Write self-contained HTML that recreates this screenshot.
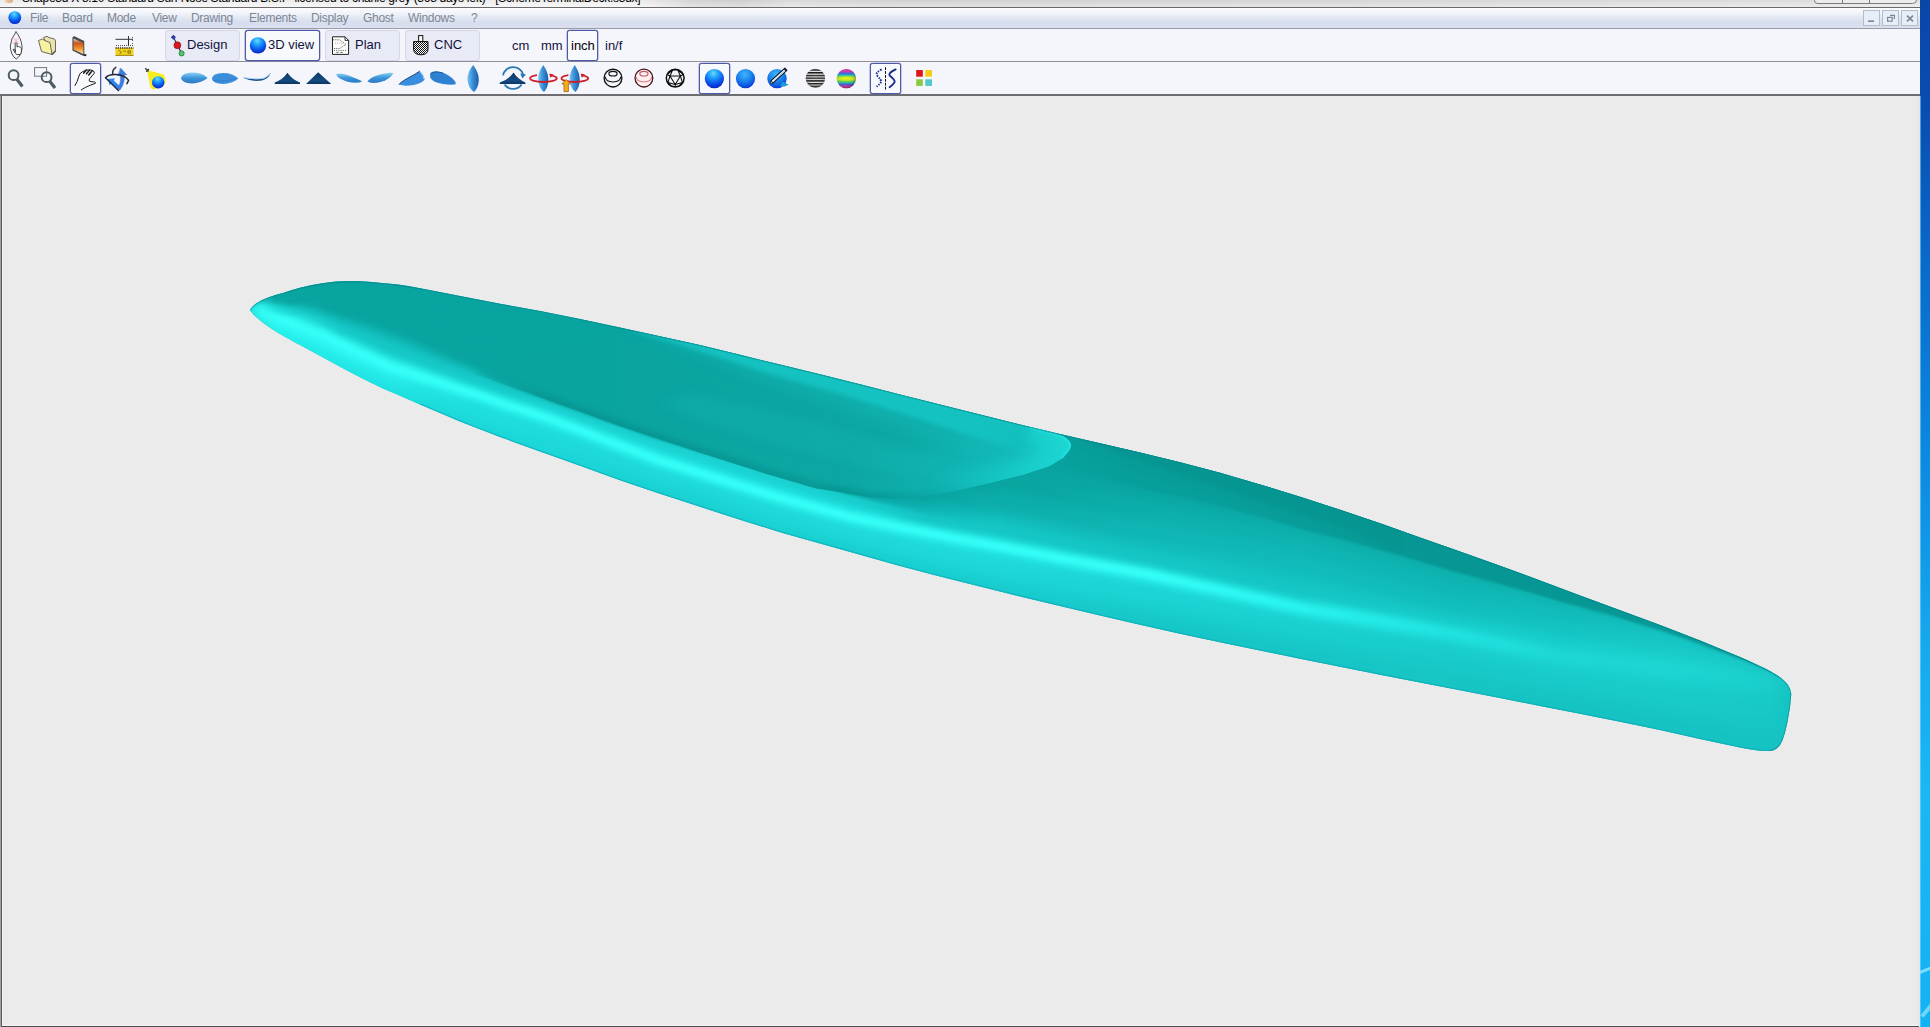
<!DOCTYPE html>
<html>
<head>
<meta charset="utf-8">
<title>Shape3d X</title>
<style>
html,body{margin:0;padding:0;}
body{width:1930px;height:1027px;overflow:hidden;position:relative;background:#ebebeb;font-family:"Liberation Sans",sans-serif;}
.abs{position:absolute;}
#titlestrip{left:0;top:0;width:1920px;height:7px;background:linear-gradient(rgba(0,0,0,.04),rgba(255,255,255,.25)),linear-gradient(90deg,#f4f4f4 0,#f5f5f5 640px,#dcdcdc 690px,#d6d6d6 740px,#e2e2e2 790px,#d9d9d9 900px,#dddddd 1300px,#e4e4e4 1800px,#e9e9e9 1920px);overflow:hidden;}
#titletext{left:22px;top:-9px;font-size:12px;color:#000;white-space:nowrap;letter-spacing:-0.28px;}
#titleline{left:0;top:7px;width:1920px;height:1px;background:#6a6a6a;}
#menubar{left:0;top:8px;width:1920px;height:20px;background:linear-gradient(#fbfcfe 0%,#f1f4fa 25%,#e1e7f2 50%,#d6deed 75%,#dcdff1 100%);}
#menuline{left:0;top:28px;width:1920px;height:1px;background:#9a9ca6;}
.mi{position:absolute;top:11px;font-size:12px;line-height:14px;color:#7c8695;white-space:nowrap;letter-spacing:-0.3px;}
#tb1{left:0;top:29px;width:1920px;height:32px;background:#f5f6fb;}
#tb1line{left:0;top:61px;width:1920px;height:1px;background:#8e9099;}
#tb2{left:0;top:62px;width:1920px;height:32px;background:#f5f6fb;}
#tb2line{left:0;top:94px;width:1920px;height:2px;background:#6e6e72;}
#viewport{left:0;top:96px;width:1920px;height:931px;background:#ebebeb;}
#leftline{left:0;top:96px;width:3px;height:931px;background:linear-gradient(90deg,#a2a2a2 0,#a2a2a2 1px,#585858 1px,#585858 2px,#f3f3f3 2px,#f3f3f3 3px);}
#bottomline{left:2px;top:1025px;width:1917px;height:2px;background:linear-gradient(#f6f6f6 0,#f6f6f6 1px,#4c4c4c 1px,#4c4c4c 2px);}
#rightedge{left:1917px;top:96px;width:3px;height:931px;background:#e4e8e8;}
#desk{overflow:hidden;left:1920px;top:0;width:10px;height:1027px;background:linear-gradient(#0a46a8 0%,#0a4cb0 10%,#0a68c8 24.5%,#0c88e0 44%,#16aaf0 63.5%,#18b8f6 78%,#12b2f4 100%);}
.btn{position:absolute;top:30px;height:29px;width:73px;border:1px solid #d3d7ea;border-radius:3px;background:#e8ebf6;}
.btn.sel{border-color:#4f5aa6;background:#f8f9fd;box-shadow:0 0 0 0.3px #4f5aa6;}
.bt{position:absolute;top:37.2px;font-size:13px;line-height:16px;color:#12123c;white-space:nowrap;}
.ut{position:absolute;top:37.8px;font-size:13px;line-height:15px;color:#12123c;white-space:nowrap;}
.selbox{position:absolute;border:1px solid #4f5aa6;border-radius:2.5px;background:#f8f9fd;box-shadow:0 0 0 0.3px #4f5aa6;}
</style>
</head>
<body>
<div id="titlestrip" class="abs"><div id="titletext" class="abs">Shape3d X 8.10 Standard Surf Nose Standard B.S.I - licensed to charlie grey (368 days left) - [SchemeTerminalDeck.s3dx]</div></div>
<div id="appico" class="abs" style="left:5px;top:0;width:8px;height:3px;background:linear-gradient(90deg,#e8c8a0,#d89858);border-radius:0 0 3px 3px;opacity:.8"></div>
<div id="titleline" class="abs"></div>
<div class="abs" style="left:1836px;top:8px;width:84px;height:20px;background:linear-gradient(90deg,rgba(246,248,252,0),rgba(246,248,252,.85) 40%)"></div>
<div id="menubar" class="abs"></div>
<div id="menuline" class="abs"></div>
<div class="mi" style="left:30px">File</div>
<div class="mi" style="left:62px">Board</div>
<div class="mi" style="left:107px">Mode</div>
<div class="mi" style="left:152px">View</div>
<div class="mi" style="left:191px">Drawing</div>
<div class="mi" style="left:249px">Elements</div>
<div class="mi" style="left:311px">Display</div>
<div class="mi" style="left:363px">Ghost</div>
<div class="mi" style="left:408px">Windows</div>
<div class="mi" style="left:471px">?</div>
<div id="tb1" class="abs"></div>
<div id="tb1line" class="abs"></div>
<div id="tb2" class="abs"></div>
<div id="tb2line" class="abs"></div>
<div id="viewport" class="abs"></div>
<div id="leftline" class="abs"></div>
<div id="rightedge" class="abs"></div>
<div id="bottomline" class="abs"></div>
<div id="desk" class="abs"><div class="abs" style="left:0;top:96px;width:1px;height:931px;background:rgba(120,220,255,0.55)"></div><div class="abs" style="left:-4px;top:968px;width:22px;height:3px;background:rgba(150,230,255,0.8);transform:rotate(-22deg)"></div><div class="abs" style="left:-2px;top:1006px;width:22px;height:4px;background:rgba(150,230,255,0.7);transform:rotate(-50deg)"></div></div>

<!-- toolbar 1 buttons -->
<div class="btn" style="left:165px"></div>
<div class="btn sel" style="left:245px"></div>
<div class="btn" style="left:325px"></div>
<div class="btn" style="left:405px"></div>
<div class="bt" style="left:187px">Design</div>
<div class="bt" style="left:268px">3D view</div>
<div class="bt" style="left:355px">Plan</div>
<div class="bt" style="left:434px">CNC</div>
<div class="selbox" style="left:567px;top:30px;width:29px;height:29px"></div>
<div class="ut" style="left:512px">cm</div>
<div class="ut" style="left:541px">mm</div>
<div class="ut" style="left:571px;color:#000">inch</div>
<div class="ut" style="left:605px">in/f</div>

<!-- toolbar 2 selected boxes -->
<div class="selbox" style="left:70px;top:63px;width:29px;height:29px"></div>
<div class="selbox" style="left:699px;top:63px;width:29px;height:29px"></div>
<div class="selbox" style="left:870px;top:63px;width:29px;height:29px"></div>

<!--ICONS_START-->
<svg class="abs" style="left:0;top:0" width="1920" height="96" viewBox="0 0 1920 96">
<defs>
<radialGradient id="gSph" cx="0.45" cy="0.22" r="0.85"><stop offset="0" stop-color="#6ad8ff"/><stop offset="0.3" stop-color="#1ea0fa"/><stop offset="0.62" stop-color="#0c58ec"/><stop offset="0.9" stop-color="#0828c8"/><stop offset="1" stop-color="#0820a8"/></radialGradient>
<radialGradient id="gSph2" cx="0.45" cy="0.28" r="0.8"><stop offset="0" stop-color="#40b4fc"/><stop offset="0.45" stop-color="#1a86ee"/><stop offset="0.85" stop-color="#0a44d8"/><stop offset="1" stop-color="#0830b8"/></radialGradient><radialGradient id="gShade" cx="0.5" cy="0.42" r="0.58"><stop offset="0" stop-color="#fff" stop-opacity="0.1"/><stop offset="0.6" stop-color="#888" stop-opacity="0.06"/><stop offset="1" stop-color="#333" stop-opacity="0.5"/></radialGradient>
<linearGradient id="gLeafV" x1="0" y1="0" x2="0" y2="1"><stop offset="0" stop-color="#8ad0f4"/><stop offset="0.5" stop-color="#3c94da"/><stop offset="1" stop-color="#2a78c0"/></linearGradient>
<linearGradient id="gLeafH" x1="0" y1="0" x2="1" y2="0"><stop offset="0" stop-color="#7cc4f0"/><stop offset="0.45" stop-color="#3a90d8"/><stop offset="1" stop-color="#1c5ca8"/></linearGradient>
<linearGradient id="gNavy" x1="0" y1="0" x2="0" y2="1"><stop offset="0" stop-color="#0c3a66"/><stop offset="0.7" stop-color="#154a80"/><stop offset="1" stop-color="#0c3560"/></linearGradient>
<linearGradient id="gFlame" x1="0" y1="0" x2="0" y2="1"><stop offset="0" stop-color="#d8dce0"/><stop offset="0.3" stop-color="#c85818"/><stop offset="0.65" stop-color="#f09030"/><stop offset="1" stop-color="#fce8b0"/></linearGradient>
<linearGradient id="gStripe" x1="0" y1="0" x2="0" y2="1">
<stop offset="0" stop-color="#555"/><stop offset="0.10" stop-color="#444"/><stop offset="0.14" stop-color="#eee"/><stop offset="0.22" stop-color="#eee"/><stop offset="0.26" stop-color="#404040"/><stop offset="0.36" stop-color="#404040"/><stop offset="0.40" stop-color="#f4f4f4"/><stop offset="0.48" stop-color="#f4f4f4"/><stop offset="0.52" stop-color="#404040"/><stop offset="0.62" stop-color="#404040"/><stop offset="0.66" stop-color="#ddd"/><stop offset="0.74" stop-color="#ddd"/><stop offset="0.78" stop-color="#3a3a3a"/><stop offset="0.88" stop-color="#444"/><stop offset="0.92" stop-color="#aaa"/><stop offset="1" stop-color="#666"/></linearGradient>
<linearGradient id="gRain" x1="0" y1="0" x2="0" y2="1"><stop offset="0" stop-color="#e03090"/><stop offset="0.14" stop-color="#c040c0"/><stop offset="0.24" stop-color="#3070e0"/><stop offset="0.34" stop-color="#30c8a0"/><stop offset="0.44" stop-color="#90e030"/><stop offset="0.52" stop-color="#d8e820"/><stop offset="0.62" stop-color="#70d838"/><stop offset="0.72" stop-color="#28b8b0"/><stop offset="0.80" stop-color="#4060d8"/><stop offset="0.9" stop-color="#d038b0"/><stop offset="1" stop-color="#e03080"/></linearGradient>
<pattern id="pStr" width="4" height="2.72" patternUnits="userSpaceOnUse" patternTransform="translate(0 69.3)"><rect width="4" height="2.72" fill="#f6f6f6"/><rect width="4" height="1.5" fill="#0c0c0c"/></pattern>
<radialGradient id="gShade2" cx="0.45" cy="0.45" r="0.56"><stop offset="0" stop-color="#fff" stop-opacity="0"/><stop offset="0.75" stop-color="#402040" stop-opacity="0.05"/><stop offset="1" stop-color="#301030" stop-opacity="0.45"/></radialGradient>
<pattern id="pDots" width="2" height="2" patternUnits="userSpaceOnUse"><rect width="2" height="2" fill="#fff"/><rect width="1" height="1" fill="#111"/><rect x="1" y="1" width="1" height="1" fill="#111"/></pattern>
</defs>

<!-- menu app icon -->
<circle cx="14.8" cy="17.6" r="6.4" fill="url(#gSph)"/>

<!-- ROW 1 -->
<!-- board + hand -->
<g fill="none" stroke-linecap="round" stroke-linejoin="round">
<path d="M16 32 Q21.4 38 22.1 47 Q21.8 55.4 16.2 59 Q10.7 55.4 10.3 46 Q10.9 38 16 32 Z" stroke="#3c3c3c" stroke-width="0.9"/>
<path d="M13.2 37.6 L18.8 43.4 M18.8 37.6 L13.2 43.4" stroke="#f0a8b0" stroke-width="1"/>
<path d="M15.2 52 L15.2 43.2 Q16.2 42.2 17 43.2 L17 47 L18.2 46.4 L19.2 47 L20.2 47 L21.4 48.2 L21.4 52 L20.5 54.5 L16.6 54.5 L14 51 L13.2 49.5 Q13.8 48.6 15.2 50 Z" fill="#fff" stroke="#333" stroke-width="0.9"/>
</g>
<!-- folder -->
<g stroke="#6a6a60" stroke-width="1" stroke-linejoin="round">
<path d="M43.5 37.5 L47 36.3 L49 37.6 L54.5 39 L55.5 41 L55.5 51 L52 54.5 Z" fill="#e8e4b0"/>
<path d="M38.5 40.5 L42.5 39 L44.5 40.5 L50 42.5 L52 54.5 L41.5 51.5 Z" fill="#f6f2a0"/>
<path d="M52 54.5 L55.5 51" fill="none" stroke="#555" stroke-width="1.6"/>
</g>
<!-- flame door -->
<g stroke-linejoin="round">
<path d="M72.4 37.4 L74 36.1 L84.2 41 L84.4 54 L86.8 54.7 L85.3 56.2 L82.4 55.5 L72.4 50.6 Z" fill="#4c4c4c"/>
<path d="M73.5 38.4 L83.3 43 L83.3 54 L73.5 49.5 Z" fill="url(#gFlame)"/>
<path d="M83 54.4 L86.8 54.8 L85.3 56.3 Z" fill="#1c1c1c"/>
</g>
<!-- ruler -->
<g>
<path d="M115.5 39.3 H133" stroke="#333" stroke-width="1"/>
<path d="M128.5 36 V46" stroke="#333" stroke-width="1"/>
<path d="M132.5 37 V46" stroke="#555" stroke-width="1" stroke-dasharray="1 2"/>
<path d="M116 45.6 H133" stroke="#444" stroke-width="1" stroke-dasharray="1 1"/>
<rect x="115.5" y="47.8" width="18" height="7.4" fill="#f2d21c"/>
<path d="M115.5 48 H133.5" stroke="#222" stroke-width="1.4" stroke-dasharray="1.2 1"/>
<path d="M115.5 55.4 H133.5" stroke="#9a8410" stroke-width="1"/>
<path d="M118.5 51 a1.5 1.5 0 1 1 1.2 2.6 M123.5 51.2 h2.5 M128 50.8 h2.4 v2.4 h-2.4 z" fill="none" stroke="#7a6a10" stroke-width="0.9"/>
</g>

<!-- Design icon -->
<g>
<path d="M173.2 36.8 L181.6 53.2" stroke="#1a2a6a" stroke-width="1.1"/>
<rect x="171.6" y="35.4" width="3.6" height="3.6" transform="rotate(45 173.4 37.2)" fill="#2a3aa0"/>
<circle cx="177.4" cy="45.3" r="3.5" fill="#d81820" stroke="#801010" stroke-width="0.6"/>
<circle cx="181.6" cy="53.4" r="2.6" fill="#58c070" stroke="#1a7a30" stroke-width="0.7"/>
</g>
<!-- 3D view icon -->
<circle cx="258" cy="45.4" r="8.2" fill="url(#gSph)"/>
<!-- Plan icon -->
<g fill="none" stroke="#222" stroke-width="1">
<path d="M332.5 36.8 H345 L348.6 40.4 V54.4 H332.5 Z" fill="#fdfdfb"/>
<path d="M345 36.8 V40.4 H348.6" stroke-width="0.9"/>
<path d="M333 39.8 H339.5 L346 44.5 L339.5 48.5 H333" stroke="#555" stroke-width="0.9" stroke-dasharray="1.2 1"/>
<path d="M335 43.2 H343" stroke="#b88" stroke-width="0.8" stroke-dasharray="1 1.2"/>
<path d="M334 50.4 H346" stroke="#555" stroke-width="0.9" stroke-dasharray="1 1.2"/>
<path d="M336.5 52.4 h2 M340.5 52.4 h2" stroke="#444" stroke-width="0.9"/>
</g>
<!-- CNC icon -->
<g stroke="#111" stroke-width="1">
<rect x="418.6" y="35.6" width="4.2" height="6" fill="#fafafa"/>
<path d="M413.6 41.6 H428 V49 Q428 54.8 420.8 54.8 Q413.6 54.8 413.6 49 Z" fill="url(#pDots)"/>
</g>
<!-- ROW 2 -->
<!-- magnifier -->
<g fill="none" stroke="#4c5c62" stroke-linecap="butt">
<circle cx="13.6" cy="75.2" r="4.9" stroke-width="2"/>
<path d="M16.8 79.2 L22.4 86.4" stroke-width="3.2"/>
</g>
<!-- zoom rect -->
<g fill="none" stroke="#4c5c62">
<rect x="34.6" y="67.6" width="12" height="8.6" stroke="#707880" stroke-width="1"/>
<circle cx="46.6" cy="77.2" r="4.9" stroke-width="2"/>
<path d="M49.8 81.2 L55 88" stroke-width="3.2"/>
</g>
<!-- hand -->
<g fill="none" stroke="#1c1c1c" stroke-linecap="round" stroke-linejoin="round">
<path d="M75 85.5 Q77.4 82 78.6 77 Q79.2 73.2 82.6 71.6 Q86 69.3 91.2 70 Q94.2 70.6 94.5 72.9 Q92 76 89.6 78.8 Q88.8 80.4 89.4 81.2 Q92 82 94.5 81.9 Q95.9 82.4 95.4 83.3 Q90 85.2 85.2 87.5 Q83 88.6 81.3 89.9" stroke-width="1"/>
<path d="M83.7 73.1 L86.4 70.1 M86.5 73.8 L89.5 70.1 M88.7 75 L92.2 70.7" stroke-width="1.5"/>
</g>
<!-- rotate icon -->
<g fill="none" stroke-linecap="round" stroke-linejoin="round">
<path d="M115.8 67.3 Q112.2 69.6 112.7 73.8" stroke="#2c3438" stroke-width="1.5"/>
<path d="M120.7 68.2 L126.6 74.8 L123.8 75 Q125.6 82 119.8 90.2 L117.6 88.6 Q121.8 82 120.4 75.4 L118.2 75.8 Z" fill="#3a7ee0" stroke="#2a5cb8" stroke-width="0.5"/>
<path d="M105.6 77.8 Q108 74.4 116 74.6 Q125 75.2 128.6 80.4 L126.9 83.6" stroke="#1e2a3c" stroke-width="1.5"/>
<path d="M108 79 L115 78.2 L113.8 80.6 L119.8 86.2 L117.7 89.2 L111.6 83.2 L109.6 85.2 Z" fill="#2f86f0" stroke="none"/>
<path d="M105.6 77.8 L118.4 90.4" stroke="#1e2a3c" stroke-width="1.4"/>
</g>
<!-- light + sphere -->
<g>
<path d="M147 70 L163.6 74.6 Q166.4 79 165 84 L159 88 L152.4 89.6 L150.4 87.6 Z" fill="#f6ee1c"/>
<path d="M145.2 68.2 L148.6 71.4 M146.2 71.8 L148.8 69" stroke="#333" stroke-width="1.3" fill="none"/>
<circle cx="158.2" cy="82.4" r="6.2" fill="url(#gSph)"/>
</g>
<!-- leaf 1 -->
<path d="M181 78.2 Q182 73 192 72.6 Q202 72.6 207.6 78 Q201 83.4 192 83.4 Q182 83.2 181 78.2 Z" fill="url(#gLeafV)"/>
<!-- leaf 2 -->
<path d="M211.8 78.6 Q213 73.4 223 73 Q233 73 238.4 78.6 Q232 84 223 84 Q213 83.8 211.8 78.6 Z" fill="#3a8edc"/>
<path d="M212.4 80 Q222 83 236 78.2" fill="none" stroke="#2a72c0" stroke-width="0.8" opacity="0.7"/>
<!-- rocker curve -->
<path d="M242.6 77.4 Q256 80.4 264 78.6 Q268.4 77 270.6 72.8 Q268.8 79 262 80.4 Q252 82.2 242.6 77.4 Z" fill="#1c5090"/>
<path d="M243 77.4 Q256 79.6 264 78 Q268 76.6 270.4 73" fill="none" stroke="#9ad0f0" stroke-width="0.8"/>
<!-- tri concave -->
<path d="M287.4 72.8 Q292 79.6 300 82.4 L300 83.9 L274.8 83.9 L274.8 82.4 Q283 79.6 287.4 72.8 Z" fill="url(#gNavy)"/>
<!-- tri straight -->
<path d="M318.2 72.3 L331.2 83.9 L306 83.9 Z" fill="url(#gNavy)"/>
<!-- tilted leaf down-right -->
<path d="M336 74.4 Q339.4 71.8 349.4 75.8 Q360 80 362.2 81.6 Q356.6 84.2 346.6 81.4 Q337.4 78.2 336 74.4 Z" fill="url(#gLeafV)"/>
<!-- tilted leaf up-right -->
<path d="M367.4 81.6 Q369.6 77.4 379.8 74.4 Q390 72 393.4 73 Q390.4 79 381.4 81.8 Q371.4 84.4 367.4 81.6 Z" fill="url(#gLeafV)"/>
<!-- wedge -->
<path d="M399 84.6 Q399.4 83 408 78 Q416 74 419.8 71 Q424 75 424.6 79.6 Q423 83 414 85 Q404 86.6 399 84.6 Z" fill="#3a8ede"/>
<path d="M399 84.6 Q399.4 83 408 78 Q416 74 419.8 71" fill="none" stroke="#153a70" stroke-width="0.9"/>
<path d="M419.8 71.4 Q423.6 75 424 79" fill="none" stroke="#a0d4f4" stroke-width="1"/>
<!-- blob -->
<path d="M430 74.4 Q431 70.6 438 71.4 Q446 72.6 452 78 Q456.4 82 455.6 84.2 Q452 85.2 443 84 Q433 82.4 430.4 78 Z" fill="#2e80d0"/>
<path d="M430.6 73.6 Q436 70.4 443 73" fill="none" stroke="#1c5aa0" stroke-width="0.9"/>
<!-- vertical leaf -->
<path d="M473.2 65 Q479 73 478.8 80 Q478.4 88 474 92 Q468 88 467.4 79 Q467.4 72 473.2 65 Z" fill="url(#gLeafH)"/>
<!-- tri with circular arrow -->
<g>
<path d="M523.2 74.6 A10.4 10.4 0 0 0 503 75.4" fill="none" stroke="#2c78b4" stroke-width="1.8"/>
<path d="M504.6 84.6 A10.4 10.4 0 0 0 521.6 84.4" fill="none" stroke="#2c78b4" stroke-width="1.8"/>
<path d="M520.2 73.6 L526 74.4 L522.4 78.6 Z" fill="#2c78b4"/>
<path d="M513.6 72.6 Q518 79.6 525.4 82.4 L525.4 83.9 L499.8 83.9 L499.8 82.4 Q508.6 79.6 513.6 72.6 Z" fill="url(#gNavy)"/>
</g>
<!-- board w/ red ring -->
<g>
<path d="M530 78.4 A13.4 3.8 0 0 1 537 75.2" fill="none" stroke="#cc1c28" stroke-width="1.8"/>
<path d="M543.3 65 Q548.6 73 548.4 80 Q548 88 544 92 Q538.6 88 538.2 79 Q538.2 72 543.3 65 Z" fill="url(#gLeafH)"/>
<path d="M530 78.2 A13.4 3.8 0 0 0 556.8 78.2 A13.4 3.8 0 0 0 551 75.4" fill="none" stroke="#cc1c28" stroke-width="1.8"/>
<path d="M549.2 73.4 L553.6 74.6 L550.4 77.8 Z" fill="#cc1c28"/>
</g>
<g>
<path d="M561.4 78.4 A13.4 3.8 0 0 1 568.4 75.2" fill="none" stroke="#cc1c28" stroke-width="1.8"/>
<path d="M574.7 65 Q580 73 579.8 80 Q579.4 88 575.4 92 Q570 88 569.6 79 Q569.6 72 574.7 65 Z" fill="url(#gLeafH)"/>
<path d="M561.4 78.2 A13.4 3.8 0 0 0 588.2 78.2 A13.4 3.8 0 0 0 582.4 75.4" fill="none" stroke="#cc1c28" stroke-width="1.8"/>
<path d="M580.6 73.4 L585 74.6 L581.8 77.8 Z" fill="#cc1c28"/>
<path d="M566.2 79.4 L570.6 84 L568.4 84 L568.4 91.6 L564 91.6 L564 84 L561.8 84 Z" fill="#f6ac18" stroke="#8a5a08" stroke-width="0.7"/>
</g>
<!-- wire sphere black -->
<g fill="none" stroke="#101010" stroke-width="1.15">
<circle cx="613" cy="78.1" r="8.9" stroke-width="1.35"/>
<ellipse cx="613" cy="73.7" rx="4.1" ry="2.3"/>
<path d="M605.3 76.8 Q605.6 81.9 613 82 Q620.4 81.9 620.7 76.8"/>
</g>
<g fill="none" stroke="#d87888" stroke-width="1.1">
<circle cx="643.9" cy="78.1" r="8.9" fill="#fff0f0" stroke="#4c1820" stroke-width="1.3"/>
<ellipse cx="643.9" cy="73.7" rx="4.1" ry="2.3" stroke="#c05868"/>
<path d="M636.2 76.8 Q636.5 81.9 643.9 82 Q651.3 81.9 651.6 76.8"/>
</g>
<!-- geodesic -->
<g fill="none" stroke="#0c0c0c" stroke-width="1.05" stroke-linejoin="round">
<circle cx="675.2" cy="78.1" r="8.9" stroke-width="1.5"/>
<path d="M670 76 L680.4 76 L675.2 84.6 Z"/>
<path d="M667 74.6 L670 76 L668 82.4 M683.4 74.6 L680.4 76 L682.4 82.4 M675.2 84.6 L675.2 87 M670 76 L672.6 70 L677.8 70 L680.4 76 M668 82.4 L675.2 84.6 L682.4 82.4 M672.6 70 L675.2 69.4 M668 82.4 L670.6 85.6 M682.4 82.4 L679.8 85.6 M667 74.6 L672.6 70 M683.4 74.6 L677.8 70"/>
</g>
<!-- blue spheres -->
<circle cx="714.4" cy="78.6" r="9.6" fill="url(#gSph)"/>
<circle cx="745.5" cy="78.6" r="9.6" fill="url(#gSph2)"/>
<!-- sphere + pen -->
<g>
<circle cx="777" cy="78.6" r="9.7" fill="url(#gSph2)"/>
<path d="M782.6 81.4 L788.6 84.8 L784.4 86.6 L779.6 86 Z" fill="#1a9ad4"/>
<path d="M770.9 80.9 L784.9 68.2 L786.9 70.4 L772.9 83.1 Z" fill="#f6f8fb" stroke="#101828" stroke-width="1.1" stroke-linejoin="round"/>
<path d="M773.6 80.8 L785 70.4" stroke="#9ccaf2" stroke-width="0.9"/>
<path d="M770.9 80.9 L772.9 83.1 L770.2 83.7 Z" fill="#e8ecf0" stroke="#101828" stroke-width="0.7" stroke-linejoin="round"/>
<path d="M784.4 68.8 L786.5 71" stroke="#101828" stroke-width="1.5"/>
</g>
<!-- striped sphere -->
<circle cx="815.4" cy="78.3" r="9.6" fill="url(#pStr)"/>
<circle cx="815.4" cy="78.3" r="9.6" fill="url(#gShade)"/>
<!-- rainbow sphere -->
<circle cx="846.3" cy="78.6" r="9.6" fill="url(#gRain)"/>
<ellipse cx="846.3" cy="78.4" rx="9.2" ry="2.5" fill="#c8ec20" opacity="0.7"/>
<ellipse cx="846.3" cy="78.4" rx="5.5" ry="1.1" fill="#f0f020" opacity="0.7"/>
<circle cx="846.3" cy="78.6" r="9.6" fill="url(#gShade2)"/>
<!-- S|S -->
<g fill="none" stroke="#1c2a8c" stroke-linecap="butt">
<path d="M881.6 69.4 Q875.4 72.6 876.8 75.4 Q881.8 80.2 881 82 Q880 84.2 876.6 86.6" stroke-width="1.9" stroke-dasharray="1.5 1.2"/>
<path d="M885.5 67.2 V89.8" stroke="#101010" stroke-width="1" stroke-dasharray="2.8 1.1"/>
<path d="M895.6 69.4 Q888 73 889.6 75.6 Q895.4 80.2 894.6 82.2 Q893.4 84.6 889.6 87.2" stroke-width="1.9" stroke-linecap="round"/>
</g>
<!-- 4 squares -->
<rect x="916.2" y="70" width="6.6" height="6.7" fill="#e0121a"/>
<rect x="925.3" y="70" width="6.7" height="6.7" fill="#f8cc14"/>
<rect x="916.2" y="79.3" width="6.6" height="6.6" fill="#8cc83e"/>
<rect x="925.3" y="79.3" width="6.7" height="6.6" fill="#52c8ca"/>
<!-- caption buttons (cut off) -->
<g fill="none" stroke="#7c7c7c" stroke-width="1">
<path d="M1814.5 -2 V0.5 Q1814.5 3.5 1818 3.5 H1912.5 Q1916.5 3.5 1916.5 0 V-2" fill="#ececec"/>
<path d="M1842.5 -1 V3.5 M1869.5 -1 V3.5"/>
</g>
<!-- window buttons -->
<g>
<rect x="1863.5" y="10.5" width="16" height="15" fill="#e6eef8" stroke="#b4bcc8" stroke-width="1"/>
<rect x="1882.5" y="10.5" width="16" height="15" fill="#e6eef8" stroke="#b4bcc8" stroke-width="1"/>
<rect x="1901.5" y="10.5" width="16" height="15" fill="#e6eef8" stroke="#b4bcc8" stroke-width="1"/>
<path d="M1868 21.2 H1874" stroke="#7a8694" stroke-width="1.6"/>
<path d="M1890 15.4 H1894.4 V19" fill="none" stroke="#7a8694" stroke-width="1.2"/>
<rect x="1887.6" y="17.4" width="4.6" height="3.8" fill="none" stroke="#7a8694" stroke-width="1.2"/>
<path d="M1907 15.6 L1913 21.4 M1913 15.6 L1907 21.4" stroke="#7a8694" stroke-width="1.6"/>
</g>
</svg>
<!--ICONS_END-->
<!--BOARD_START-->
<svg class="abs" style="left:0;top:96px" width="1920" height="929" viewBox="0 96 1920 929">
<defs>
<clipPath id="bclip"><path d="M250 309.5 253 306.1 256 303.5 259 301.7 262 300.1 265 298.8 268 297.6 271 296.5 274 295.5 277 294.5 280 293.7 283 292.9 286 292 289 291.1 292 290.1 295 289.2 298 288.3 300 287.7 312 285.1 324 283 336 281.6 348 281 360 281.2 372 281.9 384 283.2 396 284.3 408 286 420 288.2 460 296.1 500 303.8 540 310.9 580 318.9 620 327.6 660 336.2 700 345.1 740 354.7 780 364.6 820 374.3 860 384.2 900 394.4 940 404.5 980 414.5 1020 424.4 1060 434.1 1100 443.3 1140 452.4 1180 462.3 1220 472.8 1260 484.4 1300 496.7 1340 509.7 1380 523.2 1420 537.4 1460 551.6 1500 565.8 1540 580.4 1580 595.5 1620 610.3 1660 624.9 1700 640.5 1740 657.1 1748 660.6 1756 664.2 1764 668 1770 671.1 1772.5 672.5 1775 674 1777.5 675.6 1780 677.3 1782.5 679.2 1785 681.5 1787.5 684.2 1790 688.8 1791.3 694 1791.3 694 1790 707.1 1787.5 721.8 1785 732.5 1782.5 740.2 1780 745.1 1777.5 747.8 1775 749.5 1772.5 750.4 1770 751.1 1764 751.1 1756 750.2 1748 749 1740 747.6 1700 739 1660 730.1 1620 721.8 1580 713.8 1540 705.9 1500 698.1 1460 690.3 1420 682.6 1380 674.8 1340 666.8 1300 658.7 1260 650.6 1220 642.3 1180 633.7 1140 624.7 1100 615.5 1060 606 1020 596.4 980 586.6 940 576.5 900 565.9 860 554.7 820 543.6 780 532.2 740 519.8 700 506.8 660 493.8 620 480.3 580 465.8 540 451.4 500 437 460 421.4 420 404.5 408 399.3 396 394.1 384 389 372 383.3 360 377.3 348 371.1 336 364.6 324 358.1 312 351.6 300 345.1 298 344 295 342.4 292 340.8 289 339.1 286 337.4 283 335.7 280 334 277 332.2 274 330.3 271 328.4 268 326.3 265 324.2 262 321.9 259 319.5 256 316.9 253 314 250 310.5Z"/></clipPath>
<filter id="bblur" color-interpolation-filters="sRGB" x="-5%" y="-5%" width="110%" height="110%"><feGaussianBlur stdDeviation="1.2"/></filter>
<linearGradient id="g0" gradientUnits="userSpaceOnUse" x1="250" x2="1791.3"><stop offset="0" stop-color="#27ece8"/><stop offset="0.0039" stop-color="#23d9d5"/><stop offset="0.0078" stop-color="#1bc1be"/><stop offset="0.0117" stop-color="#12b3af"/><stop offset="0.0162" stop-color="#08a4a0"/><stop offset="0.0247" stop-color="#08a4a0"/><stop offset="0.026" stop-color="#08a4a0"/><stop offset="0.0487" stop-color="#08a4a0"/><stop offset="0.059" stop-color="#08a49f"/><stop offset="0.0811" stop-color="#08a49f"/><stop offset="0.0921" stop-color="#08a49f"/><stop offset="0.1103" stop-color="#08a4a0"/><stop offset="0.1174" stop-color="#08a4a0"/><stop offset="0.1362" stop-color="#08a49f"/><stop offset="0.146" stop-color="#08a4a0"/><stop offset="0.1622" stop-color="#08a4a0"/><stop offset="0.1882" stop-color="#08a4a0"/><stop offset="0.1946" stop-color="#08a4a0"/><stop offset="0.2141" stop-color="#08a4a0"/><stop offset="0.2401" stop-color="#08a4a0"/><stop offset="0.266" stop-color="#08a4a0"/><stop offset="0.292" stop-color="#08a4a0"/><stop offset="0.3179" stop-color="#08a4a0"/><stop offset="0.3439" stop-color="#08a4a0"/><stop offset="0.3698" stop-color="#08a4a0"/><stop offset="0.3893" stop-color="#08a4a0"/><stop offset="0.3958" stop-color="#08a4a0"/><stop offset="0.4217" stop-color="#08a4a0"/><stop offset="0.4379" stop-color="#08a4a0"/><stop offset="0.4477" stop-color="#08a3a0"/><stop offset="0.4736" stop-color="#08a4a0"/><stop offset="0.4866" stop-color="#08a4a0"/><stop offset="0.4996" stop-color="#08a29e"/><stop offset="0.5255" stop-color="#079f9c"/><stop offset="0.5515" stop-color="#069c99"/><stop offset="0.5774" stop-color="#059996"/><stop offset="0.5839" stop-color="#059996"/><stop offset="0.6034" stop-color="#059996"/><stop offset="0.6293" stop-color="#059996"/><stop offset="0.6553" stop-color="#059996"/><stop offset="0.6812" stop-color="#059996"/><stop offset="0.7072" stop-color="#059996"/><stop offset="0.7331" stop-color="#059996"/><stop offset="0.7591" stop-color="#059996"/><stop offset="0.7786" stop-color="#059896"/><stop offset="0.7851" stop-color="#059896"/><stop offset="0.811" stop-color="#059896"/><stop offset="0.837" stop-color="#059996"/><stop offset="0.8499" stop-color="#059996"/><stop offset="0.8629" stop-color="#069a97"/><stop offset="0.8889" stop-color="#079d9a"/><stop offset="0.9148" stop-color="#09a2a0"/><stop offset="0.9207" stop-color="#0aa5a3"/><stop offset="0.9408" stop-color="#0eb0af"/><stop offset="0.9609" stop-color="#12bcbb"/><stop offset="0.9667" stop-color="#13bfbe"/><stop offset="0.9862" stop-color="#18c8c7"/><stop offset="1" stop-color="#15c3c2"/></linearGradient>
<linearGradient id="g1" gradientUnits="userSpaceOnUse" x1="250" x2="1791.3"><stop offset="0" stop-color="#27ece8"/><stop offset="0.0039" stop-color="#23d9d5"/><stop offset="0.0078" stop-color="#1bc1be"/><stop offset="0.0117" stop-color="#12b3af"/><stop offset="0.0162" stop-color="#08a4a0"/><stop offset="0.0247" stop-color="#08a4a0"/><stop offset="0.026" stop-color="#08a4a0"/><stop offset="0.0487" stop-color="#08a4a0"/><stop offset="0.059" stop-color="#08a39f"/><stop offset="0.0811" stop-color="#08a39f"/><stop offset="0.0921" stop-color="#08a39f"/><stop offset="0.1103" stop-color="#08a4a0"/><stop offset="0.1174" stop-color="#08a4a0"/><stop offset="0.1362" stop-color="#08a4a0"/><stop offset="0.146" stop-color="#08a4a0"/><stop offset="0.1622" stop-color="#08a3a0"/><stop offset="0.1882" stop-color="#08a4a0"/><stop offset="0.1946" stop-color="#08a4a0"/><stop offset="0.2141" stop-color="#08a4a0"/><stop offset="0.2401" stop-color="#08a4a0"/><stop offset="0.266" stop-color="#08a4a0"/><stop offset="0.292" stop-color="#08a4a0"/><stop offset="0.3179" stop-color="#08a4a0"/><stop offset="0.3439" stop-color="#08a4a0"/><stop offset="0.3698" stop-color="#08a4a0"/><stop offset="0.3893" stop-color="#08a4a0"/><stop offset="0.3958" stop-color="#08a4a0"/><stop offset="0.4217" stop-color="#08a4a0"/><stop offset="0.4379" stop-color="#08a4a0"/><stop offset="0.4477" stop-color="#08a4a0"/><stop offset="0.4736" stop-color="#08a4a0"/><stop offset="0.4866" stop-color="#08a4a0"/><stop offset="0.4996" stop-color="#08a29e"/><stop offset="0.5255" stop-color="#079f9c"/><stop offset="0.5515" stop-color="#069c99"/><stop offset="0.5774" stop-color="#059996"/><stop offset="0.5839" stop-color="#059996"/><stop offset="0.6034" stop-color="#059996"/><stop offset="0.6293" stop-color="#059996"/><stop offset="0.6553" stop-color="#059996"/><stop offset="0.6812" stop-color="#059996"/><stop offset="0.7072" stop-color="#059996"/><stop offset="0.7331" stop-color="#059996"/><stop offset="0.7591" stop-color="#059996"/><stop offset="0.7786" stop-color="#059896"/><stop offset="0.7851" stop-color="#059896"/><stop offset="0.811" stop-color="#059896"/><stop offset="0.837" stop-color="#059996"/><stop offset="0.8499" stop-color="#059996"/><stop offset="0.8629" stop-color="#069a97"/><stop offset="0.8889" stop-color="#08a09d"/><stop offset="0.9148" stop-color="#0cabaa"/><stop offset="0.9207" stop-color="#0eafae"/><stop offset="0.9408" stop-color="#11b8b7"/><stop offset="0.9609" stop-color="#14c1c0"/><stop offset="0.9667" stop-color="#15c3c2"/><stop offset="0.9862" stop-color="#18c9c8"/><stop offset="1" stop-color="#15c3c2"/></linearGradient>
<linearGradient id="g2" gradientUnits="userSpaceOnUse" x1="250" x2="1791.3"><stop offset="0" stop-color="#27ece8"/><stop offset="0.0039" stop-color="#23d9d5"/><stop offset="0.0078" stop-color="#1bc2be"/><stop offset="0.0117" stop-color="#12b3af"/><stop offset="0.0162" stop-color="#08a4a0"/><stop offset="0.0247" stop-color="#08a4a0"/><stop offset="0.026" stop-color="#08a4a0"/><stop offset="0.0487" stop-color="#08a4a0"/><stop offset="0.059" stop-color="#08a4a0"/><stop offset="0.0811" stop-color="#08a4a0"/><stop offset="0.0921" stop-color="#08a4a0"/><stop offset="0.1103" stop-color="#08a4a0"/><stop offset="0.1174" stop-color="#08a4a0"/><stop offset="0.1362" stop-color="#08a4a0"/><stop offset="0.146" stop-color="#08a4a0"/><stop offset="0.1622" stop-color="#08a39f"/><stop offset="0.1882" stop-color="#08a4a0"/><stop offset="0.1946" stop-color="#08a4a0"/><stop offset="0.2141" stop-color="#08a4a0"/><stop offset="0.2401" stop-color="#08a4a0"/><stop offset="0.266" stop-color="#08a4a0"/><stop offset="0.292" stop-color="#08a4a0"/><stop offset="0.3179" stop-color="#08a4a0"/><stop offset="0.3439" stop-color="#08a4a0"/><stop offset="0.3698" stop-color="#08a4a0"/><stop offset="0.3893" stop-color="#08a4a0"/><stop offset="0.3958" stop-color="#08a4a0"/><stop offset="0.4217" stop-color="#08a4a0"/><stop offset="0.4379" stop-color="#08a4a0"/><stop offset="0.4477" stop-color="#08a4a0"/><stop offset="0.4736" stop-color="#08a4a0"/><stop offset="0.4866" stop-color="#08a4a0"/><stop offset="0.4996" stop-color="#08a29e"/><stop offset="0.5255" stop-color="#079f9c"/><stop offset="0.5515" stop-color="#069d99"/><stop offset="0.5774" stop-color="#059a97"/><stop offset="0.5839" stop-color="#059996"/><stop offset="0.6034" stop-color="#059996"/><stop offset="0.6293" stop-color="#059996"/><stop offset="0.6553" stop-color="#059996"/><stop offset="0.6812" stop-color="#059996"/><stop offset="0.7072" stop-color="#059996"/><stop offset="0.7331" stop-color="#059996"/><stop offset="0.7591" stop-color="#059996"/><stop offset="0.7786" stop-color="#059896"/><stop offset="0.7851" stop-color="#059896"/><stop offset="0.811" stop-color="#059896"/><stop offset="0.837" stop-color="#059996"/><stop offset="0.8499" stop-color="#059996"/><stop offset="0.8629" stop-color="#069b98"/><stop offset="0.8889" stop-color="#09a3a0"/><stop offset="0.9148" stop-color="#12bbba"/><stop offset="0.9207" stop-color="#13bfbe"/><stop offset="0.9408" stop-color="#14c2c0"/><stop offset="0.9609" stop-color="#16c5c3"/><stop offset="0.9667" stop-color="#17c7c5"/><stop offset="0.9862" stop-color="#19cac9"/><stop offset="1" stop-color="#15c3c2"/></linearGradient>
<linearGradient id="g3" gradientUnits="userSpaceOnUse" x1="250" x2="1791.3"><stop offset="0" stop-color="#27ece8"/><stop offset="0.0039" stop-color="#23dad5"/><stop offset="0.0078" stop-color="#1cc2bf"/><stop offset="0.0117" stop-color="#12b3b0"/><stop offset="0.0162" stop-color="#08a4a0"/><stop offset="0.0247" stop-color="#08a4a0"/><stop offset="0.026" stop-color="#08a4a0"/><stop offset="0.0487" stop-color="#08a4a0"/><stop offset="0.059" stop-color="#08a4a0"/><stop offset="0.0811" stop-color="#08a4a0"/><stop offset="0.0921" stop-color="#08a4a0"/><stop offset="0.1103" stop-color="#08a4a0"/><stop offset="0.1174" stop-color="#08a4a0"/><stop offset="0.1362" stop-color="#08a4a0"/><stop offset="0.146" stop-color="#08a4a0"/><stop offset="0.1622" stop-color="#08a4a0"/><stop offset="0.1882" stop-color="#08a4a0"/><stop offset="0.1946" stop-color="#08a4a0"/><stop offset="0.2141" stop-color="#08a4a0"/><stop offset="0.2401" stop-color="#08a4a0"/><stop offset="0.266" stop-color="#08a4a0"/><stop offset="0.292" stop-color="#08a4a0"/><stop offset="0.3179" stop-color="#08a4a0"/><stop offset="0.3439" stop-color="#08a4a0"/><stop offset="0.3698" stop-color="#08a4a0"/><stop offset="0.3893" stop-color="#08a4a0"/><stop offset="0.3958" stop-color="#08a4a0"/><stop offset="0.4217" stop-color="#08a4a0"/><stop offset="0.4379" stop-color="#08a4a0"/><stop offset="0.4477" stop-color="#08a4a0"/><stop offset="0.4736" stop-color="#08a4a0"/><stop offset="0.4866" stop-color="#08a4a0"/><stop offset="0.4996" stop-color="#08a29e"/><stop offset="0.5255" stop-color="#07a09c"/><stop offset="0.5515" stop-color="#069d9a"/><stop offset="0.5774" stop-color="#069a97"/><stop offset="0.5839" stop-color="#059a97"/><stop offset="0.6034" stop-color="#059a97"/><stop offset="0.6293" stop-color="#069a97"/><stop offset="0.6553" stop-color="#069a97"/><stop offset="0.6812" stop-color="#069a97"/><stop offset="0.7072" stop-color="#069a97"/><stop offset="0.7331" stop-color="#059996"/><stop offset="0.7591" stop-color="#059996"/><stop offset="0.7786" stop-color="#059896"/><stop offset="0.7851" stop-color="#059896"/><stop offset="0.811" stop-color="#059896"/><stop offset="0.837" stop-color="#059996"/><stop offset="0.8499" stop-color="#059996"/><stop offset="0.8629" stop-color="#069c99"/><stop offset="0.8889" stop-color="#0aa4a2"/><stop offset="0.9148" stop-color="#13bebd"/><stop offset="0.9207" stop-color="#13c0bf"/><stop offset="0.9408" stop-color="#15c3c1"/><stop offset="0.9609" stop-color="#16c7c5"/><stop offset="0.9667" stop-color="#17c8c6"/><stop offset="0.9862" stop-color="#19cac9"/><stop offset="1" stop-color="#15c3c2"/></linearGradient>
<linearGradient id="g4" gradientUnits="userSpaceOnUse" x1="250" x2="1791.3"><stop offset="0" stop-color="#27ece8"/><stop offset="0.0039" stop-color="#24dbd6"/><stop offset="0.0078" stop-color="#1dc5c2"/><stop offset="0.0117" stop-color="#13b5b1"/><stop offset="0.0162" stop-color="#08a4a0"/><stop offset="0.0247" stop-color="#08a4a0"/><stop offset="0.026" stop-color="#08a4a0"/><stop offset="0.0487" stop-color="#08a4a0"/><stop offset="0.059" stop-color="#08a4a0"/><stop offset="0.0811" stop-color="#08a4a0"/><stop offset="0.0921" stop-color="#08a4a0"/><stop offset="0.1103" stop-color="#08a4a0"/><stop offset="0.1174" stop-color="#08a4a0"/><stop offset="0.1362" stop-color="#08a4a0"/><stop offset="0.146" stop-color="#08a4a0"/><stop offset="0.1622" stop-color="#08a4a0"/><stop offset="0.1882" stop-color="#08a4a0"/><stop offset="0.1946" stop-color="#08a4a0"/><stop offset="0.2141" stop-color="#08a4a0"/><stop offset="0.2401" stop-color="#08a4a0"/><stop offset="0.266" stop-color="#08a4a0"/><stop offset="0.292" stop-color="#08a4a0"/><stop offset="0.3179" stop-color="#08a4a0"/><stop offset="0.3439" stop-color="#08a4a0"/><stop offset="0.3698" stop-color="#08a4a0"/><stop offset="0.3893" stop-color="#08a4a0"/><stop offset="0.3958" stop-color="#08a4a0"/><stop offset="0.4217" stop-color="#08a4a0"/><stop offset="0.4379" stop-color="#08a4a0"/><stop offset="0.4477" stop-color="#08a4a0"/><stop offset="0.4736" stop-color="#08a4a0"/><stop offset="0.4866" stop-color="#08a4a0"/><stop offset="0.4996" stop-color="#08a29f"/><stop offset="0.5255" stop-color="#07a09c"/><stop offset="0.5515" stop-color="#069e9a"/><stop offset="0.5774" stop-color="#069b98"/><stop offset="0.5839" stop-color="#069a97"/><stop offset="0.6034" stop-color="#069b98"/><stop offset="0.6293" stop-color="#069b98"/><stop offset="0.6553" stop-color="#069b98"/><stop offset="0.6812" stop-color="#069b98"/><stop offset="0.7072" stop-color="#069b98"/><stop offset="0.7331" stop-color="#069a97"/><stop offset="0.7591" stop-color="#059996"/><stop offset="0.7786" stop-color="#059896"/><stop offset="0.7851" stop-color="#059896"/><stop offset="0.811" stop-color="#059996"/><stop offset="0.837" stop-color="#059996"/><stop offset="0.8499" stop-color="#059996"/><stop offset="0.8629" stop-color="#069c99"/><stop offset="0.8889" stop-color="#11bbb9"/><stop offset="0.9148" stop-color="#14c0bf"/><stop offset="0.9207" stop-color="#14c2c1"/><stop offset="0.9408" stop-color="#16c5c3"/><stop offset="0.9609" stop-color="#17c8c6"/><stop offset="0.9667" stop-color="#18c9c7"/><stop offset="0.9862" stop-color="#19cbca"/><stop offset="1" stop-color="#15c3c2"/></linearGradient>
<linearGradient id="g5" gradientUnits="userSpaceOnUse" x1="250" x2="1791.3"><stop offset="0" stop-color="#27ece8"/><stop offset="0.0039" stop-color="#25ddd8"/><stop offset="0.0078" stop-color="#1ec8c5"/><stop offset="0.0117" stop-color="#13b7b3"/><stop offset="0.0162" stop-color="#08a4a0"/><stop offset="0.0247" stop-color="#08a4a0"/><stop offset="0.026" stop-color="#08a4a0"/><stop offset="0.0487" stop-color="#08a4a0"/><stop offset="0.059" stop-color="#08a4a0"/><stop offset="0.0811" stop-color="#08a4a0"/><stop offset="0.0921" stop-color="#08a4a0"/><stop offset="0.1103" stop-color="#08a4a0"/><stop offset="0.1174" stop-color="#08a4a0"/><stop offset="0.1362" stop-color="#08a4a0"/><stop offset="0.146" stop-color="#08a4a0"/><stop offset="0.1622" stop-color="#08a4a0"/><stop offset="0.1882" stop-color="#08a4a0"/><stop offset="0.1946" stop-color="#08a4a0"/><stop offset="0.2141" stop-color="#08a4a0"/><stop offset="0.2401" stop-color="#08a4a0"/><stop offset="0.266" stop-color="#08a4a0"/><stop offset="0.292" stop-color="#08a4a0"/><stop offset="0.3179" stop-color="#08a4a0"/><stop offset="0.3439" stop-color="#08a4a0"/><stop offset="0.3698" stop-color="#08a4a0"/><stop offset="0.3893" stop-color="#08a4a0"/><stop offset="0.3958" stop-color="#08a4a0"/><stop offset="0.4217" stop-color="#08a4a0"/><stop offset="0.4379" stop-color="#08a4a0"/><stop offset="0.4477" stop-color="#08a4a0"/><stop offset="0.4736" stop-color="#08a4a0"/><stop offset="0.4866" stop-color="#08a4a0"/><stop offset="0.4996" stop-color="#08a39f"/><stop offset="0.5255" stop-color="#07a09d"/><stop offset="0.5515" stop-color="#079e9b"/><stop offset="0.5774" stop-color="#069c99"/><stop offset="0.5839" stop-color="#069b98"/><stop offset="0.6034" stop-color="#069b98"/><stop offset="0.6293" stop-color="#069c99"/><stop offset="0.6553" stop-color="#069c99"/><stop offset="0.6812" stop-color="#069c99"/><stop offset="0.7072" stop-color="#069c99"/><stop offset="0.7331" stop-color="#069b98"/><stop offset="0.7591" stop-color="#059996"/><stop offset="0.7786" stop-color="#059896"/><stop offset="0.7851" stop-color="#059896"/><stop offset="0.811" stop-color="#059996"/><stop offset="0.837" stop-color="#059996"/><stop offset="0.8499" stop-color="#059996"/><stop offset="0.8629" stop-color="#09a3a0"/><stop offset="0.8889" stop-color="#11bbba"/><stop offset="0.9148" stop-color="#14c3c2"/><stop offset="0.9207" stop-color="#15c4c3"/><stop offset="0.9408" stop-color="#16c7c5"/><stop offset="0.9609" stop-color="#18cac8"/><stop offset="0.9667" stop-color="#18cbc9"/><stop offset="0.9862" stop-color="#19ccca"/><stop offset="1" stop-color="#15c3c2"/></linearGradient>
<linearGradient id="g6" gradientUnits="userSpaceOnUse" x1="250" x2="1791.3"><stop offset="0" stop-color="#27ece8"/><stop offset="0.0039" stop-color="#25ddd9"/><stop offset="0.0078" stop-color="#20ccc8"/><stop offset="0.0117" stop-color="#14b9b5"/><stop offset="0.0162" stop-color="#09a5a1"/><stop offset="0.0247" stop-color="#08a4a0"/><stop offset="0.026" stop-color="#08a4a0"/><stop offset="0.0487" stop-color="#08a4a0"/><stop offset="0.059" stop-color="#08a4a0"/><stop offset="0.0811" stop-color="#08a49f"/><stop offset="0.0921" stop-color="#08a49f"/><stop offset="0.1103" stop-color="#08a4a0"/><stop offset="0.1174" stop-color="#08a4a0"/><stop offset="0.1362" stop-color="#08a4a0"/><stop offset="0.146" stop-color="#08a4a0"/><stop offset="0.1622" stop-color="#08a4a0"/><stop offset="0.1882" stop-color="#08a4a0"/><stop offset="0.1946" stop-color="#08a4a0"/><stop offset="0.2141" stop-color="#08a4a0"/><stop offset="0.2401" stop-color="#08a4a0"/><stop offset="0.266" stop-color="#08a4a0"/><stop offset="0.292" stop-color="#08a4a0"/><stop offset="0.3179" stop-color="#08a4a0"/><stop offset="0.3439" stop-color="#08a4a0"/><stop offset="0.3698" stop-color="#08a4a0"/><stop offset="0.3893" stop-color="#08a4a0"/><stop offset="0.3958" stop-color="#08a4a0"/><stop offset="0.4217" stop-color="#08a4a0"/><stop offset="0.4379" stop-color="#08a4a0"/><stop offset="0.4477" stop-color="#08a4a0"/><stop offset="0.4736" stop-color="#08a4a0"/><stop offset="0.4866" stop-color="#08a4a0"/><stop offset="0.4996" stop-color="#08a39f"/><stop offset="0.5255" stop-color="#07a19d"/><stop offset="0.5515" stop-color="#079f9b"/><stop offset="0.5774" stop-color="#069c99"/><stop offset="0.5839" stop-color="#069c99"/><stop offset="0.6034" stop-color="#069c99"/><stop offset="0.6293" stop-color="#069d9a"/><stop offset="0.6553" stop-color="#079d9a"/><stop offset="0.6812" stop-color="#079d9a"/><stop offset="0.7072" stop-color="#069c99"/><stop offset="0.7331" stop-color="#069b98"/><stop offset="0.7591" stop-color="#059a97"/><stop offset="0.7786" stop-color="#059896"/><stop offset="0.7851" stop-color="#059896"/><stop offset="0.811" stop-color="#059996"/><stop offset="0.837" stop-color="#059996"/><stop offset="0.8499" stop-color="#09a4a1"/><stop offset="0.8629" stop-color="#10b8b5"/><stop offset="0.8889" stop-color="#12bdbc"/><stop offset="0.9148" stop-color="#15c4c3"/><stop offset="0.9207" stop-color="#15c5c4"/><stop offset="0.9408" stop-color="#16c7c6"/><stop offset="0.9609" stop-color="#18cbc8"/><stop offset="0.9667" stop-color="#18ccc9"/><stop offset="0.9862" stop-color="#19cdcb"/><stop offset="1" stop-color="#15c3c2"/></linearGradient>
<linearGradient id="g7" gradientUnits="userSpaceOnUse" x1="250" x2="1791.3"><stop offset="0" stop-color="#27ece8"/><stop offset="0.0039" stop-color="#26e1dc"/><stop offset="0.0078" stop-color="#22d3ce"/><stop offset="0.0117" stop-color="#16beba"/><stop offset="0.0162" stop-color="#0aa7a4"/><stop offset="0.0247" stop-color="#08a4a0"/><stop offset="0.026" stop-color="#08a4a0"/><stop offset="0.0487" stop-color="#08a4a0"/><stop offset="0.059" stop-color="#08a4a0"/><stop offset="0.0811" stop-color="#08a4a0"/><stop offset="0.0921" stop-color="#08a4a0"/><stop offset="0.1103" stop-color="#08a4a0"/><stop offset="0.1174" stop-color="#08a49f"/><stop offset="0.1362" stop-color="#08a4a0"/><stop offset="0.146" stop-color="#08a4a0"/><stop offset="0.1622" stop-color="#08a4a0"/><stop offset="0.1882" stop-color="#08a4a0"/><stop offset="0.1946" stop-color="#08a4a0"/><stop offset="0.2141" stop-color="#08a4a0"/><stop offset="0.2401" stop-color="#08a4a0"/><stop offset="0.266" stop-color="#08a4a0"/><stop offset="0.292" stop-color="#08a4a0"/><stop offset="0.3179" stop-color="#08a4a0"/><stop offset="0.3439" stop-color="#08a4a0"/><stop offset="0.3698" stop-color="#08a4a0"/><stop offset="0.3893" stop-color="#08a4a0"/><stop offset="0.3958" stop-color="#08a4a0"/><stop offset="0.4217" stop-color="#08a4a0"/><stop offset="0.4379" stop-color="#08a4a0"/><stop offset="0.4477" stop-color="#08a4a0"/><stop offset="0.4736" stop-color="#08a4a0"/><stop offset="0.4866" stop-color="#08a4a0"/><stop offset="0.4996" stop-color="#08a39f"/><stop offset="0.5255" stop-color="#07a19e"/><stop offset="0.5515" stop-color="#079f9c"/><stop offset="0.5774" stop-color="#079d9a"/><stop offset="0.5839" stop-color="#069d9a"/><stop offset="0.6034" stop-color="#079d9a"/><stop offset="0.6293" stop-color="#079d9a"/><stop offset="0.6553" stop-color="#079e9b"/><stop offset="0.6812" stop-color="#079e9b"/><stop offset="0.7072" stop-color="#079d9a"/><stop offset="0.7331" stop-color="#069c99"/><stop offset="0.7591" stop-color="#069a97"/><stop offset="0.7786" stop-color="#059896"/><stop offset="0.7851" stop-color="#059896"/><stop offset="0.811" stop-color="#059996"/><stop offset="0.837" stop-color="#0eb3b0"/><stop offset="0.8499" stop-color="#0fb7b4"/><stop offset="0.8629" stop-color="#10b9b6"/><stop offset="0.8889" stop-color="#13bfbe"/><stop offset="0.9148" stop-color="#15c4c3"/><stop offset="0.9207" stop-color="#15c5c4"/><stop offset="0.9408" stop-color="#17c8c7"/><stop offset="0.9609" stop-color="#19ccca"/><stop offset="0.9667" stop-color="#19cdca"/><stop offset="0.9862" stop-color="#19cdcb"/><stop offset="1" stop-color="#15c3c2"/></linearGradient>
<linearGradient id="g8" gradientUnits="userSpaceOnUse" x1="250" x2="1791.3"><stop offset="0" stop-color="#27ece8"/><stop offset="0.0039" stop-color="#26e2dd"/><stop offset="0.0078" stop-color="#24dbd6"/><stop offset="0.0117" stop-color="#18c2be"/><stop offset="0.0162" stop-color="#0ca9a6"/><stop offset="0.0247" stop-color="#08a4a0"/><stop offset="0.026" stop-color="#08a4a0"/><stop offset="0.0487" stop-color="#08a4a0"/><stop offset="0.059" stop-color="#08a4a0"/><stop offset="0.0811" stop-color="#08a4a0"/><stop offset="0.0921" stop-color="#08a4a0"/><stop offset="0.1103" stop-color="#08a4a0"/><stop offset="0.1174" stop-color="#08a4a0"/><stop offset="0.1362" stop-color="#08a4a0"/><stop offset="0.146" stop-color="#08a4a0"/><stop offset="0.1622" stop-color="#08a4a0"/><stop offset="0.1882" stop-color="#08a4a0"/><stop offset="0.1946" stop-color="#08a4a0"/><stop offset="0.2141" stop-color="#08a4a0"/><stop offset="0.2401" stop-color="#08a4a0"/><stop offset="0.266" stop-color="#08a4a0"/><stop offset="0.292" stop-color="#08a4a0"/><stop offset="0.3179" stop-color="#08a4a0"/><stop offset="0.3439" stop-color="#08a4a0"/><stop offset="0.3698" stop-color="#08a4a0"/><stop offset="0.3893" stop-color="#08a4a0"/><stop offset="0.3958" stop-color="#08a4a0"/><stop offset="0.4217" stop-color="#08a4a0"/><stop offset="0.4379" stop-color="#08a4a0"/><stop offset="0.4477" stop-color="#08a4a0"/><stop offset="0.4736" stop-color="#08a4a0"/><stop offset="0.4866" stop-color="#08a4a0"/><stop offset="0.4996" stop-color="#08a39f"/><stop offset="0.5255" stop-color="#08a19e"/><stop offset="0.5515" stop-color="#07a09c"/><stop offset="0.5774" stop-color="#079e9b"/><stop offset="0.5839" stop-color="#079d9a"/><stop offset="0.6034" stop-color="#079e9b"/><stop offset="0.6293" stop-color="#079e9b"/><stop offset="0.6553" stop-color="#079f9c"/><stop offset="0.6812" stop-color="#089f9c"/><stop offset="0.7072" stop-color="#079e9b"/><stop offset="0.7331" stop-color="#069c99"/><stop offset="0.7591" stop-color="#069a97"/><stop offset="0.7786" stop-color="#059896"/><stop offset="0.7851" stop-color="#059896"/><stop offset="0.811" stop-color="#0caeab"/><stop offset="0.837" stop-color="#0fb6b3"/><stop offset="0.8499" stop-color="#0fb7b4"/><stop offset="0.8629" stop-color="#10bab8"/><stop offset="0.8889" stop-color="#13c1bf"/><stop offset="0.9148" stop-color="#15c5c4"/><stop offset="0.9207" stop-color="#16c6c5"/><stop offset="0.9408" stop-color="#18cac8"/><stop offset="0.9609" stop-color="#19cdcb"/><stop offset="0.9667" stop-color="#19cecb"/><stop offset="0.9862" stop-color="#19cdcb"/><stop offset="1" stop-color="#15c3c2"/></linearGradient>
<linearGradient id="g9" gradientUnits="userSpaceOnUse" x1="250" x2="1791.3"><stop offset="0" stop-color="#27ece8"/><stop offset="0.0039" stop-color="#27e5e0"/><stop offset="0.0078" stop-color="#25ddd8"/><stop offset="0.0117" stop-color="#19c5c2"/><stop offset="0.0162" stop-color="#0eaba8"/><stop offset="0.0247" stop-color="#08a4a0"/><stop offset="0.026" stop-color="#08a4a0"/><stop offset="0.0487" stop-color="#08a4a0"/><stop offset="0.059" stop-color="#08a4a0"/><stop offset="0.0811" stop-color="#08a4a0"/><stop offset="0.0921" stop-color="#08a4a0"/><stop offset="0.1103" stop-color="#08a4a0"/><stop offset="0.1174" stop-color="#08a3a0"/><stop offset="0.1362" stop-color="#08a4a0"/><stop offset="0.146" stop-color="#08a4a0"/><stop offset="0.1622" stop-color="#08a4a0"/><stop offset="0.1882" stop-color="#08a4a0"/><stop offset="0.1946" stop-color="#08a4a0"/><stop offset="0.2141" stop-color="#08a4a0"/><stop offset="0.2401" stop-color="#08a4a0"/><stop offset="0.266" stop-color="#08a4a0"/><stop offset="0.292" stop-color="#08a4a0"/><stop offset="0.3179" stop-color="#08a4a0"/><stop offset="0.3439" stop-color="#08a4a0"/><stop offset="0.3698" stop-color="#08a4a0"/><stop offset="0.3893" stop-color="#08a4a0"/><stop offset="0.3958" stop-color="#08a4a0"/><stop offset="0.4217" stop-color="#08a4a0"/><stop offset="0.4379" stop-color="#08a4a0"/><stop offset="0.4477" stop-color="#08a4a0"/><stop offset="0.4736" stop-color="#08a4a0"/><stop offset="0.4866" stop-color="#08a49f"/><stop offset="0.4996" stop-color="#08a39f"/><stop offset="0.5255" stop-color="#08a19e"/><stop offset="0.5515" stop-color="#07a09d"/><stop offset="0.5774" stop-color="#079e9b"/><stop offset="0.5839" stop-color="#079e9b"/><stop offset="0.6034" stop-color="#079e9b"/><stop offset="0.6293" stop-color="#079f9c"/><stop offset="0.6553" stop-color="#089f9c"/><stop offset="0.6812" stop-color="#08a09d"/><stop offset="0.7072" stop-color="#079e9b"/><stop offset="0.7331" stop-color="#069c99"/><stop offset="0.7591" stop-color="#069a97"/><stop offset="0.7786" stop-color="#08a19e"/><stop offset="0.7851" stop-color="#0baaa7"/><stop offset="0.811" stop-color="#0eb3b0"/><stop offset="0.837" stop-color="#0fb7b4"/><stop offset="0.8499" stop-color="#10b8b6"/><stop offset="0.8629" stop-color="#11bcba"/><stop offset="0.8889" stop-color="#13c1c0"/><stop offset="0.9148" stop-color="#16c6c5"/><stop offset="0.9207" stop-color="#16c7c6"/><stop offset="0.9408" stop-color="#18cbc9"/><stop offset="0.9609" stop-color="#19cecb"/><stop offset="0.9667" stop-color="#1acfcc"/><stop offset="0.9862" stop-color="#19cdcb"/><stop offset="1" stop-color="#15c3c2"/></linearGradient>
<linearGradient id="g10" gradientUnits="userSpaceOnUse" x1="250" x2="1791.3"><stop offset="0" stop-color="#27ece8"/><stop offset="0.0039" stop-color="#28e7e2"/><stop offset="0.0078" stop-color="#26dfda"/><stop offset="0.0117" stop-color="#19c7c3"/><stop offset="0.0162" stop-color="#0eaca9"/><stop offset="0.0247" stop-color="#08a4a0"/><stop offset="0.026" stop-color="#08a4a0"/><stop offset="0.0487" stop-color="#08a4a0"/><stop offset="0.059" stop-color="#08a4a0"/><stop offset="0.0811" stop-color="#08a4a0"/><stop offset="0.0921" stop-color="#08a4a0"/><stop offset="0.1103" stop-color="#08a4a0"/><stop offset="0.1174" stop-color="#08a4a0"/><stop offset="0.1362" stop-color="#08a4a0"/><stop offset="0.146" stop-color="#08a4a0"/><stop offset="0.1622" stop-color="#08a4a0"/><stop offset="0.1882" stop-color="#08a4a0"/><stop offset="0.1946" stop-color="#08a4a0"/><stop offset="0.2141" stop-color="#08a4a0"/><stop offset="0.2401" stop-color="#08a4a0"/><stop offset="0.266" stop-color="#08a4a0"/><stop offset="0.292" stop-color="#08a4a0"/><stop offset="0.3179" stop-color="#08a4a0"/><stop offset="0.3439" stop-color="#08a4a0"/><stop offset="0.3698" stop-color="#08a4a0"/><stop offset="0.3893" stop-color="#08a4a0"/><stop offset="0.3958" stop-color="#08a4a0"/><stop offset="0.4217" stop-color="#08a4a0"/><stop offset="0.4379" stop-color="#08a4a0"/><stop offset="0.4477" stop-color="#08a4a0"/><stop offset="0.4736" stop-color="#08a4a0"/><stop offset="0.4866" stop-color="#08a4a0"/><stop offset="0.4996" stop-color="#08a39f"/><stop offset="0.5255" stop-color="#08a29e"/><stop offset="0.5515" stop-color="#07a09d"/><stop offset="0.5774" stop-color="#079f9c"/><stop offset="0.5839" stop-color="#079e9b"/><stop offset="0.6034" stop-color="#079f9c"/><stop offset="0.6293" stop-color="#079f9c"/><stop offset="0.6553" stop-color="#08a09d"/><stop offset="0.6812" stop-color="#08a09d"/><stop offset="0.7072" stop-color="#079e9b"/><stop offset="0.7331" stop-color="#08a19e"/><stop offset="0.7591" stop-color="#0cafac"/><stop offset="0.7786" stop-color="#0db1ae"/><stop offset="0.7851" stop-color="#0db1ae"/><stop offset="0.811" stop-color="#0eb4b1"/><stop offset="0.837" stop-color="#0fb8b6"/><stop offset="0.8499" stop-color="#10bab8"/><stop offset="0.8629" stop-color="#11bdbc"/><stop offset="0.8889" stop-color="#13c1c0"/><stop offset="0.9148" stop-color="#16c7c6"/><stop offset="0.9207" stop-color="#17c8c7"/><stop offset="0.9408" stop-color="#19ccca"/><stop offset="0.9609" stop-color="#1acfcd"/><stop offset="0.9667" stop-color="#1ad0cd"/><stop offset="0.9862" stop-color="#19cdcb"/><stop offset="1" stop-color="#15c3c2"/></linearGradient>
<linearGradient id="g11" gradientUnits="userSpaceOnUse" x1="250" x2="1791.3"><stop offset="0" stop-color="#27ece8"/><stop offset="0.0039" stop-color="#28e7e2"/><stop offset="0.0078" stop-color="#27e2dc"/><stop offset="0.0117" stop-color="#1acac6"/><stop offset="0.0162" stop-color="#0fafac"/><stop offset="0.0247" stop-color="#09a4a0"/><stop offset="0.026" stop-color="#08a4a0"/><stop offset="0.0487" stop-color="#08a4a0"/><stop offset="0.059" stop-color="#08a4a0"/><stop offset="0.0811" stop-color="#08a4a0"/><stop offset="0.0921" stop-color="#08a4a0"/><stop offset="0.1103" stop-color="#08a4a0"/><stop offset="0.1174" stop-color="#08a4a0"/><stop offset="0.1362" stop-color="#08a4a0"/><stop offset="0.146" stop-color="#08a4a0"/><stop offset="0.1622" stop-color="#08a4a0"/><stop offset="0.1882" stop-color="#08a4a0"/><stop offset="0.1946" stop-color="#08a4a0"/><stop offset="0.2141" stop-color="#08a4a0"/><stop offset="0.2401" stop-color="#08a4a0"/><stop offset="0.266" stop-color="#08a4a0"/><stop offset="0.292" stop-color="#08a4a0"/><stop offset="0.3179" stop-color="#08a4a0"/><stop offset="0.3439" stop-color="#08a4a0"/><stop offset="0.3698" stop-color="#08a4a0"/><stop offset="0.3893" stop-color="#08a4a0"/><stop offset="0.3958" stop-color="#08a4a0"/><stop offset="0.4217" stop-color="#08a4a0"/><stop offset="0.4379" stop-color="#08a4a0"/><stop offset="0.4477" stop-color="#08a4a0"/><stop offset="0.4736" stop-color="#08a4a0"/><stop offset="0.4866" stop-color="#08a4a0"/><stop offset="0.4996" stop-color="#08a39f"/><stop offset="0.5255" stop-color="#08a29f"/><stop offset="0.5515" stop-color="#07a19d"/><stop offset="0.5774" stop-color="#079f9c"/><stop offset="0.5839" stop-color="#079e9b"/><stop offset="0.6034" stop-color="#079f9c"/><stop offset="0.6293" stop-color="#079f9c"/><stop offset="0.6553" stop-color="#08a09d"/><stop offset="0.6812" stop-color="#08a19e"/><stop offset="0.7072" stop-color="#0baaa7"/><stop offset="0.7331" stop-color="#0db0ad"/><stop offset="0.7591" stop-color="#0db0ad"/><stop offset="0.7786" stop-color="#0db1ae"/><stop offset="0.7851" stop-color="#0db2af"/><stop offset="0.811" stop-color="#0fb5b3"/><stop offset="0.837" stop-color="#10bab8"/><stop offset="0.8499" stop-color="#11bbba"/><stop offset="0.8629" stop-color="#12bebd"/><stop offset="0.8889" stop-color="#14c2c1"/><stop offset="0.9148" stop-color="#17c8c7"/><stop offset="0.9207" stop-color="#17c9c8"/><stop offset="0.9408" stop-color="#19cdca"/><stop offset="0.9609" stop-color="#1bd1ce"/><stop offset="0.9667" stop-color="#1ad0ce"/><stop offset="0.9862" stop-color="#19cdcb"/><stop offset="1" stop-color="#15c3c2"/></linearGradient>
<linearGradient id="g12" gradientUnits="userSpaceOnUse" x1="250" x2="1791.3"><stop offset="0" stop-color="#27ece7"/><stop offset="0.0039" stop-color="#29e9e4"/><stop offset="0.0078" stop-color="#28e5e0"/><stop offset="0.0117" stop-color="#1ccec9"/><stop offset="0.0162" stop-color="#10b3af"/><stop offset="0.0247" stop-color="#09a5a1"/><stop offset="0.026" stop-color="#08a4a0"/><stop offset="0.0487" stop-color="#08a4a0"/><stop offset="0.059" stop-color="#08a4a0"/><stop offset="0.0811" stop-color="#08a4a0"/><stop offset="0.0921" stop-color="#08a49f"/><stop offset="0.1103" stop-color="#08a4a0"/><stop offset="0.1174" stop-color="#08a4a0"/><stop offset="0.1362" stop-color="#08a4a0"/><stop offset="0.146" stop-color="#08a4a0"/><stop offset="0.1622" stop-color="#08a4a0"/><stop offset="0.1882" stop-color="#08a4a0"/><stop offset="0.1946" stop-color="#08a4a0"/><stop offset="0.2141" stop-color="#08a4a0"/><stop offset="0.2401" stop-color="#08a4a0"/><stop offset="0.266" stop-color="#08a4a0"/><stop offset="0.292" stop-color="#08a4a0"/><stop offset="0.3179" stop-color="#08a4a0"/><stop offset="0.3439" stop-color="#08a4a0"/><stop offset="0.3698" stop-color="#08a4a0"/><stop offset="0.3893" stop-color="#08a4a0"/><stop offset="0.3958" stop-color="#08a4a0"/><stop offset="0.4217" stop-color="#08a4a0"/><stop offset="0.4379" stop-color="#08a4a0"/><stop offset="0.4477" stop-color="#08a4a0"/><stop offset="0.4736" stop-color="#08a4a0"/><stop offset="0.4866" stop-color="#08a4a0"/><stop offset="0.4996" stop-color="#08a3a0"/><stop offset="0.5255" stop-color="#08a3a0"/><stop offset="0.5515" stop-color="#08a3a0"/><stop offset="0.5774" stop-color="#08a29f"/><stop offset="0.5839" stop-color="#08a19e"/><stop offset="0.6034" stop-color="#08a4a1"/><stop offset="0.6293" stop-color="#0aa7a4"/><stop offset="0.6553" stop-color="#0baba8"/><stop offset="0.6812" stop-color="#0caeab"/><stop offset="0.7072" stop-color="#0cafac"/><stop offset="0.7331" stop-color="#0db0ad"/><stop offset="0.7591" stop-color="#0db1ae"/><stop offset="0.7786" stop-color="#0db2af"/><stop offset="0.7851" stop-color="#0eb3b0"/><stop offset="0.811" stop-color="#0fb7b5"/><stop offset="0.837" stop-color="#10bbb9"/><stop offset="0.8499" stop-color="#11bcbb"/><stop offset="0.8629" stop-color="#12bebd"/><stop offset="0.8889" stop-color="#14c4c3"/><stop offset="0.9148" stop-color="#17c9c8"/><stop offset="0.9207" stop-color="#18cac9"/><stop offset="0.9408" stop-color="#1acecc"/><stop offset="0.9609" stop-color="#1bd1ce"/><stop offset="0.9667" stop-color="#1bd1ce"/><stop offset="0.9862" stop-color="#19cdcb"/><stop offset="1" stop-color="#15c3c2"/></linearGradient>
<linearGradient id="g13" gradientUnits="userSpaceOnUse" x1="250" x2="1791.3"><stop offset="0" stop-color="#27ece8"/><stop offset="0.0039" stop-color="#29ebe5"/><stop offset="0.0078" stop-color="#2ae9e3"/><stop offset="0.0117" stop-color="#1dd2ce"/><stop offset="0.0162" stop-color="#12b8b4"/><stop offset="0.0247" stop-color="#09a5a1"/><stop offset="0.026" stop-color="#08a4a0"/><stop offset="0.0487" stop-color="#08a4a0"/><stop offset="0.059" stop-color="#08a4a0"/><stop offset="0.0811" stop-color="#08a4a0"/><stop offset="0.0921" stop-color="#08a39f"/><stop offset="0.1103" stop-color="#08a4a0"/><stop offset="0.1174" stop-color="#08a4a0"/><stop offset="0.1362" stop-color="#08a4a0"/><stop offset="0.146" stop-color="#08a4a0"/><stop offset="0.1622" stop-color="#08a4a0"/><stop offset="0.1882" stop-color="#08a4a0"/><stop offset="0.1946" stop-color="#08a4a0"/><stop offset="0.2141" stop-color="#08a4a0"/><stop offset="0.2401" stop-color="#08a4a0"/><stop offset="0.266" stop-color="#08a4a0"/><stop offset="0.292" stop-color="#08a4a0"/><stop offset="0.3179" stop-color="#08a4a0"/><stop offset="0.3439" stop-color="#08a4a0"/><stop offset="0.3698" stop-color="#08a4a0"/><stop offset="0.3893" stop-color="#08a4a0"/><stop offset="0.3958" stop-color="#08a4a0"/><stop offset="0.4217" stop-color="#08a4a0"/><stop offset="0.4379" stop-color="#08a4a0"/><stop offset="0.4477" stop-color="#08a3a0"/><stop offset="0.4736" stop-color="#08a4a0"/><stop offset="0.4866" stop-color="#08a4a0"/><stop offset="0.4996" stop-color="#08a4a0"/><stop offset="0.5255" stop-color="#08a4a1"/><stop offset="0.5515" stop-color="#09a5a2"/><stop offset="0.5774" stop-color="#09a6a3"/><stop offset="0.5839" stop-color="#09a7a4"/><stop offset="0.6034" stop-color="#0aa8a5"/><stop offset="0.6293" stop-color="#0aaaa7"/><stop offset="0.6553" stop-color="#0badaa"/><stop offset="0.6812" stop-color="#0cafac"/><stop offset="0.7072" stop-color="#0db0ad"/><stop offset="0.7331" stop-color="#0db1ae"/><stop offset="0.7591" stop-color="#0db3b0"/><stop offset="0.7786" stop-color="#0eb4b1"/><stop offset="0.7851" stop-color="#0eb5b2"/><stop offset="0.811" stop-color="#0fb9b6"/><stop offset="0.837" stop-color="#11bcba"/><stop offset="0.8499" stop-color="#11bdbc"/><stop offset="0.8629" stop-color="#12bfbe"/><stop offset="0.8889" stop-color="#15c5c4"/><stop offset="0.9148" stop-color="#17c9c8"/><stop offset="0.9207" stop-color="#18cbc9"/><stop offset="0.9408" stop-color="#1ad0cd"/><stop offset="0.9609" stop-color="#1bd2cf"/><stop offset="0.9667" stop-color="#1bd1cf"/><stop offset="0.9862" stop-color="#19cdcb"/><stop offset="1" stop-color="#15c3c2"/></linearGradient>
<linearGradient id="g14" gradientUnits="userSpaceOnUse" x1="250" x2="1791.3"><stop offset="0" stop-color="#27ece8"/><stop offset="0.0039" stop-color="#2aede8"/><stop offset="0.0078" stop-color="#2bede7"/><stop offset="0.0117" stop-color="#20d8d3"/><stop offset="0.0162" stop-color="#14bdba"/><stop offset="0.0247" stop-color="#0aa7a3"/><stop offset="0.026" stop-color="#09a5a1"/><stop offset="0.0487" stop-color="#08a4a0"/><stop offset="0.059" stop-color="#08a4a0"/><stop offset="0.0811" stop-color="#08a4a0"/><stop offset="0.0921" stop-color="#08a4a0"/><stop offset="0.1103" stop-color="#08a4a0"/><stop offset="0.1174" stop-color="#08a4a0"/><stop offset="0.1362" stop-color="#08a4a0"/><stop offset="0.146" stop-color="#08a4a0"/><stop offset="0.1622" stop-color="#08a4a0"/><stop offset="0.1882" stop-color="#08a4a0"/><stop offset="0.1946" stop-color="#08a4a0"/><stop offset="0.2141" stop-color="#08a4a0"/><stop offset="0.2401" stop-color="#08a4a0"/><stop offset="0.266" stop-color="#08a4a0"/><stop offset="0.292" stop-color="#08a4a0"/><stop offset="0.3179" stop-color="#08a4a0"/><stop offset="0.3439" stop-color="#08a4a0"/><stop offset="0.3698" stop-color="#08a4a0"/><stop offset="0.3893" stop-color="#08a4a0"/><stop offset="0.3958" stop-color="#08a4a0"/><stop offset="0.4217" stop-color="#08a4a0"/><stop offset="0.4379" stop-color="#08a4a0"/><stop offset="0.4477" stop-color="#08a4a0"/><stop offset="0.4736" stop-color="#08a4a0"/><stop offset="0.4866" stop-color="#08a4a0"/><stop offset="0.4996" stop-color="#08a4a0"/><stop offset="0.5255" stop-color="#08a5a1"/><stop offset="0.5515" stop-color="#09a6a2"/><stop offset="0.5774" stop-color="#09a7a4"/><stop offset="0.5839" stop-color="#09a7a4"/><stop offset="0.6034" stop-color="#0aa9a6"/><stop offset="0.6293" stop-color="#0baba8"/><stop offset="0.6553" stop-color="#0caeab"/><stop offset="0.6812" stop-color="#0db0ad"/><stop offset="0.7072" stop-color="#0db1ae"/><stop offset="0.7331" stop-color="#0db3b0"/><stop offset="0.7591" stop-color="#0eb4b1"/><stop offset="0.7786" stop-color="#0eb5b2"/><stop offset="0.7851" stop-color="#0eb6b3"/><stop offset="0.811" stop-color="#10bab8"/><stop offset="0.837" stop-color="#11bcba"/><stop offset="0.8499" stop-color="#11bdbc"/><stop offset="0.8629" stop-color="#13c0bf"/><stop offset="0.8889" stop-color="#15c6c5"/><stop offset="0.9148" stop-color="#18cbc9"/><stop offset="0.9207" stop-color="#19ccca"/><stop offset="0.9408" stop-color="#1bd1ce"/><stop offset="0.9609" stop-color="#1bd2cf"/><stop offset="0.9667" stop-color="#1bd1cf"/><stop offset="0.9862" stop-color="#18ccca"/><stop offset="1" stop-color="#15c3c2"/></linearGradient>
<linearGradient id="g15" gradientUnits="userSpaceOnUse" x1="250" x2="1791.3"><stop offset="0" stop-color="#27ece8"/><stop offset="0.0039" stop-color="#2befea"/><stop offset="0.0078" stop-color="#2df1eb"/><stop offset="0.0117" stop-color="#22ddd8"/><stop offset="0.0162" stop-color="#15c3c0"/><stop offset="0.0247" stop-color="#0baba7"/><stop offset="0.026" stop-color="#0aa8a4"/><stop offset="0.0487" stop-color="#08a4a0"/><stop offset="0.059" stop-color="#08a4a0"/><stop offset="0.0811" stop-color="#08a4a0"/><stop offset="0.0921" stop-color="#08a4a0"/><stop offset="0.1103" stop-color="#08a4a0"/><stop offset="0.1174" stop-color="#08a3a0"/><stop offset="0.1362" stop-color="#08a4a0"/><stop offset="0.146" stop-color="#08a4a0"/><stop offset="0.1622" stop-color="#08a4a0"/><stop offset="0.1882" stop-color="#08a4a0"/><stop offset="0.1946" stop-color="#08a4a0"/><stop offset="0.2141" stop-color="#08a4a0"/><stop offset="0.2401" stop-color="#08a4a0"/><stop offset="0.266" stop-color="#08a4a0"/><stop offset="0.292" stop-color="#08a4a0"/><stop offset="0.3179" stop-color="#08a4a0"/><stop offset="0.3439" stop-color="#08a4a0"/><stop offset="0.3698" stop-color="#08a4a0"/><stop offset="0.3893" stop-color="#08a4a0"/><stop offset="0.3958" stop-color="#08a4a0"/><stop offset="0.4217" stop-color="#08a4a0"/><stop offset="0.4379" stop-color="#08a4a0"/><stop offset="0.4477" stop-color="#08a4a0"/><stop offset="0.4736" stop-color="#08a4a0"/><stop offset="0.4866" stop-color="#08a4a0"/><stop offset="0.4996" stop-color="#08a4a0"/><stop offset="0.5255" stop-color="#09a5a1"/><stop offset="0.5515" stop-color="#09a6a3"/><stop offset="0.5774" stop-color="#0aa8a5"/><stop offset="0.5839" stop-color="#0aa9a6"/><stop offset="0.6034" stop-color="#0aaba8"/><stop offset="0.6293" stop-color="#0badaa"/><stop offset="0.6553" stop-color="#0cafac"/><stop offset="0.6812" stop-color="#0db2af"/><stop offset="0.7072" stop-color="#0eb3b0"/><stop offset="0.7331" stop-color="#0eb4b1"/><stop offset="0.7591" stop-color="#0eb6b3"/><stop offset="0.7786" stop-color="#0fb7b4"/><stop offset="0.7851" stop-color="#0fb8b5"/><stop offset="0.811" stop-color="#10bab8"/><stop offset="0.837" stop-color="#11bdbb"/><stop offset="0.8499" stop-color="#12bebd"/><stop offset="0.8629" stop-color="#13c2c1"/><stop offset="0.8889" stop-color="#15c6c5"/><stop offset="0.9148" stop-color="#18ccca"/><stop offset="0.9207" stop-color="#19cecb"/><stop offset="0.9408" stop-color="#1bd2ce"/><stop offset="0.9609" stop-color="#1bd2cf"/><stop offset="0.9667" stop-color="#1ad1ce"/><stop offset="0.9862" stop-color="#18ccca"/><stop offset="1" stop-color="#15c3c2"/></linearGradient>
<linearGradient id="g16" gradientUnits="userSpaceOnUse" x1="250" x2="1791.3"><stop offset="0" stop-color="#27ece8"/><stop offset="0.0039" stop-color="#2cf1eb"/><stop offset="0.0078" stop-color="#2ef3ed"/><stop offset="0.0117" stop-color="#23e1dc"/><stop offset="0.0162" stop-color="#17cac6"/><stop offset="0.0247" stop-color="#0dafab"/><stop offset="0.026" stop-color="#0baca8"/><stop offset="0.0487" stop-color="#08a4a0"/><stop offset="0.059" stop-color="#08a4a0"/><stop offset="0.0811" stop-color="#08a4a0"/><stop offset="0.0921" stop-color="#08a4a0"/><stop offset="0.1103" stop-color="#08a4a0"/><stop offset="0.1174" stop-color="#08a4a0"/><stop offset="0.1362" stop-color="#08a4a0"/><stop offset="0.146" stop-color="#08a4a0"/><stop offset="0.1622" stop-color="#08a4a0"/><stop offset="0.1882" stop-color="#08a4a0"/><stop offset="0.1946" stop-color="#08a4a0"/><stop offset="0.2141" stop-color="#08a4a0"/><stop offset="0.2401" stop-color="#08a4a0"/><stop offset="0.266" stop-color="#08a4a0"/><stop offset="0.292" stop-color="#08a4a0"/><stop offset="0.3179" stop-color="#08a4a0"/><stop offset="0.3439" stop-color="#08a4a0"/><stop offset="0.3698" stop-color="#08a4a0"/><stop offset="0.3893" stop-color="#08a4a0"/><stop offset="0.3958" stop-color="#08a4a0"/><stop offset="0.4217" stop-color="#08a4a0"/><stop offset="0.4379" stop-color="#08a4a0"/><stop offset="0.4477" stop-color="#08a4a0"/><stop offset="0.4736" stop-color="#08a4a0"/><stop offset="0.4866" stop-color="#08a4a0"/><stop offset="0.4996" stop-color="#08a4a0"/><stop offset="0.5255" stop-color="#09a6a2"/><stop offset="0.5515" stop-color="#09a8a4"/><stop offset="0.5774" stop-color="#0aaaa7"/><stop offset="0.5839" stop-color="#0aaaa8"/><stop offset="0.6034" stop-color="#0baca9"/><stop offset="0.6293" stop-color="#0cafac"/><stop offset="0.6553" stop-color="#0db1ae"/><stop offset="0.6812" stop-color="#0eb3b0"/><stop offset="0.7072" stop-color="#0eb5b2"/><stop offset="0.7331" stop-color="#0eb6b3"/><stop offset="0.7591" stop-color="#0fb7b4"/><stop offset="0.7786" stop-color="#0fb8b5"/><stop offset="0.7851" stop-color="#0fb8b6"/><stop offset="0.811" stop-color="#10bab8"/><stop offset="0.837" stop-color="#11bebd"/><stop offset="0.8499" stop-color="#12c0bf"/><stop offset="0.8629" stop-color="#14c3c2"/><stop offset="0.8889" stop-color="#16c7c6"/><stop offset="0.9148" stop-color="#19cecb"/><stop offset="0.9207" stop-color="#1acfcc"/><stop offset="0.9408" stop-color="#1bd3cf"/><stop offset="0.9609" stop-color="#1bd2cf"/><stop offset="0.9667" stop-color="#1ad1ce"/><stop offset="0.9862" stop-color="#18cbc9"/><stop offset="1" stop-color="#15c3c2"/></linearGradient>
<linearGradient id="g17" gradientUnits="userSpaceOnUse" x1="250" x2="1791.3"><stop offset="0" stop-color="#27ece8"/><stop offset="0.0039" stop-color="#2cf2ec"/><stop offset="0.0078" stop-color="#2ff5ef"/><stop offset="0.0117" stop-color="#25e5e0"/><stop offset="0.0162" stop-color="#19cfcc"/><stop offset="0.0247" stop-color="#0fb4b1"/><stop offset="0.026" stop-color="#0db1ad"/><stop offset="0.0487" stop-color="#08a4a0"/><stop offset="0.059" stop-color="#08a4a0"/><stop offset="0.0811" stop-color="#08a4a0"/><stop offset="0.0921" stop-color="#08a4a0"/><stop offset="0.1103" stop-color="#08a4a0"/><stop offset="0.1174" stop-color="#08a4a0"/><stop offset="0.1362" stop-color="#08a4a0"/><stop offset="0.146" stop-color="#08a4a0"/><stop offset="0.1622" stop-color="#08a4a0"/><stop offset="0.1882" stop-color="#08a4a0"/><stop offset="0.1946" stop-color="#08a4a0"/><stop offset="0.2141" stop-color="#08a4a0"/><stop offset="0.2401" stop-color="#08a4a0"/><stop offset="0.266" stop-color="#08a4a0"/><stop offset="0.292" stop-color="#08a4a0"/><stop offset="0.3179" stop-color="#08a4a0"/><stop offset="0.3439" stop-color="#08a4a0"/><stop offset="0.3698" stop-color="#08a4a0"/><stop offset="0.3893" stop-color="#08a4a0"/><stop offset="0.3958" stop-color="#08a4a0"/><stop offset="0.4217" stop-color="#08a4a0"/><stop offset="0.4379" stop-color="#08a4a0"/><stop offset="0.4477" stop-color="#08a4a0"/><stop offset="0.4736" stop-color="#08a4a0"/><stop offset="0.4866" stop-color="#08a4a0"/><stop offset="0.4996" stop-color="#08a4a0"/><stop offset="0.5255" stop-color="#09a6a3"/><stop offset="0.5515" stop-color="#0aa9a5"/><stop offset="0.5774" stop-color="#0baca9"/><stop offset="0.5839" stop-color="#0baca9"/><stop offset="0.6034" stop-color="#0caeab"/><stop offset="0.6293" stop-color="#0db0ad"/><stop offset="0.6553" stop-color="#0db2af"/><stop offset="0.6812" stop-color="#0eb4b1"/><stop offset="0.7072" stop-color="#0eb5b2"/><stop offset="0.7331" stop-color="#0fb7b4"/><stop offset="0.7591" stop-color="#0fb8b5"/><stop offset="0.7786" stop-color="#0fb8b5"/><stop offset="0.7851" stop-color="#0fb9b6"/><stop offset="0.811" stop-color="#10bbb9"/><stop offset="0.837" stop-color="#12bfbe"/><stop offset="0.8499" stop-color="#13c1c0"/><stop offset="0.8629" stop-color="#14c4c3"/><stop offset="0.8889" stop-color="#16c8c7"/><stop offset="0.9148" stop-color="#1acfcc"/><stop offset="0.9207" stop-color="#1ad1cd"/><stop offset="0.9408" stop-color="#1cd4d0"/><stop offset="0.9609" stop-color="#1bd2cf"/><stop offset="0.9667" stop-color="#1ad0cd"/><stop offset="0.9862" stop-color="#18cbc9"/><stop offset="1" stop-color="#15c3c2"/></linearGradient>
<linearGradient id="g18" gradientUnits="userSpaceOnUse" x1="250" x2="1791.3"><stop offset="0" stop-color="#27ede8"/><stop offset="0.0039" stop-color="#2cf2ec"/><stop offset="0.0078" stop-color="#2ff6ef"/><stop offset="0.0117" stop-color="#26e8e2"/><stop offset="0.0162" stop-color="#1bd4d0"/><stop offset="0.0247" stop-color="#11bab7"/><stop offset="0.026" stop-color="#0fb6b3"/><stop offset="0.0487" stop-color="#08a4a0"/><stop offset="0.059" stop-color="#08a4a0"/><stop offset="0.0811" stop-color="#08a4a0"/><stop offset="0.0921" stop-color="#08a4a0"/><stop offset="0.1103" stop-color="#08a4a0"/><stop offset="0.1174" stop-color="#08a4a0"/><stop offset="0.1362" stop-color="#08a4a0"/><stop offset="0.146" stop-color="#08a3a0"/><stop offset="0.1622" stop-color="#08a4a0"/><stop offset="0.1882" stop-color="#08a4a0"/><stop offset="0.1946" stop-color="#08a4a0"/><stop offset="0.2141" stop-color="#08a4a0"/><stop offset="0.2401" stop-color="#08a4a0"/><stop offset="0.266" stop-color="#08a4a0"/><stop offset="0.292" stop-color="#08a4a0"/><stop offset="0.3179" stop-color="#08a4a0"/><stop offset="0.3439" stop-color="#08a4a0"/><stop offset="0.3698" stop-color="#08a4a0"/><stop offset="0.3893" stop-color="#08a4a0"/><stop offset="0.3958" stop-color="#08a4a0"/><stop offset="0.4217" stop-color="#08a4a0"/><stop offset="0.4379" stop-color="#08a4a0"/><stop offset="0.4477" stop-color="#08a4a0"/><stop offset="0.4736" stop-color="#08a4a0"/><stop offset="0.4866" stop-color="#08a4a0"/><stop offset="0.4996" stop-color="#08a5a1"/><stop offset="0.5255" stop-color="#09a7a4"/><stop offset="0.5515" stop-color="#0aaaa7"/><stop offset="0.5774" stop-color="#0badaa"/><stop offset="0.5839" stop-color="#0caeab"/><stop offset="0.6034" stop-color="#0cafac"/><stop offset="0.6293" stop-color="#0db1ae"/><stop offset="0.6553" stop-color="#0db3b0"/><stop offset="0.6812" stop-color="#0eb5b2"/><stop offset="0.7072" stop-color="#0eb6b3"/><stop offset="0.7331" stop-color="#0fb7b4"/><stop offset="0.7591" stop-color="#0fb8b5"/><stop offset="0.7786" stop-color="#0fb9b6"/><stop offset="0.7851" stop-color="#0fb9b6"/><stop offset="0.811" stop-color="#11bcbb"/><stop offset="0.837" stop-color="#12c1c0"/><stop offset="0.8499" stop-color="#13c2c1"/><stop offset="0.8629" stop-color="#14c4c3"/><stop offset="0.8889" stop-color="#17cac8"/><stop offset="0.9148" stop-color="#1ad0cd"/><stop offset="0.9207" stop-color="#1bd1ce"/><stop offset="0.9408" stop-color="#1cd4d1"/><stop offset="0.9609" stop-color="#1bd1ce"/><stop offset="0.9667" stop-color="#1acfcd"/><stop offset="0.9862" stop-color="#18cac8"/><stop offset="1" stop-color="#15c3c2"/></linearGradient>
<linearGradient id="g19" gradientUnits="userSpaceOnUse" x1="250" x2="1791.3"><stop offset="0" stop-color="#27ece8"/><stop offset="0.0039" stop-color="#2cf2ed"/><stop offset="0.0078" stop-color="#30f6f0"/><stop offset="0.0117" stop-color="#27e9e3"/><stop offset="0.0162" stop-color="#1cd8d4"/><stop offset="0.0247" stop-color="#13c0bd"/><stop offset="0.026" stop-color="#11bcb9"/><stop offset="0.0487" stop-color="#08a5a1"/><stop offset="0.059" stop-color="#08a4a0"/><stop offset="0.0811" stop-color="#08a4a0"/><stop offset="0.0921" stop-color="#08a4a0"/><stop offset="0.1103" stop-color="#08a4a0"/><stop offset="0.1174" stop-color="#08a4a0"/><stop offset="0.1362" stop-color="#08a4a0"/><stop offset="0.146" stop-color="#08a4a0"/><stop offset="0.1622" stop-color="#08a4a0"/><stop offset="0.1882" stop-color="#08a4a0"/><stop offset="0.1946" stop-color="#08a4a0"/><stop offset="0.2141" stop-color="#08a4a0"/><stop offset="0.2401" stop-color="#08a4a0"/><stop offset="0.266" stop-color="#08a4a0"/><stop offset="0.292" stop-color="#08a4a0"/><stop offset="0.3179" stop-color="#08a4a0"/><stop offset="0.3439" stop-color="#08a4a0"/><stop offset="0.3698" stop-color="#08a4a0"/><stop offset="0.3893" stop-color="#08a4a0"/><stop offset="0.3958" stop-color="#08a4a0"/><stop offset="0.4217" stop-color="#08a4a0"/><stop offset="0.4379" stop-color="#08a4a0"/><stop offset="0.4477" stop-color="#08a4a0"/><stop offset="0.4736" stop-color="#08a4a0"/><stop offset="0.4866" stop-color="#08a4a0"/><stop offset="0.4996" stop-color="#08a5a1"/><stop offset="0.5255" stop-color="#0aa8a4"/><stop offset="0.5515" stop-color="#0baba7"/><stop offset="0.5774" stop-color="#0caeab"/><stop offset="0.5839" stop-color="#0caeab"/><stop offset="0.6034" stop-color="#0cb0ad"/><stop offset="0.6293" stop-color="#0db1ae"/><stop offset="0.6553" stop-color="#0eb3b0"/><stop offset="0.6812" stop-color="#0eb5b3"/><stop offset="0.7072" stop-color="#0fb6b4"/><stop offset="0.7331" stop-color="#0fb7b5"/><stop offset="0.7591" stop-color="#0fb8b6"/><stop offset="0.7786" stop-color="#0fb9b6"/><stop offset="0.7851" stop-color="#10bab7"/><stop offset="0.811" stop-color="#11bebc"/><stop offset="0.837" stop-color="#13c2c1"/><stop offset="0.8499" stop-color="#13c3c2"/><stop offset="0.8629" stop-color="#14c5c4"/><stop offset="0.8889" stop-color="#17ccca"/><stop offset="0.9148" stop-color="#1bd1ce"/><stop offset="0.9207" stop-color="#1bd3cf"/><stop offset="0.9408" stop-color="#1cd4d1"/><stop offset="0.9609" stop-color="#1ad1ce"/><stop offset="0.9667" stop-color="#1acfcc"/><stop offset="0.9862" stop-color="#18cac8"/><stop offset="1" stop-color="#15c3c2"/></linearGradient>
<linearGradient id="g20" gradientUnits="userSpaceOnUse" x1="250" x2="1791.3"><stop offset="0" stop-color="#27ece7"/><stop offset="0.0039" stop-color="#2cf3ed"/><stop offset="0.0078" stop-color="#30f7f0"/><stop offset="0.0117" stop-color="#27e9e4"/><stop offset="0.0162" stop-color="#1ddad6"/><stop offset="0.0247" stop-color="#15c6c3"/><stop offset="0.026" stop-color="#14c2bf"/><stop offset="0.0487" stop-color="#09a7a3"/><stop offset="0.059" stop-color="#08a4a0"/><stop offset="0.0811" stop-color="#08a4a0"/><stop offset="0.0921" stop-color="#08a4a0"/><stop offset="0.1103" stop-color="#08a4a0"/><stop offset="0.1174" stop-color="#08a4a0"/><stop offset="0.1362" stop-color="#08a4a0"/><stop offset="0.146" stop-color="#08a4a0"/><stop offset="0.1622" stop-color="#08a4a0"/><stop offset="0.1882" stop-color="#08a4a0"/><stop offset="0.1946" stop-color="#08a4a0"/><stop offset="0.2141" stop-color="#08a4a0"/><stop offset="0.2401" stop-color="#08a4a0"/><stop offset="0.266" stop-color="#08a4a0"/><stop offset="0.292" stop-color="#08a4a0"/><stop offset="0.3179" stop-color="#08a4a0"/><stop offset="0.3439" stop-color="#08a4a0"/><stop offset="0.3698" stop-color="#08a4a0"/><stop offset="0.3893" stop-color="#08a4a0"/><stop offset="0.3958" stop-color="#08a4a0"/><stop offset="0.4217" stop-color="#08a4a0"/><stop offset="0.4379" stop-color="#08a4a0"/><stop offset="0.4477" stop-color="#08a4a0"/><stop offset="0.4736" stop-color="#08a4a0"/><stop offset="0.4866" stop-color="#08a4a0"/><stop offset="0.4996" stop-color="#09a5a1"/><stop offset="0.5255" stop-color="#0aa8a4"/><stop offset="0.5515" stop-color="#0baba8"/><stop offset="0.5774" stop-color="#0caeab"/><stop offset="0.5839" stop-color="#0cafac"/><stop offset="0.6034" stop-color="#0db0ad"/><stop offset="0.6293" stop-color="#0db2af"/><stop offset="0.6553" stop-color="#0eb4b2"/><stop offset="0.6812" stop-color="#0fb7b4"/><stop offset="0.7072" stop-color="#0fb8b5"/><stop offset="0.7331" stop-color="#0fb8b6"/><stop offset="0.7591" stop-color="#0fb9b7"/><stop offset="0.7786" stop-color="#10bab8"/><stop offset="0.7851" stop-color="#10bbb9"/><stop offset="0.811" stop-color="#12bfbe"/><stop offset="0.837" stop-color="#13c2c1"/><stop offset="0.8499" stop-color="#13c3c2"/><stop offset="0.8629" stop-color="#15c6c5"/><stop offset="0.8889" stop-color="#18cecb"/><stop offset="0.9148" stop-color="#1bd3cf"/><stop offset="0.9207" stop-color="#1cd4d1"/><stop offset="0.9408" stop-color="#1cd4d1"/><stop offset="0.9609" stop-color="#1ad0cd"/><stop offset="0.9667" stop-color="#19cecb"/><stop offset="0.9862" stop-color="#17cac8"/><stop offset="1" stop-color="#15c3c2"/></linearGradient>
<linearGradient id="g21" gradientUnits="userSpaceOnUse" x1="250" x2="1791.3"><stop offset="0" stop-color="#27ece8"/><stop offset="0.0039" stop-color="#2df3ed"/><stop offset="0.0078" stop-color="#31f7f1"/><stop offset="0.0117" stop-color="#28eae5"/><stop offset="0.0162" stop-color="#1edbd7"/><stop offset="0.0247" stop-color="#17cbc8"/><stop offset="0.026" stop-color="#16c7c4"/><stop offset="0.0487" stop-color="#0aaaa6"/><stop offset="0.059" stop-color="#08a4a0"/><stop offset="0.0811" stop-color="#08a4a0"/><stop offset="0.0921" stop-color="#08a4a0"/><stop offset="0.1103" stop-color="#08a4a0"/><stop offset="0.1174" stop-color="#08a4a0"/><stop offset="0.1362" stop-color="#08a4a0"/><stop offset="0.146" stop-color="#08a4a0"/><stop offset="0.1622" stop-color="#08a4a0"/><stop offset="0.1882" stop-color="#08a4a0"/><stop offset="0.1946" stop-color="#08a4a0"/><stop offset="0.2141" stop-color="#08a4a0"/><stop offset="0.2401" stop-color="#08a4a0"/><stop offset="0.266" stop-color="#08a4a0"/><stop offset="0.292" stop-color="#08a4a0"/><stop offset="0.3179" stop-color="#08a4a0"/><stop offset="0.3439" stop-color="#08a4a0"/><stop offset="0.3698" stop-color="#08a4a0"/><stop offset="0.3893" stop-color="#08a4a0"/><stop offset="0.3958" stop-color="#08a4a0"/><stop offset="0.4217" stop-color="#08a4a0"/><stop offset="0.4379" stop-color="#08a4a0"/><stop offset="0.4477" stop-color="#08a4a0"/><stop offset="0.4736" stop-color="#08a4a0"/><stop offset="0.4866" stop-color="#08a4a0"/><stop offset="0.4996" stop-color="#09a5a1"/><stop offset="0.5255" stop-color="#0aa8a5"/><stop offset="0.5515" stop-color="#0baba8"/><stop offset="0.5774" stop-color="#0cafac"/><stop offset="0.5839" stop-color="#0cb0ad"/><stop offset="0.6034" stop-color="#0db1ae"/><stop offset="0.6293" stop-color="#0eb4b1"/><stop offset="0.6553" stop-color="#0fb6b4"/><stop offset="0.6812" stop-color="#0fb8b7"/><stop offset="0.7072" stop-color="#0fb9b7"/><stop offset="0.7331" stop-color="#10bab8"/><stop offset="0.7591" stop-color="#10bbb9"/><stop offset="0.7786" stop-color="#10bbb9"/><stop offset="0.7851" stop-color="#10bcbb"/><stop offset="0.811" stop-color="#12c0bf"/><stop offset="0.837" stop-color="#13c3c1"/><stop offset="0.8499" stop-color="#14c5c4"/><stop offset="0.8629" stop-color="#15c8c7"/><stop offset="0.8889" stop-color="#19cfcc"/><stop offset="0.9148" stop-color="#1cd4d1"/><stop offset="0.9207" stop-color="#1dd5d2"/><stop offset="0.9408" stop-color="#1cd4d1"/><stop offset="0.9609" stop-color="#1acfcc"/><stop offset="0.9667" stop-color="#19cdcb"/><stop offset="0.9862" stop-color="#17c9c7"/><stop offset="1" stop-color="#15c3c2"/></linearGradient>
<linearGradient id="g22" gradientUnits="userSpaceOnUse" x1="250" x2="1791.3"><stop offset="0" stop-color="#27ece8"/><stop offset="0.0039" stop-color="#2df3ed"/><stop offset="0.0078" stop-color="#31f8f1"/><stop offset="0.0117" stop-color="#29ece6"/><stop offset="0.0162" stop-color="#1fdcd8"/><stop offset="0.0247" stop-color="#19cfcc"/><stop offset="0.026" stop-color="#18ccc9"/><stop offset="0.0487" stop-color="#0caeaa"/><stop offset="0.059" stop-color="#09a6a2"/><stop offset="0.0811" stop-color="#08a4a0"/><stop offset="0.0921" stop-color="#08a4a0"/><stop offset="0.1103" stop-color="#08a4a0"/><stop offset="0.1174" stop-color="#08a4a0"/><stop offset="0.1362" stop-color="#08a4a0"/><stop offset="0.146" stop-color="#08a4a0"/><stop offset="0.1622" stop-color="#08a4a0"/><stop offset="0.1882" stop-color="#08a4a0"/><stop offset="0.1946" stop-color="#08a4a0"/><stop offset="0.2141" stop-color="#08a4a0"/><stop offset="0.2401" stop-color="#08a4a0"/><stop offset="0.266" stop-color="#08a4a0"/><stop offset="0.292" stop-color="#08a4a0"/><stop offset="0.3179" stop-color="#08a4a0"/><stop offset="0.3439" stop-color="#08a4a0"/><stop offset="0.3698" stop-color="#08a4a0"/><stop offset="0.3893" stop-color="#08a4a0"/><stop offset="0.3958" stop-color="#08a4a0"/><stop offset="0.4217" stop-color="#08a4a0"/><stop offset="0.4379" stop-color="#08a4a0"/><stop offset="0.4477" stop-color="#08a4a0"/><stop offset="0.4736" stop-color="#08a4a0"/><stop offset="0.4866" stop-color="#08a4a1"/><stop offset="0.4996" stop-color="#09a6a2"/><stop offset="0.5255" stop-color="#0aa9a6"/><stop offset="0.5515" stop-color="#0badaa"/><stop offset="0.5774" stop-color="#0db0ad"/><stop offset="0.5839" stop-color="#0db1ae"/><stop offset="0.6034" stop-color="#0eb3b0"/><stop offset="0.6293" stop-color="#0eb5b3"/><stop offset="0.6553" stop-color="#0fb8b6"/><stop offset="0.6812" stop-color="#10bab8"/><stop offset="0.7072" stop-color="#10bab9"/><stop offset="0.7331" stop-color="#10bbba"/><stop offset="0.7591" stop-color="#10bcba"/><stop offset="0.7786" stop-color="#10bdbb"/><stop offset="0.7851" stop-color="#11bebc"/><stop offset="0.811" stop-color="#12c0bf"/><stop offset="0.837" stop-color="#13c4c3"/><stop offset="0.8499" stop-color="#14c6c5"/><stop offset="0.8629" stop-color="#16cac9"/><stop offset="0.8889" stop-color="#19d0cd"/><stop offset="0.9148" stop-color="#1dd6d2"/><stop offset="0.9207" stop-color="#1dd6d3"/><stop offset="0.9408" stop-color="#1bd3d0"/><stop offset="0.9609" stop-color="#1acecc"/><stop offset="0.9667" stop-color="#19ccca"/><stop offset="0.9862" stop-color="#17c9c7"/><stop offset="1" stop-color="#15c3c2"/></linearGradient>
<linearGradient id="g23" gradientUnits="userSpaceOnUse" x1="250" x2="1791.3"><stop offset="0" stop-color="#27ece8"/><stop offset="0.0039" stop-color="#2df4ee"/><stop offset="0.0078" stop-color="#31f9f2"/><stop offset="0.0117" stop-color="#2aede8"/><stop offset="0.0162" stop-color="#20deda"/><stop offset="0.0247" stop-color="#1ad2cf"/><stop offset="0.026" stop-color="#19d0cd"/><stop offset="0.0487" stop-color="#0db2af"/><stop offset="0.059" stop-color="#0aa8a5"/><stop offset="0.0811" stop-color="#08a5a1"/><stop offset="0.0921" stop-color="#08a4a0"/><stop offset="0.1103" stop-color="#08a4a0"/><stop offset="0.1174" stop-color="#08a4a0"/><stop offset="0.1362" stop-color="#08a4a0"/><stop offset="0.146" stop-color="#08a4a0"/><stop offset="0.1622" stop-color="#08a4a0"/><stop offset="0.1882" stop-color="#08a4a0"/><stop offset="0.1946" stop-color="#08a4a0"/><stop offset="0.2141" stop-color="#08a4a0"/><stop offset="0.2401" stop-color="#08a4a0"/><stop offset="0.266" stop-color="#08a4a0"/><stop offset="0.292" stop-color="#08a4a0"/><stop offset="0.3179" stop-color="#08a4a0"/><stop offset="0.3439" stop-color="#08a4a0"/><stop offset="0.3698" stop-color="#08a4a0"/><stop offset="0.3893" stop-color="#08a4a0"/><stop offset="0.3958" stop-color="#08a4a0"/><stop offset="0.4217" stop-color="#08a4a0"/><stop offset="0.4379" stop-color="#08a4a0"/><stop offset="0.4477" stop-color="#08a4a0"/><stop offset="0.4736" stop-color="#08a4a0"/><stop offset="0.4866" stop-color="#09a6a2"/><stop offset="0.4996" stop-color="#09a8a4"/><stop offset="0.5255" stop-color="#0baba8"/><stop offset="0.5515" stop-color="#0caeab"/><stop offset="0.5774" stop-color="#0db2af"/><stop offset="0.5839" stop-color="#0eb3b0"/><stop offset="0.6034" stop-color="#0eb4b2"/><stop offset="0.6293" stop-color="#0fb7b4"/><stop offset="0.6553" stop-color="#10b9b7"/><stop offset="0.6812" stop-color="#10bab9"/><stop offset="0.7072" stop-color="#10bbba"/><stop offset="0.7331" stop-color="#10bcbb"/><stop offset="0.7591" stop-color="#11bdbc"/><stop offset="0.7786" stop-color="#11bebc"/><stop offset="0.7851" stop-color="#11bebd"/><stop offset="0.811" stop-color="#12c1c0"/><stop offset="0.837" stop-color="#14c6c5"/><stop offset="0.8499" stop-color="#15c8c7"/><stop offset="0.8629" stop-color="#17ccca"/><stop offset="0.8889" stop-color="#1ad1ce"/><stop offset="0.9148" stop-color="#1dd6d3"/><stop offset="0.9207" stop-color="#1dd6d3"/><stop offset="0.9408" stop-color="#1bd2d0"/><stop offset="0.9609" stop-color="#19cdcb"/><stop offset="0.9667" stop-color="#19ccc9"/><stop offset="0.9862" stop-color="#17c9c7"/><stop offset="1" stop-color="#15c3c2"/></linearGradient>
<linearGradient id="g24" gradientUnits="userSpaceOnUse" x1="250" x2="1791.3"><stop offset="0" stop-color="#27ece8"/><stop offset="0.0039" stop-color="#2df4ee"/><stop offset="0.0078" stop-color="#32faf3"/><stop offset="0.0117" stop-color="#2befe9"/><stop offset="0.0162" stop-color="#22e0dc"/><stop offset="0.0247" stop-color="#1bd4d1"/><stop offset="0.026" stop-color="#1bd2cf"/><stop offset="0.0487" stop-color="#0fb7b4"/><stop offset="0.059" stop-color="#0baca8"/><stop offset="0.0811" stop-color="#09a7a3"/><stop offset="0.0921" stop-color="#08a5a1"/><stop offset="0.1103" stop-color="#08a4a0"/><stop offset="0.1174" stop-color="#08a4a0"/><stop offset="0.1362" stop-color="#08a4a0"/><stop offset="0.146" stop-color="#08a4a0"/><stop offset="0.1622" stop-color="#08a4a0"/><stop offset="0.1882" stop-color="#08a49f"/><stop offset="0.1946" stop-color="#08a4a0"/><stop offset="0.2141" stop-color="#08a4a0"/><stop offset="0.2401" stop-color="#08a4a0"/><stop offset="0.266" stop-color="#08a4a0"/><stop offset="0.292" stop-color="#08a4a0"/><stop offset="0.3179" stop-color="#08a4a0"/><stop offset="0.3439" stop-color="#08a4a0"/><stop offset="0.3698" stop-color="#08a4a0"/><stop offset="0.3893" stop-color="#08a4a0"/><stop offset="0.3958" stop-color="#08a4a0"/><stop offset="0.4217" stop-color="#08a4a0"/><stop offset="0.4379" stop-color="#08a49f"/><stop offset="0.4477" stop-color="#08a4a0"/><stop offset="0.4736" stop-color="#08a4a0"/><stop offset="0.4866" stop-color="#09a8a4"/><stop offset="0.4996" stop-color="#0aaaa6"/><stop offset="0.5255" stop-color="#0badaa"/><stop offset="0.5515" stop-color="#0db0ad"/><stop offset="0.5774" stop-color="#0eb4b1"/><stop offset="0.5839" stop-color="#0eb4b1"/><stop offset="0.6034" stop-color="#0fb6b3"/><stop offset="0.6293" stop-color="#0fb8b6"/><stop offset="0.6553" stop-color="#10b9b8"/><stop offset="0.6812" stop-color="#10bbba"/><stop offset="0.7072" stop-color="#10bcbb"/><stop offset="0.7331" stop-color="#11bdbc"/><stop offset="0.7591" stop-color="#11bebd"/><stop offset="0.7786" stop-color="#11bebd"/><stop offset="0.7851" stop-color="#11bfbe"/><stop offset="0.811" stop-color="#13c3c1"/><stop offset="0.837" stop-color="#15c8c7"/><stop offset="0.8499" stop-color="#16cac9"/><stop offset="0.8629" stop-color="#17cdcb"/><stop offset="0.8889" stop-color="#1bd3d0"/><stop offset="0.9148" stop-color="#1dd7d4"/><stop offset="0.9207" stop-color="#1dd6d3"/><stop offset="0.9408" stop-color="#1bd1cf"/><stop offset="0.9609" stop-color="#19ccca"/><stop offset="0.9667" stop-color="#18cbc9"/><stop offset="0.9862" stop-color="#17c9c7"/><stop offset="1" stop-color="#15c3c2"/></linearGradient>
<linearGradient id="g25" gradientUnits="userSpaceOnUse" x1="250" x2="1791.3"><stop offset="0" stop-color="#27ece8"/><stop offset="0.0039" stop-color="#2df4ee"/><stop offset="0.0078" stop-color="#32fbf4"/><stop offset="0.0117" stop-color="#2df1eb"/><stop offset="0.0162" stop-color="#24e3df"/><stop offset="0.0247" stop-color="#1cd5d2"/><stop offset="0.026" stop-color="#1bd3d1"/><stop offset="0.0487" stop-color="#10bbb9"/><stop offset="0.059" stop-color="#0cb0ad"/><stop offset="0.0811" stop-color="#0aa9a6"/><stop offset="0.0921" stop-color="#09a7a3"/><stop offset="0.1103" stop-color="#08a4a0"/><stop offset="0.1174" stop-color="#08a4a0"/><stop offset="0.1362" stop-color="#08a4a0"/><stop offset="0.146" stop-color="#08a4a0"/><stop offset="0.1622" stop-color="#08a4a0"/><stop offset="0.1882" stop-color="#08a4a0"/><stop offset="0.1946" stop-color="#08a3a0"/><stop offset="0.2141" stop-color="#08a4a0"/><stop offset="0.2401" stop-color="#08a4a0"/><stop offset="0.266" stop-color="#08a4a0"/><stop offset="0.292" stop-color="#08a4a0"/><stop offset="0.3179" stop-color="#08a4a0"/><stop offset="0.3439" stop-color="#08a4a0"/><stop offset="0.3698" stop-color="#08a4a0"/><stop offset="0.3893" stop-color="#08a4a0"/><stop offset="0.3958" stop-color="#08a4a0"/><stop offset="0.4217" stop-color="#08a3a0"/><stop offset="0.4379" stop-color="#08a4a0"/><stop offset="0.4477" stop-color="#08a4a0"/><stop offset="0.4736" stop-color="#08a4a0"/><stop offset="0.4866" stop-color="#0aaaa6"/><stop offset="0.4996" stop-color="#0baba8"/><stop offset="0.5255" stop-color="#0cafac"/><stop offset="0.5515" stop-color="#0db2af"/><stop offset="0.5774" stop-color="#0eb5b2"/><stop offset="0.5839" stop-color="#0fb6b3"/><stop offset="0.6034" stop-color="#0fb7b4"/><stop offset="0.6293" stop-color="#0fb8b6"/><stop offset="0.6553" stop-color="#10bab8"/><stop offset="0.6812" stop-color="#10bbba"/><stop offset="0.7072" stop-color="#10bcbb"/><stop offset="0.7331" stop-color="#11bdbc"/><stop offset="0.7591" stop-color="#11bebd"/><stop offset="0.7786" stop-color="#11bfbe"/><stop offset="0.7851" stop-color="#11bfbe"/><stop offset="0.811" stop-color="#14c5c4"/><stop offset="0.837" stop-color="#16cac9"/><stop offset="0.8499" stop-color="#16ccca"/><stop offset="0.8629" stop-color="#18cecc"/><stop offset="0.8889" stop-color="#1bd5d2"/><stop offset="0.9148" stop-color="#1dd6d3"/><stop offset="0.9207" stop-color="#1dd6d3"/><stop offset="0.9408" stop-color="#1ad0ce"/><stop offset="0.9609" stop-color="#19ccc9"/><stop offset="0.9667" stop-color="#18cbc8"/><stop offset="0.9862" stop-color="#17c9c7"/><stop offset="1" stop-color="#15c3c2"/></linearGradient>
<linearGradient id="g26" gradientUnits="userSpaceOnUse" x1="250" x2="1791.3"><stop offset="0" stop-color="#27ece8"/><stop offset="0.0039" stop-color="#2df5ef"/><stop offset="0.0078" stop-color="#33fbf5"/><stop offset="0.0117" stop-color="#2ef3ed"/><stop offset="0.0162" stop-color="#26e7e2"/><stop offset="0.0247" stop-color="#1ed8d4"/><stop offset="0.026" stop-color="#1dd5d2"/><stop offset="0.0487" stop-color="#12c0be"/><stop offset="0.059" stop-color="#0eb4b1"/><stop offset="0.0811" stop-color="#0badaa"/><stop offset="0.0921" stop-color="#0aaaa6"/><stop offset="0.1103" stop-color="#08a4a0"/><stop offset="0.1174" stop-color="#08a4a0"/><stop offset="0.1362" stop-color="#08a4a0"/><stop offset="0.146" stop-color="#08a3a0"/><stop offset="0.1622" stop-color="#08a4a0"/><stop offset="0.1882" stop-color="#08a4a0"/><stop offset="0.1946" stop-color="#08a4a0"/><stop offset="0.2141" stop-color="#08a4a0"/><stop offset="0.2401" stop-color="#08a4a0"/><stop offset="0.266" stop-color="#08a4a0"/><stop offset="0.292" stop-color="#08a4a0"/><stop offset="0.3179" stop-color="#08a4a0"/><stop offset="0.3439" stop-color="#08a4a0"/><stop offset="0.3698" stop-color="#08a4a0"/><stop offset="0.3893" stop-color="#08a4a0"/><stop offset="0.3958" stop-color="#08a4a0"/><stop offset="0.4217" stop-color="#08a4a0"/><stop offset="0.4379" stop-color="#08a4a0"/><stop offset="0.4477" stop-color="#08a4a0"/><stop offset="0.4736" stop-color="#09a6a2"/><stop offset="0.4866" stop-color="#0baba8"/><stop offset="0.4996" stop-color="#0badaa"/><stop offset="0.5255" stop-color="#0cb0ad"/><stop offset="0.5515" stop-color="#0eb3b0"/><stop offset="0.5774" stop-color="#0fb6b3"/><stop offset="0.5839" stop-color="#0fb6b3"/><stop offset="0.6034" stop-color="#0fb7b5"/><stop offset="0.6293" stop-color="#10b9b7"/><stop offset="0.6553" stop-color="#10bab9"/><stop offset="0.6812" stop-color="#10bcbb"/><stop offset="0.7072" stop-color="#11bdbc"/><stop offset="0.7331" stop-color="#11bebd"/><stop offset="0.7591" stop-color="#11bfbe"/><stop offset="0.7786" stop-color="#11c0bf"/><stop offset="0.7851" stop-color="#12c1c0"/><stop offset="0.811" stop-color="#15c7c6"/><stop offset="0.837" stop-color="#16ccca"/><stop offset="0.8499" stop-color="#17cdcb"/><stop offset="0.8629" stop-color="#18cfcd"/><stop offset="0.8889" stop-color="#1cd6d3"/><stop offset="0.9148" stop-color="#1dd6d3"/><stop offset="0.9207" stop-color="#1cd5d2"/><stop offset="0.9408" stop-color="#1acfcd"/><stop offset="0.9609" stop-color="#19cbc9"/><stop offset="0.9667" stop-color="#18cac8"/><stop offset="0.9862" stop-color="#17c9c7"/><stop offset="1" stop-color="#15c3c2"/></linearGradient>
<linearGradient id="g27" gradientUnits="userSpaceOnUse" x1="250" x2="1791.3"><stop offset="0" stop-color="#27ece8"/><stop offset="0.0039" stop-color="#2ef5ef"/><stop offset="0.0078" stop-color="#33fcf5"/><stop offset="0.0117" stop-color="#2ff5ef"/><stop offset="0.0162" stop-color="#28eae5"/><stop offset="0.0247" stop-color="#20dbd7"/><stop offset="0.026" stop-color="#1fd9d5"/><stop offset="0.0487" stop-color="#14c4c2"/><stop offset="0.059" stop-color="#0fb8b6"/><stop offset="0.0811" stop-color="#0db1ae"/><stop offset="0.0921" stop-color="#0badaa"/><stop offset="0.1103" stop-color="#09a6a3"/><stop offset="0.1174" stop-color="#08a4a1"/><stop offset="0.1362" stop-color="#08a4a0"/><stop offset="0.146" stop-color="#08a4a0"/><stop offset="0.1622" stop-color="#08a4a0"/><stop offset="0.1882" stop-color="#08a4a0"/><stop offset="0.1946" stop-color="#08a4a0"/><stop offset="0.2141" stop-color="#08a4a0"/><stop offset="0.2401" stop-color="#08a4a0"/><stop offset="0.266" stop-color="#08a4a0"/><stop offset="0.292" stop-color="#08a4a0"/><stop offset="0.3179" stop-color="#08a4a0"/><stop offset="0.3439" stop-color="#08a4a0"/><stop offset="0.3698" stop-color="#08a4a0"/><stop offset="0.3893" stop-color="#08a4a0"/><stop offset="0.3958" stop-color="#08a4a0"/><stop offset="0.4217" stop-color="#08a4a0"/><stop offset="0.4379" stop-color="#08a4a0"/><stop offset="0.4477" stop-color="#08a4a0"/><stop offset="0.4736" stop-color="#0aa8a5"/><stop offset="0.4866" stop-color="#0baca9"/><stop offset="0.4996" stop-color="#0baeab"/><stop offset="0.5255" stop-color="#0db0ad"/><stop offset="0.5515" stop-color="#0eb3b0"/><stop offset="0.5774" stop-color="#0fb6b3"/><stop offset="0.5839" stop-color="#0fb7b4"/><stop offset="0.6034" stop-color="#0fb8b5"/><stop offset="0.6293" stop-color="#10b9b7"/><stop offset="0.6553" stop-color="#10bbba"/><stop offset="0.6812" stop-color="#11bdbc"/><stop offset="0.7072" stop-color="#11bebd"/><stop offset="0.7331" stop-color="#11bfbe"/><stop offset="0.7591" stop-color="#12c1c0"/><stop offset="0.7786" stop-color="#12c2c1"/><stop offset="0.7851" stop-color="#13c4c3"/><stop offset="0.811" stop-color="#15cac8"/><stop offset="0.837" stop-color="#17cdcb"/><stop offset="0.8499" stop-color="#17cecc"/><stop offset="0.8629" stop-color="#19d2cf"/><stop offset="0.8889" stop-color="#1dd7d4"/><stop offset="0.9148" stop-color="#1cd5d2"/><stop offset="0.9207" stop-color="#1cd4d1"/><stop offset="0.9408" stop-color="#1acecc"/><stop offset="0.9609" stop-color="#18cbc8"/><stop offset="0.9667" stop-color="#18cac8"/><stop offset="0.9862" stop-color="#17c8c6"/><stop offset="1" stop-color="#15c3c2"/></linearGradient>
<linearGradient id="g28" gradientUnits="userSpaceOnUse" x1="250" x2="1791.3"><stop offset="0" stop-color="#27ece8"/><stop offset="0.0039" stop-color="#2ef5ef"/><stop offset="0.0078" stop-color="#34fdf6"/><stop offset="0.0117" stop-color="#30f7f1"/><stop offset="0.0162" stop-color="#2beee8"/><stop offset="0.0247" stop-color="#22dfdb"/><stop offset="0.026" stop-color="#21ddd9"/><stop offset="0.0487" stop-color="#15c7c6"/><stop offset="0.059" stop-color="#11bdbb"/><stop offset="0.0811" stop-color="#0eb5b2"/><stop offset="0.0921" stop-color="#0db1ae"/><stop offset="0.1103" stop-color="#0aaaa6"/><stop offset="0.1174" stop-color="#09a7a3"/><stop offset="0.1362" stop-color="#08a4a0"/><stop offset="0.146" stop-color="#08a4a0"/><stop offset="0.1622" stop-color="#08a4a0"/><stop offset="0.1882" stop-color="#08a4a0"/><stop offset="0.1946" stop-color="#08a4a0"/><stop offset="0.2141" stop-color="#08a4a0"/><stop offset="0.2401" stop-color="#08a4a0"/><stop offset="0.266" stop-color="#08a4a0"/><stop offset="0.292" stop-color="#08a4a0"/><stop offset="0.3179" stop-color="#08a4a0"/><stop offset="0.3439" stop-color="#08a4a0"/><stop offset="0.3698" stop-color="#08a4a0"/><stop offset="0.3893" stop-color="#08a4a0"/><stop offset="0.3958" stop-color="#08a4a0"/><stop offset="0.4217" stop-color="#08a4a0"/><stop offset="0.4379" stop-color="#08a4a0"/><stop offset="0.4477" stop-color="#08a4a0"/><stop offset="0.4736" stop-color="#0aaba8"/><stop offset="0.4866" stop-color="#0badaa"/><stop offset="0.4996" stop-color="#0caeab"/><stop offset="0.5255" stop-color="#0db1ae"/><stop offset="0.5515" stop-color="#0eb4b1"/><stop offset="0.5774" stop-color="#0fb7b4"/><stop offset="0.5839" stop-color="#0fb7b4"/><stop offset="0.6034" stop-color="#10b9b6"/><stop offset="0.6293" stop-color="#10bbb9"/><stop offset="0.6553" stop-color="#11bcbb"/><stop offset="0.6812" stop-color="#11bebd"/><stop offset="0.7072" stop-color="#12c0bf"/><stop offset="0.7331" stop-color="#12c1c0"/><stop offset="0.7591" stop-color="#13c3c2"/><stop offset="0.7786" stop-color="#13c5c4"/><stop offset="0.7851" stop-color="#14c6c5"/><stop offset="0.811" stop-color="#16ccca"/><stop offset="0.837" stop-color="#17cecc"/><stop offset="0.8499" stop-color="#18d0cd"/><stop offset="0.8629" stop-color="#1ad4d1"/><stop offset="0.8889" stop-color="#1dd7d4"/><stop offset="0.9148" stop-color="#1cd4d1"/><stop offset="0.9207" stop-color="#1bd3d0"/><stop offset="0.9408" stop-color="#19cdcb"/><stop offset="0.9609" stop-color="#18cac8"/><stop offset="0.9667" stop-color="#18cac8"/><stop offset="0.9862" stop-color="#17c8c6"/><stop offset="1" stop-color="#15c3c2"/></linearGradient>
<linearGradient id="g29" gradientUnits="userSpaceOnUse" x1="250" x2="1791.3"><stop offset="0" stop-color="#27ece8"/><stop offset="0.0039" stop-color="#2ef6f0"/><stop offset="0.0078" stop-color="#34fef7"/><stop offset="0.0117" stop-color="#32f9f3"/><stop offset="0.0162" stop-color="#2df2ec"/><stop offset="0.0247" stop-color="#25e4e0"/><stop offset="0.026" stop-color="#24e1dd"/><stop offset="0.0487" stop-color="#16cac8"/><stop offset="0.059" stop-color="#12c1bf"/><stop offset="0.0811" stop-color="#0fb9b7"/><stop offset="0.0921" stop-color="#0eb5b3"/><stop offset="0.1103" stop-color="#0caeab"/><stop offset="0.1174" stop-color="#0aaba7"/><stop offset="0.1362" stop-color="#08a4a0"/><stop offset="0.146" stop-color="#08a4a0"/><stop offset="0.1622" stop-color="#08a4a0"/><stop offset="0.1882" stop-color="#08a4a0"/><stop offset="0.1946" stop-color="#08a4a0"/><stop offset="0.2141" stop-color="#08a4a0"/><stop offset="0.2401" stop-color="#08a4a0"/><stop offset="0.266" stop-color="#08a4a0"/><stop offset="0.292" stop-color="#08a4a0"/><stop offset="0.3179" stop-color="#08a4a0"/><stop offset="0.3439" stop-color="#08a4a0"/><stop offset="0.3698" stop-color="#08a4a0"/><stop offset="0.3893" stop-color="#08a4a0"/><stop offset="0.3958" stop-color="#08a4a0"/><stop offset="0.4217" stop-color="#08a4a0"/><stop offset="0.4379" stop-color="#08a4a0"/><stop offset="0.4477" stop-color="#08a4a0"/><stop offset="0.4736" stop-color="#0bacaa"/><stop offset="0.4866" stop-color="#0badaa"/><stop offset="0.4996" stop-color="#0cafac"/><stop offset="0.5255" stop-color="#0db2af"/><stop offset="0.5515" stop-color="#0eb5b2"/><stop offset="0.5774" stop-color="#0fb8b5"/><stop offset="0.5839" stop-color="#10b9b6"/><stop offset="0.6034" stop-color="#10bab8"/><stop offset="0.6293" stop-color="#11bcbb"/><stop offset="0.6553" stop-color="#11bebd"/><stop offset="0.6812" stop-color="#12c0bf"/><stop offset="0.7072" stop-color="#12c1c0"/><stop offset="0.7331" stop-color="#13c3c2"/><stop offset="0.7591" stop-color="#14c5c4"/><stop offset="0.7786" stop-color="#15c8c6"/><stop offset="0.7851" stop-color="#15c9c8"/><stop offset="0.811" stop-color="#17cdcb"/><stop offset="0.837" stop-color="#18d1ce"/><stop offset="0.8499" stop-color="#19d2cf"/><stop offset="0.8629" stop-color="#1bd6d3"/><stop offset="0.8889" stop-color="#1cd7d4"/><stop offset="0.9148" stop-color="#1bd3d0"/><stop offset="0.9207" stop-color="#1bd2cf"/><stop offset="0.9408" stop-color="#19cdca"/><stop offset="0.9609" stop-color="#18cac8"/><stop offset="0.9667" stop-color="#18c9c7"/><stop offset="0.9862" stop-color="#17c8c6"/><stop offset="1" stop-color="#15c3c2"/></linearGradient>
<linearGradient id="g30" gradientUnits="userSpaceOnUse" x1="250" x2="1791.3"><stop offset="0" stop-color="#27ece8"/><stop offset="0.0039" stop-color="#2ef6f0"/><stop offset="0.0078" stop-color="#35fef7"/><stop offset="0.0117" stop-color="#33fbf4"/><stop offset="0.0162" stop-color="#2ff5ef"/><stop offset="0.0247" stop-color="#28e9e4"/><stop offset="0.026" stop-color="#27e7e2"/><stop offset="0.0487" stop-color="#17ccca"/><stop offset="0.059" stop-color="#13c4c3"/><stop offset="0.0811" stop-color="#11bdbb"/><stop offset="0.0921" stop-color="#10bab7"/><stop offset="0.1103" stop-color="#0db3b0"/><stop offset="0.1174" stop-color="#0cafac"/><stop offset="0.1362" stop-color="#09a7a3"/><stop offset="0.146" stop-color="#08a4a0"/><stop offset="0.1622" stop-color="#08a4a0"/><stop offset="0.1882" stop-color="#08a4a0"/><stop offset="0.1946" stop-color="#08a4a0"/><stop offset="0.2141" stop-color="#08a4a0"/><stop offset="0.2401" stop-color="#08a4a0"/><stop offset="0.266" stop-color="#08a4a0"/><stop offset="0.292" stop-color="#08a4a0"/><stop offset="0.3179" stop-color="#08a4a0"/><stop offset="0.3439" stop-color="#08a4a0"/><stop offset="0.3698" stop-color="#08a4a0"/><stop offset="0.3893" stop-color="#08a4a0"/><stop offset="0.3958" stop-color="#08a4a0"/><stop offset="0.4217" stop-color="#08a4a0"/><stop offset="0.4379" stop-color="#08a4a0"/><stop offset="0.4477" stop-color="#08a4a0"/><stop offset="0.4736" stop-color="#0badab"/><stop offset="0.4866" stop-color="#0cafad"/><stop offset="0.4996" stop-color="#0db1ae"/><stop offset="0.5255" stop-color="#0eb4b1"/><stop offset="0.5515" stop-color="#0fb7b5"/><stop offset="0.5774" stop-color="#10bab8"/><stop offset="0.5839" stop-color="#10bbb8"/><stop offset="0.6034" stop-color="#11bcba"/><stop offset="0.6293" stop-color="#11bebd"/><stop offset="0.6553" stop-color="#12c0bf"/><stop offset="0.6812" stop-color="#12c1c0"/><stop offset="0.7072" stop-color="#13c3c2"/><stop offset="0.7331" stop-color="#14c5c4"/><stop offset="0.7591" stop-color="#15c8c6"/><stop offset="0.7786" stop-color="#16cac9"/><stop offset="0.7851" stop-color="#16cbca"/><stop offset="0.811" stop-color="#18d0ce"/><stop offset="0.837" stop-color="#1ad4d1"/><stop offset="0.8499" stop-color="#1ad4d2"/><stop offset="0.8629" stop-color="#1cd7d4"/><stop offset="0.8889" stop-color="#1cd6d3"/><stop offset="0.9148" stop-color="#1bd1cf"/><stop offset="0.9207" stop-color="#1ad0ce"/><stop offset="0.9408" stop-color="#19ccca"/><stop offset="0.9609" stop-color="#18cac8"/><stop offset="0.9667" stop-color="#18c9c7"/><stop offset="0.9862" stop-color="#17c8c6"/><stop offset="1" stop-color="#15c3c2"/></linearGradient>
<linearGradient id="g31" gradientUnits="userSpaceOnUse" x1="250" x2="1791.3"><stop offset="0" stop-color="#27ece8"/><stop offset="0.0039" stop-color="#2ef6f0"/><stop offset="0.0078" stop-color="#35fff8"/><stop offset="0.0117" stop-color="#34fdf6"/><stop offset="0.0162" stop-color="#31f8f2"/><stop offset="0.0247" stop-color="#2befe9"/><stop offset="0.026" stop-color="#2aece7"/><stop offset="0.0487" stop-color="#18cdcb"/><stop offset="0.059" stop-color="#15c7c5"/><stop offset="0.0811" stop-color="#12c1bf"/><stop offset="0.0921" stop-color="#11bdbc"/><stop offset="0.1103" stop-color="#0fb8b5"/><stop offset="0.1174" stop-color="#0eb4b2"/><stop offset="0.1362" stop-color="#0baca8"/><stop offset="0.146" stop-color="#09a7a3"/><stop offset="0.1622" stop-color="#08a4a0"/><stop offset="0.1882" stop-color="#08a4a0"/><stop offset="0.1946" stop-color="#08a4a0"/><stop offset="0.2141" stop-color="#08a4a0"/><stop offset="0.2401" stop-color="#08a4a0"/><stop offset="0.266" stop-color="#08a4a0"/><stop offset="0.292" stop-color="#08a4a0"/><stop offset="0.3179" stop-color="#08a4a0"/><stop offset="0.3439" stop-color="#08a4a0"/><stop offset="0.3698" stop-color="#08a4a0"/><stop offset="0.3893" stop-color="#08a4a0"/><stop offset="0.3958" stop-color="#08a4a0"/><stop offset="0.4217" stop-color="#08a4a0"/><stop offset="0.4379" stop-color="#08a4a0"/><stop offset="0.4477" stop-color="#08a4a0"/><stop offset="0.4736" stop-color="#0caeab"/><stop offset="0.4866" stop-color="#0db2af"/><stop offset="0.4996" stop-color="#0eb4b1"/><stop offset="0.5255" stop-color="#0fb7b4"/><stop offset="0.5515" stop-color="#10bab7"/><stop offset="0.5774" stop-color="#11bcba"/><stop offset="0.5839" stop-color="#11bdbb"/><stop offset="0.6034" stop-color="#11bebd"/><stop offset="0.6293" stop-color="#12c0bf"/><stop offset="0.6553" stop-color="#12c2c0"/><stop offset="0.6812" stop-color="#13c3c2"/><stop offset="0.7072" stop-color="#13c5c4"/><stop offset="0.7331" stop-color="#14c7c6"/><stop offset="0.7591" stop-color="#15cac8"/><stop offset="0.7786" stop-color="#16cccb"/><stop offset="0.7851" stop-color="#17cecc"/><stop offset="0.811" stop-color="#19d4d1"/><stop offset="0.837" stop-color="#1bd6d4"/><stop offset="0.8499" stop-color="#1bd6d4"/><stop offset="0.8629" stop-color="#1cd8d5"/><stop offset="0.8889" stop-color="#1cd5d2"/><stop offset="0.9148" stop-color="#1ad0ce"/><stop offset="0.9207" stop-color="#1acfcd"/><stop offset="0.9408" stop-color="#18cbc9"/><stop offset="0.9609" stop-color="#18cac8"/><stop offset="0.9667" stop-color="#18c9c7"/><stop offset="0.9862" stop-color="#17c8c6"/><stop offset="1" stop-color="#15c3c2"/></linearGradient>
<linearGradient id="g32" gradientUnits="userSpaceOnUse" x1="250" x2="1791.3"><stop offset="0" stop-color="#27ece8"/><stop offset="0.0039" stop-color="#2ef6f0"/><stop offset="0.0078" stop-color="#35fff8"/><stop offset="0.0117" stop-color="#34fef7"/><stop offset="0.0162" stop-color="#33fbf4"/><stop offset="0.0247" stop-color="#2ef4ee"/><stop offset="0.026" stop-color="#2df2ec"/><stop offset="0.0487" stop-color="#19d0ce"/><stop offset="0.059" stop-color="#15c9c7"/><stop offset="0.0811" stop-color="#13c4c2"/><stop offset="0.0921" stop-color="#12c1bf"/><stop offset="0.1103" stop-color="#11bcba"/><stop offset="0.1174" stop-color="#10bab8"/><stop offset="0.1362" stop-color="#0db2af"/><stop offset="0.146" stop-color="#0bada9"/><stop offset="0.1622" stop-color="#08a4a0"/><stop offset="0.1882" stop-color="#08a4a0"/><stop offset="0.1946" stop-color="#08a4a0"/><stop offset="0.2141" stop-color="#08a4a0"/><stop offset="0.2401" stop-color="#08a4a0"/><stop offset="0.266" stop-color="#08a4a0"/><stop offset="0.292" stop-color="#08a4a0"/><stop offset="0.3179" stop-color="#08a4a0"/><stop offset="0.3439" stop-color="#08a4a0"/><stop offset="0.3698" stop-color="#08a4a0"/><stop offset="0.3893" stop-color="#08a4a0"/><stop offset="0.3958" stop-color="#08a4a0"/><stop offset="0.4217" stop-color="#08a4a0"/><stop offset="0.4379" stop-color="#08a4a0"/><stop offset="0.4477" stop-color="#09a5a2"/><stop offset="0.4736" stop-color="#0cb0ae"/><stop offset="0.4866" stop-color="#0eb5b3"/><stop offset="0.4996" stop-color="#0fb7b5"/><stop offset="0.5255" stop-color="#10bab8"/><stop offset="0.5515" stop-color="#11bdbb"/><stop offset="0.5774" stop-color="#12bfbd"/><stop offset="0.5839" stop-color="#12bfbe"/><stop offset="0.6034" stop-color="#12c1bf"/><stop offset="0.6293" stop-color="#13c2c1"/><stop offset="0.6553" stop-color="#13c3c2"/><stop offset="0.6812" stop-color="#13c4c3"/><stop offset="0.7072" stop-color="#14c6c5"/><stop offset="0.7331" stop-color="#15c8c7"/><stop offset="0.7591" stop-color="#16ccca"/><stop offset="0.7786" stop-color="#18d0ce"/><stop offset="0.7851" stop-color="#19d2d0"/><stop offset="0.811" stop-color="#1bd8d5"/><stop offset="0.837" stop-color="#1cd9d6"/><stop offset="0.8499" stop-color="#1cd8d5"/><stop offset="0.8629" stop-color="#1cd8d5"/><stop offset="0.8889" stop-color="#1bd3d1"/><stop offset="0.9148" stop-color="#1acfcd"/><stop offset="0.9207" stop-color="#19cecc"/><stop offset="0.9408" stop-color="#18cbc9"/><stop offset="0.9609" stop-color="#18cac8"/><stop offset="0.9667" stop-color="#18c9c7"/><stop offset="0.9862" stop-color="#17c8c6"/><stop offset="1" stop-color="#15c3c2"/></linearGradient>
<linearGradient id="g33" gradientUnits="userSpaceOnUse" x1="250" x2="1791.3"><stop offset="0" stop-color="#27ece7"/><stop offset="0.0039" stop-color="#2ef6f0"/><stop offset="0.0078" stop-color="#35fff8"/><stop offset="0.0117" stop-color="#35fff8"/><stop offset="0.0162" stop-color="#34fdf6"/><stop offset="0.0247" stop-color="#31f8f2"/><stop offset="0.026" stop-color="#30f7f0"/><stop offset="0.0487" stop-color="#1bd4d1"/><stop offset="0.059" stop-color="#16cac9"/><stop offset="0.0811" stop-color="#14c6c5"/><stop offset="0.0921" stop-color="#13c4c2"/><stop offset="0.1103" stop-color="#12c1bf"/><stop offset="0.1174" stop-color="#12bfbd"/><stop offset="0.1362" stop-color="#0fb9b6"/><stop offset="0.146" stop-color="#0db4b1"/><stop offset="0.1622" stop-color="#0aa8a4"/><stop offset="0.1882" stop-color="#08a4a0"/><stop offset="0.1946" stop-color="#08a4a0"/><stop offset="0.2141" stop-color="#08a4a0"/><stop offset="0.2401" stop-color="#08a4a0"/><stop offset="0.266" stop-color="#08a4a0"/><stop offset="0.292" stop-color="#08a4a0"/><stop offset="0.3179" stop-color="#08a4a0"/><stop offset="0.3439" stop-color="#08a4a0"/><stop offset="0.3698" stop-color="#08a4a0"/><stop offset="0.3893" stop-color="#08a4a0"/><stop offset="0.3958" stop-color="#08a4a0"/><stop offset="0.4217" stop-color="#08a4a0"/><stop offset="0.4379" stop-color="#08a4a0"/><stop offset="0.4477" stop-color="#0aaaa8"/><stop offset="0.4736" stop-color="#0db3b1"/><stop offset="0.4866" stop-color="#0fb9b7"/><stop offset="0.4996" stop-color="#10bbb9"/><stop offset="0.5255" stop-color="#11bdbb"/><stop offset="0.5515" stop-color="#12bfbe"/><stop offset="0.5774" stop-color="#12c1c0"/><stop offset="0.5839" stop-color="#13c2c0"/><stop offset="0.6034" stop-color="#13c3c1"/><stop offset="0.6293" stop-color="#13c4c3"/><stop offset="0.6553" stop-color="#13c5c4"/><stop offset="0.6812" stop-color="#14c5c4"/><stop offset="0.7072" stop-color="#14c7c6"/><stop offset="0.7331" stop-color="#15cac9"/><stop offset="0.7591" stop-color="#18d0ce"/><stop offset="0.7786" stop-color="#1ad6d4"/><stop offset="0.7851" stop-color="#1bd8d6"/><stop offset="0.811" stop-color="#1ddbd9"/><stop offset="0.837" stop-color="#1ddad7"/><stop offset="0.8499" stop-color="#1cd8d5"/><stop offset="0.8629" stop-color="#1cd7d4"/><stop offset="0.8889" stop-color="#1bd2d0"/><stop offset="0.9148" stop-color="#19cecc"/><stop offset="0.9207" stop-color="#19cdcb"/><stop offset="0.9408" stop-color="#18cbc9"/><stop offset="0.9609" stop-color="#18c9c7"/><stop offset="0.9667" stop-color="#18c9c7"/><stop offset="0.9862" stop-color="#17c8c6"/><stop offset="1" stop-color="#15c3c2"/></linearGradient>
<linearGradient id="g34" gradientUnits="userSpaceOnUse" x1="250" x2="1791.3"><stop offset="0" stop-color="#27ece8"/><stop offset="0.0039" stop-color="#2ef6f0"/><stop offset="0.0078" stop-color="#35fff8"/><stop offset="0.0117" stop-color="#35fff8"/><stop offset="0.0162" stop-color="#35fff8"/><stop offset="0.0247" stop-color="#33fbf5"/><stop offset="0.026" stop-color="#32fbf4"/><stop offset="0.0487" stop-color="#1fdad6"/><stop offset="0.059" stop-color="#17ccca"/><stop offset="0.0811" stop-color="#14c7c6"/><stop offset="0.0921" stop-color="#14c5c4"/><stop offset="0.1103" stop-color="#13c4c3"/><stop offset="0.1174" stop-color="#13c3c2"/><stop offset="0.1362" stop-color="#11bfbd"/><stop offset="0.146" stop-color="#10bcba"/><stop offset="0.1622" stop-color="#0cb1ae"/><stop offset="0.1882" stop-color="#08a4a0"/><stop offset="0.1946" stop-color="#08a4a0"/><stop offset="0.2141" stop-color="#08a39f"/><stop offset="0.2401" stop-color="#08a4a0"/><stop offset="0.266" stop-color="#08a4a0"/><stop offset="0.292" stop-color="#08a4a0"/><stop offset="0.3179" stop-color="#08a4a0"/><stop offset="0.3439" stop-color="#08a4a0"/><stop offset="0.3698" stop-color="#08a4a0"/><stop offset="0.3893" stop-color="#08a4a0"/><stop offset="0.3958" stop-color="#08a4a0"/><stop offset="0.4217" stop-color="#08a4a0"/><stop offset="0.4379" stop-color="#08a4a0"/><stop offset="0.4477" stop-color="#0caeac"/><stop offset="0.4736" stop-color="#0fb7b6"/><stop offset="0.4866" stop-color="#11bdbb"/><stop offset="0.4996" stop-color="#11bebc"/><stop offset="0.5255" stop-color="#12c0bf"/><stop offset="0.5515" stop-color="#13c2c1"/><stop offset="0.5774" stop-color="#13c4c2"/><stop offset="0.5839" stop-color="#13c4c3"/><stop offset="0.6034" stop-color="#13c5c3"/><stop offset="0.6293" stop-color="#14c5c4"/><stop offset="0.6553" stop-color="#14c6c5"/><stop offset="0.6812" stop-color="#14c6c5"/><stop offset="0.7072" stop-color="#15c8c7"/><stop offset="0.7331" stop-color="#17cecc"/><stop offset="0.7591" stop-color="#1bd7d5"/><stop offset="0.7786" stop-color="#1ddcda"/><stop offset="0.7851" stop-color="#1ddddb"/><stop offset="0.811" stop-color="#1ededb"/><stop offset="0.837" stop-color="#1ddad7"/><stop offset="0.8499" stop-color="#1cd8d5"/><stop offset="0.8629" stop-color="#1bd6d3"/><stop offset="0.8889" stop-color="#1ad0ce"/><stop offset="0.9148" stop-color="#19cdcb"/><stop offset="0.9207" stop-color="#19cdcb"/><stop offset="0.9408" stop-color="#18cbc9"/><stop offset="0.9609" stop-color="#18c9c7"/><stop offset="0.9667" stop-color="#18c9c7"/><stop offset="0.9862" stop-color="#17c7c6"/><stop offset="1" stop-color="#15c3c2"/></linearGradient>
<linearGradient id="g35" gradientUnits="userSpaceOnUse" x1="250" x2="1791.3"><stop offset="0" stop-color="#27ece8"/><stop offset="0.0039" stop-color="#2ef6f0"/><stop offset="0.0078" stop-color="#35fff8"/><stop offset="0.0117" stop-color="#35fff8"/><stop offset="0.0162" stop-color="#35fff8"/><stop offset="0.0247" stop-color="#34fef7"/><stop offset="0.026" stop-color="#34fef7"/><stop offset="0.0487" stop-color="#23e0dd"/><stop offset="0.059" stop-color="#19cfcd"/><stop offset="0.0811" stop-color="#15c8c7"/><stop offset="0.0921" stop-color="#14c7c5"/><stop offset="0.1103" stop-color="#14c7c6"/><stop offset="0.1174" stop-color="#14c6c5"/><stop offset="0.1362" stop-color="#13c5c3"/><stop offset="0.146" stop-color="#12c3c1"/><stop offset="0.1622" stop-color="#10bbb9"/><stop offset="0.1882" stop-color="#08a4a0"/><stop offset="0.1946" stop-color="#08a4a0"/><stop offset="0.2141" stop-color="#08a39f"/><stop offset="0.2401" stop-color="#08a39f"/><stop offset="0.266" stop-color="#08a4a0"/><stop offset="0.292" stop-color="#08a4a0"/><stop offset="0.3179" stop-color="#08a4a0"/><stop offset="0.3439" stop-color="#08a4a0"/><stop offset="0.3698" stop-color="#08a4a0"/><stop offset="0.3893" stop-color="#08a4a0"/><stop offset="0.3958" stop-color="#08a4a0"/><stop offset="0.4217" stop-color="#08a4a1"/><stop offset="0.4379" stop-color="#0aaaa7"/><stop offset="0.4477" stop-color="#0cafad"/><stop offset="0.4736" stop-color="#10bcba"/><stop offset="0.4866" stop-color="#12c0bf"/><stop offset="0.4996" stop-color="#12c1c0"/><stop offset="0.5255" stop-color="#13c3c2"/><stop offset="0.5515" stop-color="#13c4c3"/><stop offset="0.5774" stop-color="#14c5c4"/><stop offset="0.5839" stop-color="#14c5c4"/><stop offset="0.6034" stop-color="#14c6c5"/><stop offset="0.6293" stop-color="#14c6c5"/><stop offset="0.6553" stop-color="#14c7c6"/><stop offset="0.6812" stop-color="#14c7c6"/><stop offset="0.7072" stop-color="#16cbca"/><stop offset="0.7331" stop-color="#1ad6d3"/><stop offset="0.7591" stop-color="#1edfdc"/><stop offset="0.7786" stop-color="#1fe1de"/><stop offset="0.7851" stop-color="#1fe1de"/><stop offset="0.811" stop-color="#1ededb"/><stop offset="0.837" stop-color="#1cd9d7"/><stop offset="0.8499" stop-color="#1cd7d4"/><stop offset="0.8629" stop-color="#1bd4d2"/><stop offset="0.8889" stop-color="#19cfcd"/><stop offset="0.9148" stop-color="#19cdca"/><stop offset="0.9207" stop-color="#18ccca"/><stop offset="0.9408" stop-color="#18cac8"/><stop offset="0.9609" stop-color="#18c9c7"/><stop offset="0.9667" stop-color="#17c9c7"/><stop offset="0.9862" stop-color="#17c7c5"/><stop offset="1" stop-color="#15c3c2"/></linearGradient>
<linearGradient id="g36" gradientUnits="userSpaceOnUse" x1="250" x2="1791.3"><stop offset="0" stop-color="#27ece8"/><stop offset="0.0039" stop-color="#2ef6f0"/><stop offset="0.0078" stop-color="#35fff8"/><stop offset="0.0117" stop-color="#35fff8"/><stop offset="0.0162" stop-color="#35fff8"/><stop offset="0.0247" stop-color="#35fff8"/><stop offset="0.026" stop-color="#35fff8"/><stop offset="0.0487" stop-color="#27e8e3"/><stop offset="0.059" stop-color="#1bd4d2"/><stop offset="0.0811" stop-color="#16cac8"/><stop offset="0.0921" stop-color="#14c7c6"/><stop offset="0.1103" stop-color="#15c8c7"/><stop offset="0.1174" stop-color="#15c8c7"/><stop offset="0.1362" stop-color="#15c8c7"/><stop offset="0.146" stop-color="#14c8c7"/><stop offset="0.1622" stop-color="#13c5c3"/><stop offset="0.1882" stop-color="#0aaaa6"/><stop offset="0.1946" stop-color="#08a4a0"/><stop offset="0.2141" stop-color="#08a29e"/><stop offset="0.2401" stop-color="#07a19e"/><stop offset="0.266" stop-color="#08a39f"/><stop offset="0.292" stop-color="#08a39f"/><stop offset="0.3179" stop-color="#08a39f"/><stop offset="0.3439" stop-color="#08a39f"/><stop offset="0.3698" stop-color="#08a39f"/><stop offset="0.3893" stop-color="#08a39f"/><stop offset="0.3958" stop-color="#08a39f"/><stop offset="0.4217" stop-color="#09a7a5"/><stop offset="0.4379" stop-color="#0caead"/><stop offset="0.4477" stop-color="#0db2b1"/><stop offset="0.4736" stop-color="#12c0be"/><stop offset="0.4866" stop-color="#13c3c2"/><stop offset="0.4996" stop-color="#13c4c3"/><stop offset="0.5255" stop-color="#13c5c4"/><stop offset="0.5515" stop-color="#14c6c5"/><stop offset="0.5774" stop-color="#14c6c5"/><stop offset="0.5839" stop-color="#14c7c6"/><stop offset="0.6034" stop-color="#14c7c6"/><stop offset="0.6293" stop-color="#14c7c6"/><stop offset="0.6553" stop-color="#15c8c7"/><stop offset="0.6812" stop-color="#15c9c7"/><stop offset="0.7072" stop-color="#19d3d1"/><stop offset="0.7331" stop-color="#1edfdc"/><stop offset="0.7591" stop-color="#21e4e1"/><stop offset="0.7786" stop-color="#20e2df"/><stop offset="0.7851" stop-color="#1fe1de"/><stop offset="0.811" stop-color="#1eddda"/><stop offset="0.837" stop-color="#1cd8d5"/><stop offset="0.8499" stop-color="#1bd6d3"/><stop offset="0.8629" stop-color="#1ad2d0"/><stop offset="0.8889" stop-color="#19cecc"/><stop offset="0.9148" stop-color="#18ccca"/><stop offset="0.9207" stop-color="#18ccca"/><stop offset="0.9408" stop-color="#18cac8"/><stop offset="0.9609" stop-color="#18c9c7"/><stop offset="0.9667" stop-color="#17c8c6"/><stop offset="0.9862" stop-color="#16c7c5"/><stop offset="1" stop-color="#15c3c2"/></linearGradient>
<linearGradient id="g37" gradientUnits="userSpaceOnUse" x1="250" x2="1791.3"><stop offset="0" stop-color="#27ece8"/><stop offset="0.0039" stop-color="#2ef5ef"/><stop offset="0.0078" stop-color="#35fff8"/><stop offset="0.0117" stop-color="#35fff8"/><stop offset="0.0162" stop-color="#35fff8"/><stop offset="0.0247" stop-color="#35fff8"/><stop offset="0.026" stop-color="#35fff8"/><stop offset="0.0487" stop-color="#2befe9"/><stop offset="0.059" stop-color="#1fdbd8"/><stop offset="0.0811" stop-color="#17cdcc"/><stop offset="0.0921" stop-color="#15c9c8"/><stop offset="0.1103" stop-color="#15c9c8"/><stop offset="0.1174" stop-color="#15c9c8"/><stop offset="0.1362" stop-color="#15cac9"/><stop offset="0.146" stop-color="#15cac9"/><stop offset="0.1622" stop-color="#15cbca"/><stop offset="0.1882" stop-color="#12c0be"/><stop offset="0.1946" stop-color="#0db2af"/><stop offset="0.2141" stop-color="#08a39f"/><stop offset="0.2401" stop-color="#079f9c"/><stop offset="0.266" stop-color="#07a09d"/><stop offset="0.292" stop-color="#07a09d"/><stop offset="0.3179" stop-color="#07a09d"/><stop offset="0.3439" stop-color="#07a19d"/><stop offset="0.3698" stop-color="#07a19d"/><stop offset="0.3893" stop-color="#07a09d"/><stop offset="0.3958" stop-color="#07a19e"/><stop offset="0.4217" stop-color="#0aa9a7"/><stop offset="0.4379" stop-color="#0db1b0"/><stop offset="0.4477" stop-color="#0fb8b6"/><stop offset="0.4736" stop-color="#13c3c2"/><stop offset="0.4866" stop-color="#14c5c4"/><stop offset="0.4996" stop-color="#14c6c5"/><stop offset="0.5255" stop-color="#14c6c5"/><stop offset="0.5515" stop-color="#14c7c6"/><stop offset="0.5774" stop-color="#15c8c6"/><stop offset="0.5839" stop-color="#15c8c7"/><stop offset="0.6034" stop-color="#15c9c8"/><stop offset="0.6293" stop-color="#16cbc9"/><stop offset="0.6553" stop-color="#17cdcb"/><stop offset="0.6812" stop-color="#18cfcd"/><stop offset="0.7072" stop-color="#1ededb"/><stop offset="0.7331" stop-color="#22e7e3"/><stop offset="0.7591" stop-color="#22e6e3"/><stop offset="0.7786" stop-color="#1fe1de"/><stop offset="0.7851" stop-color="#1fe0dd"/><stop offset="0.811" stop-color="#1ddbd8"/><stop offset="0.837" stop-color="#1bd6d3"/><stop offset="0.8499" stop-color="#1bd4d1"/><stop offset="0.8629" stop-color="#1ad1cf"/><stop offset="0.8889" stop-color="#19cdcb"/><stop offset="0.9148" stop-color="#18ccca"/><stop offset="0.9207" stop-color="#18ccca"/><stop offset="0.9408" stop-color="#18cac8"/><stop offset="0.9609" stop-color="#18c8c7"/><stop offset="0.9667" stop-color="#17c8c6"/><stop offset="0.9862" stop-color="#16c7c5"/><stop offset="1" stop-color="#15c3c2"/></linearGradient>
<linearGradient id="g38" gradientUnits="userSpaceOnUse" x1="250" x2="1791.3"><stop offset="0" stop-color="#27ece8"/><stop offset="0.0039" stop-color="#2df5ef"/><stop offset="0.0078" stop-color="#35fff8"/><stop offset="0.0117" stop-color="#35fff8"/><stop offset="0.0162" stop-color="#35fff8"/><stop offset="0.0247" stop-color="#35fff8"/><stop offset="0.026" stop-color="#35fff8"/><stop offset="0.0487" stop-color="#2ff5ef"/><stop offset="0.059" stop-color="#24e3df"/><stop offset="0.0811" stop-color="#1ad3d1"/><stop offset="0.0921" stop-color="#17cdcb"/><stop offset="0.1103" stop-color="#17cccb"/><stop offset="0.1174" stop-color="#17ccca"/><stop offset="0.1362" stop-color="#16ccca"/><stop offset="0.146" stop-color="#16cccb"/><stop offset="0.1622" stop-color="#16cccb"/><stop offset="0.1882" stop-color="#17cecd"/><stop offset="0.1946" stop-color="#17cecc"/><stop offset="0.2141" stop-color="#14c4c2"/><stop offset="0.2401" stop-color="#09a5a2"/><stop offset="0.266" stop-color="#069d9a"/><stop offset="0.292" stop-color="#069d9a"/><stop offset="0.3179" stop-color="#069d9a"/><stop offset="0.3439" stop-color="#069e9b"/><stop offset="0.3698" stop-color="#069e9a"/><stop offset="0.3893" stop-color="#069d9a"/><stop offset="0.3958" stop-color="#079f9c"/><stop offset="0.4217" stop-color="#0caead"/><stop offset="0.4379" stop-color="#0fb7b6"/><stop offset="0.4477" stop-color="#11bebd"/><stop offset="0.4736" stop-color="#14c6c4"/><stop offset="0.4866" stop-color="#14c6c5"/><stop offset="0.4996" stop-color="#14c7c6"/><stop offset="0.5255" stop-color="#14c7c6"/><stop offset="0.5515" stop-color="#15c9c8"/><stop offset="0.5774" stop-color="#18cecc"/><stop offset="0.5839" stop-color="#19d0ce"/><stop offset="0.6034" stop-color="#1ad2d0"/><stop offset="0.6293" stop-color="#1bd5d3"/><stop offset="0.6553" stop-color="#1cd8d5"/><stop offset="0.6812" stop-color="#1cdad8"/><stop offset="0.7072" stop-color="#23e8e5"/><stop offset="0.7331" stop-color="#24ebe7"/><stop offset="0.7591" stop-color="#21e4e1"/><stop offset="0.7786" stop-color="#1ededb"/><stop offset="0.7851" stop-color="#1dddda"/><stop offset="0.811" stop-color="#1cd8d5"/><stop offset="0.837" stop-color="#1ad4d1"/><stop offset="0.8499" stop-color="#1ad2d0"/><stop offset="0.8629" stop-color="#19cfcd"/><stop offset="0.8889" stop-color="#18cccb"/><stop offset="0.9148" stop-color="#18ccca"/><stop offset="0.9207" stop-color="#18cbc9"/><stop offset="0.9408" stop-color="#18cac8"/><stop offset="0.9609" stop-color="#17c8c6"/><stop offset="0.9667" stop-color="#17c8c6"/><stop offset="0.9862" stop-color="#16c6c5"/><stop offset="1" stop-color="#15c3c2"/></linearGradient>
<linearGradient id="g39" gradientUnits="userSpaceOnUse" x1="250" x2="1791.3"><stop offset="0" stop-color="#27ece8"/><stop offset="0.0039" stop-color="#2df5ef"/><stop offset="0.0078" stop-color="#34fef7"/><stop offset="0.0117" stop-color="#34fef7"/><stop offset="0.0162" stop-color="#35fff8"/><stop offset="0.0247" stop-color="#35fff8"/><stop offset="0.026" stop-color="#35fff8"/><stop offset="0.0487" stop-color="#32faf4"/><stop offset="0.059" stop-color="#29ebe6"/><stop offset="0.0811" stop-color="#1edad7"/><stop offset="0.0921" stop-color="#1ad2d1"/><stop offset="0.1103" stop-color="#19d1cf"/><stop offset="0.1174" stop-color="#19d1cf"/><stop offset="0.1362" stop-color="#18d0cf"/><stop offset="0.146" stop-color="#18d0ce"/><stop offset="0.1622" stop-color="#17cfce"/><stop offset="0.1882" stop-color="#18d0cf"/><stop offset="0.1946" stop-color="#18d0cf"/><stop offset="0.2141" stop-color="#18cfce"/><stop offset="0.2401" stop-color="#18cfce"/><stop offset="0.266" stop-color="#0eb3b1"/><stop offset="0.292" stop-color="#0baaa7"/><stop offset="0.3179" stop-color="#08a29f"/><stop offset="0.3439" stop-color="#069d9a"/><stop offset="0.3698" stop-color="#079f9c"/><stop offset="0.3893" stop-color="#07a09d"/><stop offset="0.3958" stop-color="#0baaa8"/><stop offset="0.4217" stop-color="#10bbba"/><stop offset="0.4379" stop-color="#11bebd"/><stop offset="0.4477" stop-color="#13c3c2"/><stop offset="0.4736" stop-color="#14c7c6"/><stop offset="0.4866" stop-color="#14c7c6"/><stop offset="0.4996" stop-color="#15c8c7"/><stop offset="0.5255" stop-color="#17cccb"/><stop offset="0.5515" stop-color="#1ad2d1"/><stop offset="0.5774" stop-color="#1fdcd9"/><stop offset="0.5839" stop-color="#21dfdc"/><stop offset="0.6034" stop-color="#22e2de"/><stop offset="0.6293" stop-color="#23e4e1"/><stop offset="0.6553" stop-color="#23e6e3"/><stop offset="0.6812" stop-color="#23e8e4"/><stop offset="0.7072" stop-color="#26efeb"/><stop offset="0.7331" stop-color="#23e9e6"/><stop offset="0.7591" stop-color="#1fe0dd"/><stop offset="0.7786" stop-color="#1cdad8"/><stop offset="0.7851" stop-color="#1cd9d6"/><stop offset="0.811" stop-color="#1bd5d2"/><stop offset="0.837" stop-color="#1ad1cf"/><stop offset="0.8499" stop-color="#19d0ce"/><stop offset="0.8629" stop-color="#19cecc"/><stop offset="0.8889" stop-color="#18ccca"/><stop offset="0.9148" stop-color="#18cbc9"/><stop offset="0.9207" stop-color="#18cbc9"/><stop offset="0.9408" stop-color="#18c9c8"/><stop offset="0.9609" stop-color="#17c8c6"/><stop offset="0.9667" stop-color="#17c7c6"/><stop offset="0.9862" stop-color="#16c6c5"/><stop offset="1" stop-color="#15c3c2"/></linearGradient>
<linearGradient id="g40" gradientUnits="userSpaceOnUse" x1="250" x2="1791.3"><stop offset="0" stop-color="#27ece8"/><stop offset="0.0039" stop-color="#2df5ef"/><stop offset="0.0078" stop-color="#34fdf6"/><stop offset="0.0117" stop-color="#34fef7"/><stop offset="0.0162" stop-color="#34fff8"/><stop offset="0.0247" stop-color="#34fef8"/><stop offset="0.026" stop-color="#34fef8"/><stop offset="0.0487" stop-color="#34fef7"/><stop offset="0.059" stop-color="#2df3ed"/><stop offset="0.0811" stop-color="#23e2df"/><stop offset="0.0921" stop-color="#1ddad7"/><stop offset="0.1103" stop-color="#1dd9d6"/><stop offset="0.1174" stop-color="#1dd9d6"/><stop offset="0.1362" stop-color="#1cd8d6"/><stop offset="0.146" stop-color="#1bd8d6"/><stop offset="0.1622" stop-color="#1bd6d4"/><stop offset="0.1882" stop-color="#1ad5d3"/><stop offset="0.1946" stop-color="#1ad4d3"/><stop offset="0.2141" stop-color="#19d2d1"/><stop offset="0.2401" stop-color="#19d1d0"/><stop offset="0.266" stop-color="#19d1d0"/><stop offset="0.292" stop-color="#19d1d0"/><stop offset="0.3179" stop-color="#19d1d0"/><stop offset="0.3439" stop-color="#19d1d0"/><stop offset="0.3698" stop-color="#18cecd"/><stop offset="0.3893" stop-color="#17cdcc"/><stop offset="0.3958" stop-color="#16cbca"/><stop offset="0.4217" stop-color="#14c6c5"/><stop offset="0.4379" stop-color="#13c5c4"/><stop offset="0.4477" stop-color="#14c6c5"/><stop offset="0.4736" stop-color="#15c9c8"/><stop offset="0.4866" stop-color="#17cdcc"/><stop offset="0.4996" stop-color="#18d0ce"/><stop offset="0.5255" stop-color="#1cd8d5"/><stop offset="0.5515" stop-color="#23e3df"/><stop offset="0.5774" stop-color="#2befea"/><stop offset="0.5839" stop-color="#2df2ed"/><stop offset="0.6034" stop-color="#2cf3ed"/><stop offset="0.6293" stop-color="#2cf3ee"/><stop offset="0.6553" stop-color="#2af3ee"/><stop offset="0.6812" stop-color="#28f2ed"/><stop offset="0.7072" stop-color="#26efea"/><stop offset="0.7331" stop-color="#21e5e1"/><stop offset="0.7591" stop-color="#1ddbd9"/><stop offset="0.7786" stop-color="#1bd5d4"/><stop offset="0.7851" stop-color="#1bd5d3"/><stop offset="0.811" stop-color="#1ad2d0"/><stop offset="0.837" stop-color="#19cfce"/><stop offset="0.8499" stop-color="#19cecd"/><stop offset="0.8629" stop-color="#19cdcb"/><stop offset="0.8889" stop-color="#18ccca"/><stop offset="0.9148" stop-color="#18cbc9"/><stop offset="0.9207" stop-color="#18cbc9"/><stop offset="0.9408" stop-color="#17c9c7"/><stop offset="0.9609" stop-color="#17c8c6"/><stop offset="0.9667" stop-color="#17c7c5"/><stop offset="0.9862" stop-color="#16c6c4"/><stop offset="1" stop-color="#15c3c2"/></linearGradient>
<linearGradient id="g41" gradientUnits="userSpaceOnUse" x1="250" x2="1791.3"><stop offset="0" stop-color="#27ece8"/><stop offset="0.0039" stop-color="#2df4ee"/><stop offset="0.0078" stop-color="#33fdf6"/><stop offset="0.0117" stop-color="#34fdf6"/><stop offset="0.0162" stop-color="#34fef7"/><stop offset="0.0247" stop-color="#34fef7"/><stop offset="0.026" stop-color="#34fef7"/><stop offset="0.0487" stop-color="#35fff8"/><stop offset="0.059" stop-color="#31f9f3"/><stop offset="0.0811" stop-color="#28ebe6"/><stop offset="0.0921" stop-color="#22e2df"/><stop offset="0.1103" stop-color="#23e2df"/><stop offset="0.1174" stop-color="#23e3df"/><stop offset="0.1362" stop-color="#22e3df"/><stop offset="0.146" stop-color="#22e3e0"/><stop offset="0.1622" stop-color="#21e1de"/><stop offset="0.1882" stop-color="#1fdedb"/><stop offset="0.1946" stop-color="#1fdddb"/><stop offset="0.2141" stop-color="#1bd7d6"/><stop offset="0.2401" stop-color="#1ad4d2"/><stop offset="0.266" stop-color="#1ad2d1"/><stop offset="0.292" stop-color="#19d2d1"/><stop offset="0.3179" stop-color="#19d2d1"/><stop offset="0.3439" stop-color="#19d1d0"/><stop offset="0.3698" stop-color="#18cfce"/><stop offset="0.3893" stop-color="#17cecd"/><stop offset="0.3958" stop-color="#17cdcc"/><stop offset="0.4217" stop-color="#15c9c8"/><stop offset="0.4379" stop-color="#14c7c6"/><stop offset="0.4477" stop-color="#15c8c7"/><stop offset="0.4736" stop-color="#19d1d0"/><stop offset="0.4866" stop-color="#1cd8d6"/><stop offset="0.4996" stop-color="#1fddda"/><stop offset="0.5255" stop-color="#27e9e5"/><stop offset="0.5515" stop-color="#2ef5ef"/><stop offset="0.5774" stop-color="#34fdf6"/><stop offset="0.5839" stop-color="#34fef7"/><stop offset="0.6034" stop-color="#33fdf6"/><stop offset="0.6293" stop-color="#30faf4"/><stop offset="0.6553" stop-color="#2cf7f2"/><stop offset="0.6812" stop-color="#29f4ef"/><stop offset="0.7072" stop-color="#24eae6"/><stop offset="0.7331" stop-color="#1fdedc"/><stop offset="0.7591" stop-color="#1bd6d4"/><stop offset="0.7786" stop-color="#1ad2d0"/><stop offset="0.7851" stop-color="#19d1d0"/><stop offset="0.811" stop-color="#19cfce"/><stop offset="0.837" stop-color="#19cecc"/><stop offset="0.8499" stop-color="#19cdcc"/><stop offset="0.8629" stop-color="#18cccb"/><stop offset="0.8889" stop-color="#18cbca"/><stop offset="0.9148" stop-color="#18cbc9"/><stop offset="0.9207" stop-color="#18cac9"/><stop offset="0.9408" stop-color="#17c9c7"/><stop offset="0.9609" stop-color="#17c7c6"/><stop offset="0.9667" stop-color="#17c7c5"/><stop offset="0.9862" stop-color="#16c6c4"/><stop offset="1" stop-color="#15c3c2"/></linearGradient>
<linearGradient id="g42" gradientUnits="userSpaceOnUse" x1="250" x2="1791.3"><stop offset="0" stop-color="#27ece8"/><stop offset="0.0039" stop-color="#2df4ee"/><stop offset="0.0078" stop-color="#33fcf5"/><stop offset="0.0117" stop-color="#33fdf6"/><stop offset="0.0162" stop-color="#33fef7"/><stop offset="0.0247" stop-color="#33fdf6"/><stop offset="0.026" stop-color="#33fdf6"/><stop offset="0.0487" stop-color="#35fff8"/><stop offset="0.059" stop-color="#34fdf7"/><stop offset="0.0811" stop-color="#2df3ee"/><stop offset="0.0921" stop-color="#28ebe7"/><stop offset="0.1103" stop-color="#29ede8"/><stop offset="0.1174" stop-color="#2aeee9"/><stop offset="0.1362" stop-color="#2aefea"/><stop offset="0.146" stop-color="#2bf0eb"/><stop offset="0.1622" stop-color="#29eee9"/><stop offset="0.1882" stop-color="#27eae6"/><stop offset="0.1946" stop-color="#26e9e6"/><stop offset="0.2141" stop-color="#21e1de"/><stop offset="0.2401" stop-color="#1cd9d7"/><stop offset="0.266" stop-color="#1bd5d4"/><stop offset="0.292" stop-color="#1ad5d4"/><stop offset="0.3179" stop-color="#1ad4d3"/><stop offset="0.3439" stop-color="#1ad4d3"/><stop offset="0.3698" stop-color="#19d2d1"/><stop offset="0.3893" stop-color="#18d0cf"/><stop offset="0.3958" stop-color="#18d0cf"/><stop offset="0.4217" stop-color="#17cdcc"/><stop offset="0.4379" stop-color="#17cccb"/><stop offset="0.4477" stop-color="#19d1cf"/><stop offset="0.4736" stop-color="#21e0dd"/><stop offset="0.4866" stop-color="#26e9e5"/><stop offset="0.4996" stop-color="#2aefea"/><stop offset="0.5255" stop-color="#31f9f3"/><stop offset="0.5515" stop-color="#35fff8"/><stop offset="0.5774" stop-color="#34fef8"/><stop offset="0.5839" stop-color="#34fdf7"/><stop offset="0.6034" stop-color="#31faf4"/><stop offset="0.6293" stop-color="#2df6f1"/><stop offset="0.6553" stop-color="#2af3ee"/><stop offset="0.6812" stop-color="#26efeb"/><stop offset="0.7072" stop-color="#20e2df"/><stop offset="0.7331" stop-color="#1cd8d6"/><stop offset="0.7591" stop-color="#1ad2d0"/><stop offset="0.7786" stop-color="#19cfce"/><stop offset="0.7851" stop-color="#19cfcd"/><stop offset="0.811" stop-color="#19cecc"/><stop offset="0.837" stop-color="#18cdcc"/><stop offset="0.8499" stop-color="#18cdcb"/><stop offset="0.8629" stop-color="#18cccb"/><stop offset="0.8889" stop-color="#18cbc9"/><stop offset="0.9148" stop-color="#18cac8"/><stop offset="0.9207" stop-color="#18cac8"/><stop offset="0.9408" stop-color="#17c8c7"/><stop offset="0.9609" stop-color="#17c7c5"/><stop offset="0.9667" stop-color="#17c6c5"/><stop offset="0.9862" stop-color="#16c5c4"/><stop offset="1" stop-color="#15c3c2"/></linearGradient>
<linearGradient id="g43" gradientUnits="userSpaceOnUse" x1="250" x2="1791.3"><stop offset="0" stop-color="#27ece8"/><stop offset="0.0039" stop-color="#2df4ee"/><stop offset="0.0078" stop-color="#32fbf4"/><stop offset="0.0117" stop-color="#32fcf5"/><stop offset="0.0162" stop-color="#33fdf6"/><stop offset="0.0247" stop-color="#32fcf6"/><stop offset="0.026" stop-color="#32fcf5"/><stop offset="0.0487" stop-color="#34fff8"/><stop offset="0.059" stop-color="#35fff8"/><stop offset="0.0811" stop-color="#32faf4"/><stop offset="0.0921" stop-color="#2df3ee"/><stop offset="0.1103" stop-color="#2ff6f0"/><stop offset="0.1174" stop-color="#30f7f2"/><stop offset="0.1362" stop-color="#31faf3"/><stop offset="0.146" stop-color="#32fbf5"/><stop offset="0.1622" stop-color="#31faf3"/><stop offset="0.1882" stop-color="#30f7f1"/><stop offset="0.1946" stop-color="#2ff6f1"/><stop offset="0.2141" stop-color="#29ede9"/><stop offset="0.2401" stop-color="#21e1df"/><stop offset="0.266" stop-color="#1ddad9"/><stop offset="0.292" stop-color="#1cd9d8"/><stop offset="0.3179" stop-color="#1cd8d7"/><stop offset="0.3439" stop-color="#1cd8d7"/><stop offset="0.3698" stop-color="#1bd6d5"/><stop offset="0.3893" stop-color="#1ad5d4"/><stop offset="0.3958" stop-color="#1ad5d4"/><stop offset="0.4217" stop-color="#1bd7d5"/><stop offset="0.4379" stop-color="#1edad7"/><stop offset="0.4477" stop-color="#21e0dd"/><stop offset="0.4736" stop-color="#2cf2ed"/><stop offset="0.4866" stop-color="#31f9f3"/><stop offset="0.4996" stop-color="#34fdf6"/><stop offset="0.5255" stop-color="#35fff8"/><stop offset="0.5515" stop-color="#33fcf6"/><stop offset="0.5774" stop-color="#2ef5f0"/><stop offset="0.5839" stop-color="#2df3ee"/><stop offset="0.6034" stop-color="#2af0eb"/><stop offset="0.6293" stop-color="#27ece8"/><stop offset="0.6553" stop-color="#24e9e5"/><stop offset="0.6812" stop-color="#22e5e2"/><stop offset="0.7072" stop-color="#1ddad8"/><stop offset="0.7331" stop-color="#1ad3d2"/><stop offset="0.7591" stop-color="#19cfce"/><stop offset="0.7786" stop-color="#18cdcc"/><stop offset="0.7851" stop-color="#18cdcc"/><stop offset="0.811" stop-color="#18cdcc"/><stop offset="0.837" stop-color="#18cccb"/><stop offset="0.8499" stop-color="#18cccb"/><stop offset="0.8629" stop-color="#18ccca"/><stop offset="0.8889" stop-color="#18cbc9"/><stop offset="0.9148" stop-color="#17cac8"/><stop offset="0.9207" stop-color="#17cac8"/><stop offset="0.9408" stop-color="#17c8c6"/><stop offset="0.9609" stop-color="#17c7c5"/><stop offset="0.9667" stop-color="#16c6c5"/><stop offset="0.9862" stop-color="#16c5c4"/><stop offset="1" stop-color="#15c3c2"/></linearGradient>
<linearGradient id="g44" gradientUnits="userSpaceOnUse" x1="250" x2="1791.3"><stop offset="0" stop-color="#27ece8"/><stop offset="0.0039" stop-color="#2cf4ee"/><stop offset="0.0078" stop-color="#32fbf4"/><stop offset="0.0117" stop-color="#32fbf5"/><stop offset="0.0162" stop-color="#32fcf6"/><stop offset="0.0247" stop-color="#31fbf5"/><stop offset="0.026" stop-color="#31fbf5"/><stop offset="0.0487" stop-color="#33fdf7"/><stop offset="0.059" stop-color="#35fff8"/><stop offset="0.0811" stop-color="#34fef7"/><stop offset="0.0921" stop-color="#32faf4"/><stop offset="0.1103" stop-color="#34fdf6"/><stop offset="0.1174" stop-color="#34fef7"/><stop offset="0.1362" stop-color="#35fff8"/><stop offset="0.146" stop-color="#35fff8"/><stop offset="0.1622" stop-color="#35fff8"/><stop offset="0.1882" stop-color="#35fff8"/><stop offset="0.1946" stop-color="#35fff8"/><stop offset="0.2141" stop-color="#31f9f3"/><stop offset="0.2401" stop-color="#29ede9"/><stop offset="0.266" stop-color="#22e2e0"/><stop offset="0.292" stop-color="#21e1df"/><stop offset="0.3179" stop-color="#20dfde"/><stop offset="0.3439" stop-color="#1fdedd"/><stop offset="0.3698" stop-color="#1edddb"/><stop offset="0.3893" stop-color="#1edcdb"/><stop offset="0.3958" stop-color="#1fdddc"/><stop offset="0.4217" stop-color="#24e5e2"/><stop offset="0.4379" stop-color="#29ede8"/><stop offset="0.4477" stop-color="#2df3ee"/><stop offset="0.4736" stop-color="#35fef8"/><stop offset="0.4866" stop-color="#35fff8"/><stop offset="0.4996" stop-color="#34fef8"/><stop offset="0.5255" stop-color="#30f9f3"/><stop offset="0.5515" stop-color="#2bf0ec"/><stop offset="0.5774" stop-color="#26e8e5"/><stop offset="0.5839" stop-color="#24e6e3"/><stop offset="0.6034" stop-color="#23e4e1"/><stop offset="0.6293" stop-color="#21e1de"/><stop offset="0.6553" stop-color="#1fdedc"/><stop offset="0.6812" stop-color="#1edcda"/><stop offset="0.7072" stop-color="#1bd4d3"/><stop offset="0.7331" stop-color="#19d0cf"/><stop offset="0.7591" stop-color="#18cecd"/><stop offset="0.7786" stop-color="#18cdcc"/><stop offset="0.7851" stop-color="#18cdcc"/><stop offset="0.811" stop-color="#18cccb"/><stop offset="0.837" stop-color="#18cccb"/><stop offset="0.8499" stop-color="#18ccca"/><stop offset="0.8629" stop-color="#18cbca"/><stop offset="0.8889" stop-color="#18cac9"/><stop offset="0.9148" stop-color="#17c9c7"/><stop offset="0.9207" stop-color="#17c9c7"/><stop offset="0.9408" stop-color="#17c7c6"/><stop offset="0.9609" stop-color="#17c6c5"/><stop offset="0.9667" stop-color="#16c6c4"/><stop offset="0.9862" stop-color="#16c5c3"/><stop offset="1" stop-color="#15c3c2"/></linearGradient>
<linearGradient id="g45" gradientUnits="userSpaceOnUse" x1="250" x2="1791.3"><stop offset="0" stop-color="#27ece8"/><stop offset="0.0039" stop-color="#2cf3ed"/><stop offset="0.0078" stop-color="#31faf3"/><stop offset="0.0117" stop-color="#31fbf4"/><stop offset="0.0162" stop-color="#32fcf5"/><stop offset="0.0247" stop-color="#30faf4"/><stop offset="0.026" stop-color="#30faf4"/><stop offset="0.0487" stop-color="#32fbf5"/><stop offset="0.059" stop-color="#34fef7"/><stop offset="0.0811" stop-color="#35fff8"/><stop offset="0.0921" stop-color="#35fff8"/><stop offset="0.1103" stop-color="#35fff8"/><stop offset="0.1174" stop-color="#35fff8"/><stop offset="0.1362" stop-color="#34fef7"/><stop offset="0.146" stop-color="#33fcf6"/><stop offset="0.1622" stop-color="#33fdf6"/><stop offset="0.1882" stop-color="#34fef7"/><stop offset="0.1946" stop-color="#34fef7"/><stop offset="0.2141" stop-color="#35fff8"/><stop offset="0.2401" stop-color="#31faf4"/><stop offset="0.266" stop-color="#29eeea"/><stop offset="0.292" stop-color="#28ece8"/><stop offset="0.3179" stop-color="#27eae7"/><stop offset="0.3439" stop-color="#26e9e6"/><stop offset="0.3698" stop-color="#25e8e5"/><stop offset="0.3893" stop-color="#25e7e4"/><stop offset="0.3958" stop-color="#27eae6"/><stop offset="0.4217" stop-color="#2ff6f0"/><stop offset="0.4379" stop-color="#33fdf6"/><stop offset="0.4477" stop-color="#35fff8"/><stop offset="0.4736" stop-color="#33fdf6"/><stop offset="0.4866" stop-color="#30f9f3"/><stop offset="0.4996" stop-color="#2ef5f0"/><stop offset="0.5255" stop-color="#28ece8"/><stop offset="0.5515" stop-color="#23e4e2"/><stop offset="0.5774" stop-color="#1fdedc"/><stop offset="0.5839" stop-color="#1fdcdb"/><stop offset="0.6034" stop-color="#1edbd9"/><stop offset="0.6293" stop-color="#1dd9d7"/><stop offset="0.6553" stop-color="#1cd7d6"/><stop offset="0.6812" stop-color="#1bd6d4"/><stop offset="0.7072" stop-color="#19d1d0"/><stop offset="0.7331" stop-color="#19cfce"/><stop offset="0.7591" stop-color="#18cdcc"/><stop offset="0.7786" stop-color="#18cccb"/><stop offset="0.7851" stop-color="#18cccb"/><stop offset="0.811" stop-color="#18cccb"/><stop offset="0.837" stop-color="#18cbca"/><stop offset="0.8499" stop-color="#18cbca"/><stop offset="0.8629" stop-color="#18cac9"/><stop offset="0.8889" stop-color="#17c9c8"/><stop offset="0.9148" stop-color="#17c9c7"/><stop offset="0.9207" stop-color="#17c8c7"/><stop offset="0.9408" stop-color="#17c7c5"/><stop offset="0.9609" stop-color="#16c6c4"/><stop offset="0.9667" stop-color="#16c5c4"/><stop offset="0.9862" stop-color="#16c5c3"/><stop offset="1" stop-color="#15c3c2"/></linearGradient>
<linearGradient id="g46" gradientUnits="userSpaceOnUse" x1="250" x2="1791.3"><stop offset="0" stop-color="#27ece8"/><stop offset="0.0039" stop-color="#2cf3ed"/><stop offset="0.0078" stop-color="#31f9f3"/><stop offset="0.0117" stop-color="#31faf4"/><stop offset="0.0162" stop-color="#31fbf5"/><stop offset="0.0247" stop-color="#30f9f3"/><stop offset="0.026" stop-color="#2ff9f3"/><stop offset="0.0487" stop-color="#30faf4"/><stop offset="0.059" stop-color="#33fcf6"/><stop offset="0.0811" stop-color="#34fff8"/><stop offset="0.0921" stop-color="#35fff8"/><stop offset="0.1103" stop-color="#34fef7"/><stop offset="0.1174" stop-color="#33fdf6"/><stop offset="0.1362" stop-color="#30f8f2"/><stop offset="0.146" stop-color="#2df5f0"/><stop offset="0.1622" stop-color="#2ef5f0"/><stop offset="0.1882" stop-color="#2ef6f0"/><stop offset="0.1946" stop-color="#2ef6f1"/><stop offset="0.2141" stop-color="#33fcf6"/><stop offset="0.2401" stop-color="#35fff8"/><stop offset="0.266" stop-color="#31faf4"/><stop offset="0.292" stop-color="#30f9f3"/><stop offset="0.3179" stop-color="#2ff7f2"/><stop offset="0.3439" stop-color="#2ef6f1"/><stop offset="0.3698" stop-color="#2ef6f0"/><stop offset="0.3893" stop-color="#2ef5f0"/><stop offset="0.3958" stop-color="#30f8f2"/><stop offset="0.4217" stop-color="#35fff8"/><stop offset="0.4379" stop-color="#34fef8"/><stop offset="0.4477" stop-color="#33fcf6"/><stop offset="0.4736" stop-color="#2cf2ed"/><stop offset="0.4866" stop-color="#28ece9"/><stop offset="0.4996" stop-color="#25e8e5"/><stop offset="0.5255" stop-color="#21e1e0"/><stop offset="0.5515" stop-color="#1fdcdb"/><stop offset="0.5774" stop-color="#1cd8d7"/><stop offset="0.5839" stop-color="#1cd7d6"/><stop offset="0.6034" stop-color="#1bd6d5"/><stop offset="0.6293" stop-color="#1bd5d3"/><stop offset="0.6553" stop-color="#1ad3d2"/><stop offset="0.6812" stop-color="#1ad2d1"/><stop offset="0.7072" stop-color="#19d0cf"/><stop offset="0.7331" stop-color="#18cecd"/><stop offset="0.7591" stop-color="#18cdcc"/><stop offset="0.7786" stop-color="#18cccb"/><stop offset="0.7851" stop-color="#18cccb"/><stop offset="0.811" stop-color="#18cbca"/><stop offset="0.837" stop-color="#18cbca"/><stop offset="0.8499" stop-color="#18cac9"/><stop offset="0.8629" stop-color="#17cac9"/><stop offset="0.8889" stop-color="#17c9c7"/><stop offset="0.9148" stop-color="#17c8c6"/><stop offset="0.9207" stop-color="#17c8c6"/><stop offset="0.9408" stop-color="#17c7c5"/><stop offset="0.9609" stop-color="#16c5c4"/><stop offset="0.9667" stop-color="#16c5c4"/><stop offset="0.9862" stop-color="#16c4c3"/><stop offset="1" stop-color="#15c3c2"/></linearGradient>
<linearGradient id="g47" gradientUnits="userSpaceOnUse" x1="250" x2="1791.3"><stop offset="0" stop-color="#27ece8"/><stop offset="0.0039" stop-color="#2cf3ed"/><stop offset="0.0078" stop-color="#30f9f2"/><stop offset="0.0117" stop-color="#30faf3"/><stop offset="0.0162" stop-color="#31fbf4"/><stop offset="0.0247" stop-color="#2ff8f2"/><stop offset="0.026" stop-color="#2ef8f2"/><stop offset="0.0487" stop-color="#2ff8f2"/><stop offset="0.059" stop-color="#31faf4"/><stop offset="0.0811" stop-color="#33fcf6"/><stop offset="0.0921" stop-color="#34fef7"/><stop offset="0.1103" stop-color="#31faf4"/><stop offset="0.1174" stop-color="#2ff7f2"/><stop offset="0.1362" stop-color="#2af0ec"/><stop offset="0.146" stop-color="#27ece9"/><stop offset="0.1622" stop-color="#27ece8"/><stop offset="0.1882" stop-color="#27ece8"/><stop offset="0.1946" stop-color="#27ece8"/><stop offset="0.2141" stop-color="#2cf2ee"/><stop offset="0.2401" stop-color="#32fbf5"/><stop offset="0.266" stop-color="#35fff8"/><stop offset="0.292" stop-color="#35fff8"/><stop offset="0.3179" stop-color="#35fff8"/><stop offset="0.3439" stop-color="#35fff8"/><stop offset="0.3698" stop-color="#35fff8"/><stop offset="0.3893" stop-color="#35fff8"/><stop offset="0.3958" stop-color="#35fff8"/><stop offset="0.4217" stop-color="#32fbf5"/><stop offset="0.4379" stop-color="#2ef5f0"/><stop offset="0.4477" stop-color="#2bf0ec"/><stop offset="0.4736" stop-color="#24e6e4"/><stop offset="0.4866" stop-color="#22e2e0"/><stop offset="0.4996" stop-color="#20e0de"/><stop offset="0.5255" stop-color="#1edbda"/><stop offset="0.5515" stop-color="#1cd8d7"/><stop offset="0.5774" stop-color="#1bd5d4"/><stop offset="0.5839" stop-color="#1bd5d4"/><stop offset="0.6034" stop-color="#1bd4d3"/><stop offset="0.6293" stop-color="#1ad3d2"/><stop offset="0.6553" stop-color="#1ad2d1"/><stop offset="0.6812" stop-color="#19d1d0"/><stop offset="0.7072" stop-color="#19cfce"/><stop offset="0.7331" stop-color="#18cecd"/><stop offset="0.7591" stop-color="#18cdcc"/><stop offset="0.7786" stop-color="#18cccb"/><stop offset="0.7851" stop-color="#18cbca"/><stop offset="0.811" stop-color="#18cbca"/><stop offset="0.837" stop-color="#17cac9"/><stop offset="0.8499" stop-color="#17cac9"/><stop offset="0.8629" stop-color="#17c9c8"/><stop offset="0.8889" stop-color="#17c8c7"/><stop offset="0.9148" stop-color="#17c7c6"/><stop offset="0.9207" stop-color="#17c7c6"/><stop offset="0.9408" stop-color="#16c6c5"/><stop offset="0.9609" stop-color="#16c5c4"/><stop offset="0.9667" stop-color="#16c5c3"/><stop offset="0.9862" stop-color="#16c4c3"/><stop offset="1" stop-color="#15c3c2"/></linearGradient>
<linearGradient id="g48" gradientUnits="userSpaceOnUse" x1="250" x2="1791.3"><stop offset="0" stop-color="#27ece7"/><stop offset="0.0039" stop-color="#2cf3ed"/><stop offset="0.0078" stop-color="#30f9f2"/><stop offset="0.0117" stop-color="#30f9f3"/><stop offset="0.0162" stop-color="#30faf4"/><stop offset="0.0247" stop-color="#2ef7f1"/><stop offset="0.026" stop-color="#2ef7f1"/><stop offset="0.0487" stop-color="#2df6f0"/><stop offset="0.059" stop-color="#2ff8f2"/><stop offset="0.0811" stop-color="#30f9f3"/><stop offset="0.0921" stop-color="#31fbf4"/><stop offset="0.1103" stop-color="#2df4ef"/><stop offset="0.1174" stop-color="#2af0ec"/><stop offset="0.1362" stop-color="#25e9e6"/><stop offset="0.146" stop-color="#23e5e3"/><stop offset="0.1622" stop-color="#22e5e3"/><stop offset="0.1882" stop-color="#22e4e2"/><stop offset="0.1946" stop-color="#22e4e2"/><stop offset="0.2141" stop-color="#25e8e5"/><stop offset="0.2401" stop-color="#2bf1ec"/><stop offset="0.266" stop-color="#32fbf4"/><stop offset="0.292" stop-color="#32fbf5"/><stop offset="0.3179" stop-color="#33fcf6"/><stop offset="0.3439" stop-color="#33fdf6"/><stop offset="0.3698" stop-color="#33fdf6"/><stop offset="0.3893" stop-color="#33fdf6"/><stop offset="0.3958" stop-color="#32fbf4"/><stop offset="0.4217" stop-color="#2aefeb"/><stop offset="0.4379" stop-color="#26e8e6"/><stop offset="0.4477" stop-color="#23e5e3"/><stop offset="0.4736" stop-color="#20dfdd"/><stop offset="0.4866" stop-color="#1fdddb"/><stop offset="0.4996" stop-color="#1edbda"/><stop offset="0.5255" stop-color="#1dd8d7"/><stop offset="0.5515" stop-color="#1cd6d5"/><stop offset="0.5774" stop-color="#1bd5d4"/><stop offset="0.5839" stop-color="#1bd4d3"/><stop offset="0.6034" stop-color="#1bd4d3"/><stop offset="0.6293" stop-color="#1ad3d2"/><stop offset="0.6553" stop-color="#19d1d0"/><stop offset="0.6812" stop-color="#19d0cf"/><stop offset="0.7072" stop-color="#19cfce"/><stop offset="0.7331" stop-color="#18cdcc"/><stop offset="0.7591" stop-color="#18cccb"/><stop offset="0.7786" stop-color="#18cbca"/><stop offset="0.7851" stop-color="#18cbca"/><stop offset="0.811" stop-color="#17cac9"/><stop offset="0.837" stop-color="#17c9c8"/><stop offset="0.8499" stop-color="#17c9c8"/><stop offset="0.8629" stop-color="#17c8c7"/><stop offset="0.8889" stop-color="#17c8c6"/><stop offset="0.9148" stop-color="#16c7c5"/><stop offset="0.9207" stop-color="#16c7c5"/><stop offset="0.9408" stop-color="#16c6c4"/><stop offset="0.9609" stop-color="#16c5c3"/><stop offset="0.9667" stop-color="#16c5c3"/><stop offset="0.9862" stop-color="#15c4c3"/><stop offset="1" stop-color="#15c3c2"/></linearGradient>
<linearGradient id="g49" gradientUnits="userSpaceOnUse" x1="250" x2="1791.3"><stop offset="0" stop-color="#27ece8"/><stop offset="0.0039" stop-color="#2cf3ed"/><stop offset="0.0078" stop-color="#30f8f2"/><stop offset="0.0117" stop-color="#2ff8f2"/><stop offset="0.0162" stop-color="#2ff9f3"/><stop offset="0.0247" stop-color="#2df6f0"/><stop offset="0.026" stop-color="#2df6f0"/><stop offset="0.0487" stop-color="#2bf4ef"/><stop offset="0.059" stop-color="#2df5f0"/><stop offset="0.0811" stop-color="#2df5f0"/><stop offset="0.0921" stop-color="#2ef7f1"/><stop offset="0.1103" stop-color="#29eeea"/><stop offset="0.1174" stop-color="#26eae7"/><stop offset="0.1362" stop-color="#22e4e2"/><stop offset="0.146" stop-color="#20e1e0"/><stop offset="0.1622" stop-color="#20e0df"/><stop offset="0.1882" stop-color="#1fdfde"/><stop offset="0.1946" stop-color="#1fdfdd"/><stop offset="0.2141" stop-color="#21e1df"/><stop offset="0.2401" stop-color="#24e6e4"/><stop offset="0.266" stop-color="#2aefeb"/><stop offset="0.292" stop-color="#2bf0ec"/><stop offset="0.3179" stop-color="#2bf1ec"/><stop offset="0.3439" stop-color="#2cf2ed"/><stop offset="0.3698" stop-color="#2cf1ed"/><stop offset="0.3893" stop-color="#2cf1ed"/><stop offset="0.3958" stop-color="#2aeeea"/><stop offset="0.4217" stop-color="#23e4e2"/><stop offset="0.4379" stop-color="#20e0df"/><stop offset="0.4477" stop-color="#1fdedd"/><stop offset="0.4736" stop-color="#1edbda"/><stop offset="0.4866" stop-color="#1edad9"/><stop offset="0.4996" stop-color="#1dd9d8"/><stop offset="0.5255" stop-color="#1cd7d6"/><stop offset="0.5515" stop-color="#1cd6d5"/><stop offset="0.5774" stop-color="#1bd4d3"/><stop offset="0.5839" stop-color="#1bd4d3"/><stop offset="0.6034" stop-color="#1ad3d2"/><stop offset="0.6293" stop-color="#1ad2d1"/><stop offset="0.6553" stop-color="#19d1d0"/><stop offset="0.6812" stop-color="#19d0cf"/><stop offset="0.7072" stop-color="#18cecd"/><stop offset="0.7331" stop-color="#18cdcc"/><stop offset="0.7591" stop-color="#18cbca"/><stop offset="0.7786" stop-color="#17cac9"/><stop offset="0.7851" stop-color="#17cac9"/><stop offset="0.811" stop-color="#17c9c8"/><stop offset="0.837" stop-color="#17c9c8"/><stop offset="0.8499" stop-color="#17c8c7"/><stop offset="0.8629" stop-color="#17c8c7"/><stop offset="0.8889" stop-color="#16c7c6"/><stop offset="0.9148" stop-color="#16c6c5"/><stop offset="0.9207" stop-color="#16c6c5"/><stop offset="0.9408" stop-color="#16c5c4"/><stop offset="0.9609" stop-color="#16c4c3"/><stop offset="0.9667" stop-color="#16c4c3"/><stop offset="0.9862" stop-color="#15c4c2"/><stop offset="1" stop-color="#15c3c2"/></linearGradient>
<linearGradient id="g50" gradientUnits="userSpaceOnUse" x1="250" x2="1791.3"><stop offset="0" stop-color="#27ece8"/><stop offset="0.0039" stop-color="#2cf3ed"/><stop offset="0.0078" stop-color="#2ff8f1"/><stop offset="0.0117" stop-color="#2ff8f1"/><stop offset="0.0162" stop-color="#2ef8f2"/><stop offset="0.0247" stop-color="#2cf5f0"/><stop offset="0.026" stop-color="#2cf5ef"/><stop offset="0.0487" stop-color="#2af2ee"/><stop offset="0.059" stop-color="#2bf3ef"/><stop offset="0.0811" stop-color="#2af2ed"/><stop offset="0.0921" stop-color="#2bf2ed"/><stop offset="0.1103" stop-color="#25e9e6"/><stop offset="0.1174" stop-color="#23e6e4"/><stop offset="0.1362" stop-color="#20e1e0"/><stop offset="0.146" stop-color="#1fdfde"/><stop offset="0.1622" stop-color="#1fdedd"/><stop offset="0.1882" stop-color="#1edddb"/><stop offset="0.1946" stop-color="#1edcdb"/><stop offset="0.2141" stop-color="#1edddc"/><stop offset="0.2401" stop-color="#20dfde"/><stop offset="0.266" stop-color="#23e4e2"/><stop offset="0.292" stop-color="#23e5e2"/><stop offset="0.3179" stop-color="#24e5e3"/><stop offset="0.3439" stop-color="#24e6e3"/><stop offset="0.3698" stop-color="#24e6e3"/><stop offset="0.3893" stop-color="#24e5e3"/><stop offset="0.3958" stop-color="#23e3e1"/><stop offset="0.4217" stop-color="#1fdedc"/><stop offset="0.4379" stop-color="#1edcdb"/><stop offset="0.4477" stop-color="#1edbda"/><stop offset="0.4736" stop-color="#1dd9d8"/><stop offset="0.4866" stop-color="#1dd9d8"/><stop offset="0.4996" stop-color="#1dd8d7"/><stop offset="0.5255" stop-color="#1cd7d6"/><stop offset="0.5515" stop-color="#1bd5d4"/><stop offset="0.5774" stop-color="#1bd4d3"/><stop offset="0.5839" stop-color="#1ad3d2"/><stop offset="0.6034" stop-color="#1ad2d1"/><stop offset="0.6293" stop-color="#1ad1d0"/><stop offset="0.6553" stop-color="#19d0cf"/><stop offset="0.6812" stop-color="#19cfce"/><stop offset="0.7072" stop-color="#18cdcc"/><stop offset="0.7331" stop-color="#18cccb"/><stop offset="0.7591" stop-color="#17caca"/><stop offset="0.7786" stop-color="#17cac9"/><stop offset="0.7851" stop-color="#17c9c8"/><stop offset="0.811" stop-color="#17c9c8"/><stop offset="0.837" stop-color="#17c8c7"/><stop offset="0.8499" stop-color="#17c7c6"/><stop offset="0.8629" stop-color="#16c7c6"/><stop offset="0.8889" stop-color="#16c6c5"/><stop offset="0.9148" stop-color="#16c6c4"/><stop offset="0.9207" stop-color="#16c6c4"/><stop offset="0.9408" stop-color="#16c5c3"/><stop offset="0.9609" stop-color="#16c4c3"/><stop offset="0.9667" stop-color="#16c4c3"/><stop offset="0.9862" stop-color="#15c3c2"/><stop offset="1" stop-color="#15c3c2"/></linearGradient>
<linearGradient id="g51" gradientUnits="userSpaceOnUse" x1="250" x2="1791.3"><stop offset="0" stop-color="#27ece8"/><stop offset="0.0039" stop-color="#2bf2ed"/><stop offset="0.0078" stop-color="#2ff7f1"/><stop offset="0.0117" stop-color="#2ef7f1"/><stop offset="0.0162" stop-color="#2ef7f1"/><stop offset="0.0247" stop-color="#2bf4ef"/><stop offset="0.026" stop-color="#2bf3ee"/><stop offset="0.0487" stop-color="#29f1ed"/><stop offset="0.059" stop-color="#29f1ed"/><stop offset="0.0811" stop-color="#28efeb"/><stop offset="0.0921" stop-color="#28efea"/><stop offset="0.1103" stop-color="#23e6e4"/><stop offset="0.1174" stop-color="#21e3e1"/><stop offset="0.1362" stop-color="#1fe0df"/><stop offset="0.146" stop-color="#1fdfde"/><stop offset="0.1622" stop-color="#1edddc"/><stop offset="0.1882" stop-color="#1ddbda"/><stop offset="0.1946" stop-color="#1ddbda"/><stop offset="0.2141" stop-color="#1edbda"/><stop offset="0.2401" stop-color="#1edbda"/><stop offset="0.266" stop-color="#1fdddc"/><stop offset="0.292" stop-color="#1fdddc"/><stop offset="0.3179" stop-color="#1fdedc"/><stop offset="0.3439" stop-color="#20dedd"/><stop offset="0.3698" stop-color="#20dedd"/><stop offset="0.3893" stop-color="#20dedd"/><stop offset="0.3958" stop-color="#1fdddc"/><stop offset="0.4217" stop-color="#1edad9"/><stop offset="0.4379" stop-color="#1dd9d8"/><stop offset="0.4477" stop-color="#1dd9d8"/><stop offset="0.4736" stop-color="#1dd9d8"/><stop offset="0.4866" stop-color="#1dd8d7"/><stop offset="0.4996" stop-color="#1dd8d7"/><stop offset="0.5255" stop-color="#1cd6d5"/><stop offset="0.5515" stop-color="#1bd4d3"/><stop offset="0.5774" stop-color="#1ad2d2"/><stop offset="0.5839" stop-color="#1ad2d1"/><stop offset="0.6034" stop-color="#1ad1d0"/><stop offset="0.6293" stop-color="#19d0cf"/><stop offset="0.6553" stop-color="#19cfce"/><stop offset="0.6812" stop-color="#18cecd"/><stop offset="0.7072" stop-color="#18cccc"/><stop offset="0.7331" stop-color="#18cbca"/><stop offset="0.7591" stop-color="#17cac9"/><stop offset="0.7786" stop-color="#17c9c8"/><stop offset="0.7851" stop-color="#17c9c8"/><stop offset="0.811" stop-color="#17c8c7"/><stop offset="0.837" stop-color="#17c7c6"/><stop offset="0.8499" stop-color="#16c7c6"/><stop offset="0.8629" stop-color="#16c6c5"/><stop offset="0.8889" stop-color="#16c6c4"/><stop offset="0.9148" stop-color="#16c5c4"/><stop offset="0.9207" stop-color="#16c5c4"/><stop offset="0.9408" stop-color="#16c4c3"/><stop offset="0.9609" stop-color="#16c4c3"/><stop offset="0.9667" stop-color="#15c4c2"/><stop offset="0.9862" stop-color="#15c3c2"/><stop offset="1" stop-color="#15c3c2"/></linearGradient>
<linearGradient id="g52" gradientUnits="userSpaceOnUse" x1="250" x2="1791.3"><stop offset="0" stop-color="#27ece8"/><stop offset="0.0039" stop-color="#2bf2ec"/><stop offset="0.0078" stop-color="#2ef6f0"/><stop offset="0.0117" stop-color="#2df6f0"/><stop offset="0.0162" stop-color="#2df6f0"/><stop offset="0.0247" stop-color="#2af3ee"/><stop offset="0.026" stop-color="#2af2ee"/><stop offset="0.0487" stop-color="#28efec"/><stop offset="0.059" stop-color="#28efec"/><stop offset="0.0811" stop-color="#26ede9"/><stop offset="0.0921" stop-color="#26ece8"/><stop offset="0.1103" stop-color="#22e4e2"/><stop offset="0.1174" stop-color="#20e1e0"/><stop offset="0.1362" stop-color="#1fdfde"/><stop offset="0.146" stop-color="#1ededd"/><stop offset="0.1622" stop-color="#1edddc"/><stop offset="0.1882" stop-color="#1ddbda"/><stop offset="0.1946" stop-color="#1ddbda"/><stop offset="0.2141" stop-color="#1ddad9"/><stop offset="0.2401" stop-color="#1ddad9"/><stop offset="0.266" stop-color="#1edad9"/><stop offset="0.292" stop-color="#1edad9"/><stop offset="0.3179" stop-color="#1edad9"/><stop offset="0.3439" stop-color="#1edad9"/><stop offset="0.3698" stop-color="#1edad9"/><stop offset="0.3893" stop-color="#1edad9"/><stop offset="0.3958" stop-color="#1edad9"/><stop offset="0.4217" stop-color="#1dd9d8"/><stop offset="0.4379" stop-color="#1dd9d8"/><stop offset="0.4477" stop-color="#1dd9d8"/><stop offset="0.4736" stop-color="#1dd8d7"/><stop offset="0.4866" stop-color="#1dd8d7"/><stop offset="0.4996" stop-color="#1cd7d6"/><stop offset="0.5255" stop-color="#1bd5d4"/><stop offset="0.5515" stop-color="#1bd3d2"/><stop offset="0.5774" stop-color="#1ad1d0"/><stop offset="0.5839" stop-color="#19d0d0"/><stop offset="0.6034" stop-color="#19cfcf"/><stop offset="0.6293" stop-color="#19cece"/><stop offset="0.6553" stop-color="#18cdcd"/><stop offset="0.6812" stop-color="#18cccc"/><stop offset="0.7072" stop-color="#18cbca"/><stop offset="0.7331" stop-color="#17cac9"/><stop offset="0.7591" stop-color="#17c9c8"/><stop offset="0.7786" stop-color="#17c8c7"/><stop offset="0.7851" stop-color="#17c8c7"/><stop offset="0.811" stop-color="#17c7c6"/><stop offset="0.837" stop-color="#16c6c5"/><stop offset="0.8499" stop-color="#16c6c5"/><stop offset="0.8629" stop-color="#16c6c4"/><stop offset="0.8889" stop-color="#16c5c4"/><stop offset="0.9148" stop-color="#16c5c3"/><stop offset="0.9207" stop-color="#16c4c3"/><stop offset="0.9408" stop-color="#16c4c3"/><stop offset="0.9609" stop-color="#15c4c2"/><stop offset="0.9667" stop-color="#15c3c2"/><stop offset="0.9862" stop-color="#15c3c2"/><stop offset="1" stop-color="#15c3c2"/></linearGradient>
<linearGradient id="g53" gradientUnits="userSpaceOnUse" x1="250" x2="1791.3"><stop offset="0" stop-color="#27ece8"/><stop offset="0.0039" stop-color="#2bf2ec"/><stop offset="0.0078" stop-color="#2df6f0"/><stop offset="0.0117" stop-color="#2cf5ef"/><stop offset="0.0162" stop-color="#2cf5ef"/><stop offset="0.0247" stop-color="#29f2ed"/><stop offset="0.026" stop-color="#29f1ed"/><stop offset="0.0487" stop-color="#27eeeb"/><stop offset="0.059" stop-color="#27eeeb"/><stop offset="0.0811" stop-color="#25ebe8"/><stop offset="0.0921" stop-color="#25eae7"/><stop offset="0.1103" stop-color="#21e3e1"/><stop offset="0.1174" stop-color="#20e0e0"/><stop offset="0.1362" stop-color="#1fdfde"/><stop offset="0.146" stop-color="#1ededd"/><stop offset="0.1622" stop-color="#1edddc"/><stop offset="0.1882" stop-color="#1ddbda"/><stop offset="0.1946" stop-color="#1ddad9"/><stop offset="0.2141" stop-color="#1ddad9"/><stop offset="0.2401" stop-color="#1dd9d8"/><stop offset="0.266" stop-color="#1dd9d8"/><stop offset="0.292" stop-color="#1dd9d8"/><stop offset="0.3179" stop-color="#1dd9d8"/><stop offset="0.3439" stop-color="#1dd9d8"/><stop offset="0.3698" stop-color="#1dd9d8"/><stop offset="0.3893" stop-color="#1dd9d8"/><stop offset="0.3958" stop-color="#1dd9d8"/><stop offset="0.4217" stop-color="#1dd8d7"/><stop offset="0.4379" stop-color="#1dd8d7"/><stop offset="0.4477" stop-color="#1dd8d7"/><stop offset="0.4736" stop-color="#1dd7d6"/><stop offset="0.4866" stop-color="#1cd6d6"/><stop offset="0.4996" stop-color="#1cd5d5"/><stop offset="0.5255" stop-color="#1bd3d3"/><stop offset="0.5515" stop-color="#1ad1d1"/><stop offset="0.5774" stop-color="#19cfcf"/><stop offset="0.5839" stop-color="#19cece"/><stop offset="0.6034" stop-color="#19cece"/><stop offset="0.6293" stop-color="#18cdcd"/><stop offset="0.6553" stop-color="#18cccc"/><stop offset="0.6812" stop-color="#18cbcb"/><stop offset="0.7072" stop-color="#17cac9"/><stop offset="0.7331" stop-color="#17c9c8"/><stop offset="0.7591" stop-color="#17c8c7"/><stop offset="0.7786" stop-color="#17c7c6"/><stop offset="0.7851" stop-color="#17c7c6"/><stop offset="0.811" stop-color="#16c6c5"/><stop offset="0.837" stop-color="#16c5c4"/><stop offset="0.8499" stop-color="#16c5c4"/><stop offset="0.8629" stop-color="#16c5c4"/><stop offset="0.8889" stop-color="#16c4c3"/><stop offset="0.9148" stop-color="#16c4c3"/><stop offset="0.9207" stop-color="#16c4c3"/><stop offset="0.9408" stop-color="#15c4c2"/><stop offset="0.9609" stop-color="#15c3c2"/><stop offset="0.9667" stop-color="#15c3c2"/><stop offset="0.9862" stop-color="#15c3c2"/><stop offset="1" stop-color="#15c3c2"/></linearGradient>
<linearGradient id="g54" gradientUnits="userSpaceOnUse" x1="250" x2="1791.3"><stop offset="0" stop-color="#27ece8"/><stop offset="0.0039" stop-color="#2bf2ec"/><stop offset="0.0078" stop-color="#2df5ef"/><stop offset="0.0117" stop-color="#2cf4ee"/><stop offset="0.0162" stop-color="#2bf4ee"/><stop offset="0.0247" stop-color="#29f1ec"/><stop offset="0.026" stop-color="#28f0ec"/><stop offset="0.0487" stop-color="#26edea"/><stop offset="0.059" stop-color="#26ece9"/><stop offset="0.0811" stop-color="#24e9e7"/><stop offset="0.0921" stop-color="#24e8e6"/><stop offset="0.1103" stop-color="#20e2e1"/><stop offset="0.1174" stop-color="#1fdfdf"/><stop offset="0.1362" stop-color="#1ededd"/><stop offset="0.146" stop-color="#1edddc"/><stop offset="0.1622" stop-color="#1ddcdb"/><stop offset="0.1882" stop-color="#1ddada"/><stop offset="0.1946" stop-color="#1ddad9"/><stop offset="0.2141" stop-color="#1dd9d9"/><stop offset="0.2401" stop-color="#1dd9d8"/><stop offset="0.266" stop-color="#1dd8d7"/><stop offset="0.292" stop-color="#1dd8d7"/><stop offset="0.3179" stop-color="#1dd8d7"/><stop offset="0.3439" stop-color="#1dd8d7"/><stop offset="0.3698" stop-color="#1dd8d7"/><stop offset="0.3893" stop-color="#1dd8d7"/><stop offset="0.3958" stop-color="#1dd8d7"/><stop offset="0.4217" stop-color="#1dd8d7"/><stop offset="0.4379" stop-color="#1dd7d6"/><stop offset="0.4477" stop-color="#1cd7d6"/><stop offset="0.4736" stop-color="#1cd5d5"/><stop offset="0.4866" stop-color="#1cd5d4"/><stop offset="0.4996" stop-color="#1bd3d3"/><stop offset="0.5255" stop-color="#1ad1d1"/><stop offset="0.5515" stop-color="#19cfcf"/><stop offset="0.5774" stop-color="#18cdcd"/><stop offset="0.5839" stop-color="#18cdcd"/><stop offset="0.6034" stop-color="#18cccc"/><stop offset="0.6293" stop-color="#18cbcb"/><stop offset="0.6553" stop-color="#17caca"/><stop offset="0.6812" stop-color="#17c9ca"/><stop offset="0.7072" stop-color="#17c8c8"/><stop offset="0.7331" stop-color="#17c8c7"/><stop offset="0.7591" stop-color="#17c7c6"/><stop offset="0.7786" stop-color="#17c7c6"/><stop offset="0.7851" stop-color="#16c6c5"/><stop offset="0.811" stop-color="#16c6c5"/><stop offset="0.837" stop-color="#16c5c4"/><stop offset="0.8499" stop-color="#16c4c3"/><stop offset="0.8629" stop-color="#16c4c3"/><stop offset="0.8889" stop-color="#15c4c3"/><stop offset="0.9148" stop-color="#15c4c3"/><stop offset="0.9207" stop-color="#15c4c2"/><stop offset="0.9408" stop-color="#15c3c2"/><stop offset="0.9609" stop-color="#15c3c2"/><stop offset="0.9667" stop-color="#15c3c2"/><stop offset="0.9862" stop-color="#15c3c2"/><stop offset="1" stop-color="#15c3c2"/></linearGradient>
<linearGradient id="g55" gradientUnits="userSpaceOnUse" x1="250" x2="1791.3"><stop offset="0" stop-color="#27ece8"/><stop offset="0.0039" stop-color="#2af1ec"/><stop offset="0.0078" stop-color="#2cf4ee"/><stop offset="0.0117" stop-color="#2bf3ee"/><stop offset="0.0162" stop-color="#2af3ed"/><stop offset="0.0247" stop-color="#28f0ec"/><stop offset="0.026" stop-color="#28efeb"/><stop offset="0.0487" stop-color="#25ebe9"/><stop offset="0.059" stop-color="#25ebe8"/><stop offset="0.0811" stop-color="#23e8e6"/><stop offset="0.0921" stop-color="#22e6e5"/><stop offset="0.1103" stop-color="#1fe0e0"/><stop offset="0.1174" stop-color="#1edede"/><stop offset="0.1362" stop-color="#1ddcdc"/><stop offset="0.146" stop-color="#1ddbdb"/><stop offset="0.1622" stop-color="#1ddbda"/><stop offset="0.1882" stop-color="#1cd9d9"/><stop offset="0.1946" stop-color="#1cd9d9"/><stop offset="0.2141" stop-color="#1cd8d8"/><stop offset="0.2401" stop-color="#1cd8d7"/><stop offset="0.266" stop-color="#1cd7d6"/><stop offset="0.292" stop-color="#1cd7d6"/><stop offset="0.3179" stop-color="#1cd7d7"/><stop offset="0.3439" stop-color="#1cd7d7"/><stop offset="0.3698" stop-color="#1cd7d6"/><stop offset="0.3893" stop-color="#1cd7d6"/><stop offset="0.3958" stop-color="#1cd7d6"/><stop offset="0.4217" stop-color="#1cd6d5"/><stop offset="0.4379" stop-color="#1cd5d5"/><stop offset="0.4477" stop-color="#1cd5d5"/><stop offset="0.4736" stop-color="#1bd3d3"/><stop offset="0.4866" stop-color="#1bd3d3"/><stop offset="0.4996" stop-color="#1bd1d1"/><stop offset="0.5255" stop-color="#1acfd0"/><stop offset="0.5515" stop-color="#19cdce"/><stop offset="0.5774" stop-color="#18cbcc"/><stop offset="0.5839" stop-color="#18cbcb"/><stop offset="0.6034" stop-color="#17cacb"/><stop offset="0.6293" stop-color="#17c9ca"/><stop offset="0.6553" stop-color="#17c9c9"/><stop offset="0.6812" stop-color="#17c8c8"/><stop offset="0.7072" stop-color="#17c7c7"/><stop offset="0.7331" stop-color="#17c7c6"/><stop offset="0.7591" stop-color="#16c6c6"/><stop offset="0.7786" stop-color="#16c6c5"/><stop offset="0.7851" stop-color="#16c6c5"/><stop offset="0.811" stop-color="#16c5c4"/><stop offset="0.837" stop-color="#16c4c3"/><stop offset="0.8499" stop-color="#15c4c3"/><stop offset="0.8629" stop-color="#15c4c3"/><stop offset="0.8889" stop-color="#15c3c2"/><stop offset="0.9148" stop-color="#15c3c2"/><stop offset="0.9207" stop-color="#15c3c2"/><stop offset="0.9408" stop-color="#15c3c2"/><stop offset="0.9609" stop-color="#15c3c2"/><stop offset="0.9667" stop-color="#15c3c2"/><stop offset="0.9862" stop-color="#15c3c2"/><stop offset="1" stop-color="#15c3c2"/></linearGradient>
<linearGradient id="g56" gradientUnits="userSpaceOnUse" x1="250" x2="1791.3"><stop offset="0" stop-color="#27ece8"/><stop offset="0.0039" stop-color="#2af1ec"/><stop offset="0.0078" stop-color="#2bf4ee"/><stop offset="0.0117" stop-color="#2af3ed"/><stop offset="0.0162" stop-color="#2af2ed"/><stop offset="0.0247" stop-color="#27efeb"/><stop offset="0.026" stop-color="#27eeeb"/><stop offset="0.0487" stop-color="#24eae8"/><stop offset="0.059" stop-color="#24e9e7"/><stop offset="0.0811" stop-color="#22e6e5"/><stop offset="0.0921" stop-color="#21e5e4"/><stop offset="0.1103" stop-color="#1fdfdf"/><stop offset="0.1174" stop-color="#1edddd"/><stop offset="0.1362" stop-color="#1ddbdb"/><stop offset="0.146" stop-color="#1cdada"/><stop offset="0.1622" stop-color="#1cd9da"/><stop offset="0.1882" stop-color="#1cd9d9"/><stop offset="0.1946" stop-color="#1cd8d8"/><stop offset="0.2141" stop-color="#1cd7d7"/><stop offset="0.2401" stop-color="#1bd6d6"/><stop offset="0.266" stop-color="#1bd5d5"/><stop offset="0.292" stop-color="#1bd5d5"/><stop offset="0.3179" stop-color="#1bd5d5"/><stop offset="0.3439" stop-color="#1cd6d5"/><stop offset="0.3698" stop-color="#1cd5d5"/><stop offset="0.3893" stop-color="#1cd5d5"/><stop offset="0.3958" stop-color="#1bd5d4"/><stop offset="0.4217" stop-color="#1bd4d4"/><stop offset="0.4379" stop-color="#1bd3d3"/><stop offset="0.4477" stop-color="#1bd3d3"/><stop offset="0.4736" stop-color="#1ad1d1"/><stop offset="0.4866" stop-color="#1ad0d1"/><stop offset="0.4996" stop-color="#1acfd0"/><stop offset="0.5255" stop-color="#19cdce"/><stop offset="0.5515" stop-color="#18cccc"/><stop offset="0.5774" stop-color="#17caca"/><stop offset="0.5839" stop-color="#17c9ca"/><stop offset="0.6034" stop-color="#17c9c9"/><stop offset="0.6293" stop-color="#17c8c9"/><stop offset="0.6553" stop-color="#17c7c8"/><stop offset="0.6812" stop-color="#17c7c7"/><stop offset="0.7072" stop-color="#16c6c6"/><stop offset="0.7331" stop-color="#16c6c6"/><stop offset="0.7591" stop-color="#16c6c5"/><stop offset="0.7786" stop-color="#16c5c4"/><stop offset="0.7851" stop-color="#16c5c4"/><stop offset="0.811" stop-color="#16c4c3"/><stop offset="0.837" stop-color="#15c4c3"/><stop offset="0.8499" stop-color="#15c3c2"/><stop offset="0.8629" stop-color="#15c3c2"/><stop offset="0.8889" stop-color="#15c3c2"/><stop offset="0.9148" stop-color="#15c3c2"/><stop offset="0.9207" stop-color="#15c3c2"/><stop offset="0.9408" stop-color="#15c3c2"/><stop offset="0.9609" stop-color="#15c3c2"/><stop offset="0.9667" stop-color="#15c3c2"/><stop offset="0.9862" stop-color="#15c3c2"/><stop offset="1" stop-color="#15c3c2"/></linearGradient>
<linearGradient id="g57" gradientUnits="userSpaceOnUse" x1="250" x2="1791.3"><stop offset="0" stop-color="#27ece8"/><stop offset="0.0039" stop-color="#2af1eb"/><stop offset="0.0078" stop-color="#2bf3ed"/><stop offset="0.0117" stop-color="#2af2ec"/><stop offset="0.0162" stop-color="#29f1ec"/><stop offset="0.0247" stop-color="#27eeeb"/><stop offset="0.026" stop-color="#27eeeb"/><stop offset="0.0487" stop-color="#24e9e7"/><stop offset="0.059" stop-color="#23e8e6"/><stop offset="0.0811" stop-color="#21e4e4"/><stop offset="0.0921" stop-color="#21e3e3"/><stop offset="0.1103" stop-color="#1edede"/><stop offset="0.1174" stop-color="#1ddcdc"/><stop offset="0.1362" stop-color="#1cdada"/><stop offset="0.146" stop-color="#1cd8d9"/><stop offset="0.1622" stop-color="#1cd8d9"/><stop offset="0.1882" stop-color="#1cd8d8"/><stop offset="0.1946" stop-color="#1cd8d8"/><stop offset="0.2141" stop-color="#1bd6d7"/><stop offset="0.2401" stop-color="#1bd5d5"/><stop offset="0.266" stop-color="#1ad3d4"/><stop offset="0.292" stop-color="#1ad3d4"/><stop offset="0.3179" stop-color="#1ad3d4"/><stop offset="0.3439" stop-color="#1ad3d4"/><stop offset="0.3698" stop-color="#1ad3d3"/><stop offset="0.3893" stop-color="#1ad2d2"/><stop offset="0.3958" stop-color="#1ad2d2"/><stop offset="0.4217" stop-color="#1ad1d2"/><stop offset="0.4379" stop-color="#1ad1d2"/><stop offset="0.4477" stop-color="#1ad1d1"/><stop offset="0.4736" stop-color="#1acfd0"/><stop offset="0.4866" stop-color="#1acfcf"/><stop offset="0.4996" stop-color="#19cece"/><stop offset="0.5255" stop-color="#18cccd"/><stop offset="0.5515" stop-color="#18cacb"/><stop offset="0.5774" stop-color="#17c8c9"/><stop offset="0.5839" stop-color="#17c8c9"/><stop offset="0.6034" stop-color="#16c7c8"/><stop offset="0.6293" stop-color="#16c7c8"/><stop offset="0.6553" stop-color="#16c6c7"/><stop offset="0.6812" stop-color="#16c6c6"/><stop offset="0.7072" stop-color="#16c5c6"/><stop offset="0.7331" stop-color="#16c5c5"/><stop offset="0.7591" stop-color="#16c5c4"/><stop offset="0.7786" stop-color="#16c5c4"/><stop offset="0.7851" stop-color="#16c5c4"/><stop offset="0.811" stop-color="#16c4c3"/><stop offset="0.837" stop-color="#15c3c2"/><stop offset="0.8499" stop-color="#15c3c2"/><stop offset="0.8629" stop-color="#15c3c2"/><stop offset="0.8889" stop-color="#15c3c2"/><stop offset="0.9148" stop-color="#15c3c2"/><stop offset="0.9207" stop-color="#15c3c2"/><stop offset="0.9408" stop-color="#15c3c2"/><stop offset="0.9609" stop-color="#15c3c2"/><stop offset="0.9667" stop-color="#15c3c2"/><stop offset="0.9862" stop-color="#15c3c2"/><stop offset="1" stop-color="#15c3c2"/></linearGradient>
<linearGradient id="g58" gradientUnits="userSpaceOnUse" x1="250" x2="1791.3"><stop offset="0" stop-color="#27ece8"/><stop offset="0.0039" stop-color="#2af1eb"/><stop offset="0.0078" stop-color="#2af3ed"/><stop offset="0.0117" stop-color="#29f1ec"/><stop offset="0.0162" stop-color="#29f1eb"/><stop offset="0.0247" stop-color="#27eeea"/><stop offset="0.026" stop-color="#26edea"/><stop offset="0.0487" stop-color="#23e9e7"/><stop offset="0.059" stop-color="#22e7e6"/><stop offset="0.0811" stop-color="#21e3e3"/><stop offset="0.0921" stop-color="#20e1e2"/><stop offset="0.1103" stop-color="#1dddde"/><stop offset="0.1174" stop-color="#1cdbdc"/><stop offset="0.1362" stop-color="#1cd9d9"/><stop offset="0.146" stop-color="#1bd7d8"/><stop offset="0.1622" stop-color="#1bd7d8"/><stop offset="0.1882" stop-color="#1bd7d8"/><stop offset="0.1946" stop-color="#1bd7d8"/><stop offset="0.2141" stop-color="#1bd5d6"/><stop offset="0.2401" stop-color="#1ad3d4"/><stop offset="0.266" stop-color="#1ad2d2"/><stop offset="0.292" stop-color="#1ad2d2"/><stop offset="0.3179" stop-color="#1ad2d2"/><stop offset="0.3439" stop-color="#1ad2d2"/><stop offset="0.3698" stop-color="#1ad1d1"/><stop offset="0.3893" stop-color="#1ad0d1"/><stop offset="0.3958" stop-color="#1ad0d1"/><stop offset="0.4217" stop-color="#19d0d0"/><stop offset="0.4379" stop-color="#19d0d0"/><stop offset="0.4477" stop-color="#19cfd0"/><stop offset="0.4736" stop-color="#19cecf"/><stop offset="0.4866" stop-color="#19cdce"/><stop offset="0.4996" stop-color="#19cccd"/><stop offset="0.5255" stop-color="#18cbcc"/><stop offset="0.5515" stop-color="#17c9ca"/><stop offset="0.5774" stop-color="#16c7c8"/><stop offset="0.5839" stop-color="#16c7c8"/><stop offset="0.6034" stop-color="#16c7c8"/><stop offset="0.6293" stop-color="#16c6c7"/><stop offset="0.6553" stop-color="#16c5c6"/><stop offset="0.6812" stop-color="#16c5c6"/><stop offset="0.7072" stop-color="#16c5c5"/><stop offset="0.7331" stop-color="#16c5c5"/><stop offset="0.7591" stop-color="#16c5c4"/><stop offset="0.7786" stop-color="#16c5c4"/><stop offset="0.7851" stop-color="#16c4c3"/><stop offset="0.811" stop-color="#16c4c3"/><stop offset="0.837" stop-color="#15c3c2"/><stop offset="0.8499" stop-color="#15c3c2"/><stop offset="0.8629" stop-color="#15c3c2"/><stop offset="0.8889" stop-color="#15c3c2"/><stop offset="0.9148" stop-color="#15c3c2"/><stop offset="0.9207" stop-color="#15c3c2"/><stop offset="0.9408" stop-color="#15c3c2"/><stop offset="0.9609" stop-color="#15c3c2"/><stop offset="0.9667" stop-color="#15c3c2"/><stop offset="0.9862" stop-color="#15c3c2"/><stop offset="1" stop-color="#15c3c2"/></linearGradient>
<linearGradient id="g59" gradientUnits="userSpaceOnUse" x1="250" x2="1791.3"><stop offset="0" stop-color="#27ece8"/><stop offset="0.0039" stop-color="#29f1eb"/><stop offset="0.0078" stop-color="#2af2ec"/><stop offset="0.0117" stop-color="#29f1eb"/><stop offset="0.0162" stop-color="#28f0eb"/><stop offset="0.0247" stop-color="#26edea"/><stop offset="0.026" stop-color="#26edea"/><stop offset="0.0487" stop-color="#23e8e7"/><stop offset="0.059" stop-color="#22e7e6"/><stop offset="0.0811" stop-color="#20e3e3"/><stop offset="0.0921" stop-color="#20e1e2"/><stop offset="0.1103" stop-color="#1ddcdd"/><stop offset="0.1174" stop-color="#1cdbdc"/><stop offset="0.1362" stop-color="#1bd8d9"/><stop offset="0.146" stop-color="#1bd7d8"/><stop offset="0.1622" stop-color="#1bd7d8"/><stop offset="0.1882" stop-color="#1bd7d8"/><stop offset="0.1946" stop-color="#1bd7d8"/><stop offset="0.2141" stop-color="#1ad5d6"/><stop offset="0.2401" stop-color="#1ad3d4"/><stop offset="0.266" stop-color="#19d1d2"/><stop offset="0.292" stop-color="#19d1d2"/><stop offset="0.3179" stop-color="#19d1d2"/><stop offset="0.3439" stop-color="#19d1d2"/><stop offset="0.3698" stop-color="#19d0d0"/><stop offset="0.3893" stop-color="#19cfd0"/><stop offset="0.3958" stop-color="#19cfd0"/><stop offset="0.4217" stop-color="#19cfd0"/><stop offset="0.4379" stop-color="#19cfd0"/><stop offset="0.4477" stop-color="#19cecf"/><stop offset="0.4736" stop-color="#19cdce"/><stop offset="0.4866" stop-color="#19cdce"/><stop offset="0.4996" stop-color="#19cccd"/><stop offset="0.5255" stop-color="#18cacb"/><stop offset="0.5515" stop-color="#17c9ca"/><stop offset="0.5774" stop-color="#16c7c8"/><stop offset="0.5839" stop-color="#16c7c8"/><stop offset="0.6034" stop-color="#16c6c7"/><stop offset="0.6293" stop-color="#16c6c7"/><stop offset="0.6553" stop-color="#16c5c6"/><stop offset="0.6812" stop-color="#16c5c6"/><stop offset="0.7072" stop-color="#16c5c5"/><stop offset="0.7331" stop-color="#16c5c4"/><stop offset="0.7591" stop-color="#16c5c4"/><stop offset="0.7786" stop-color="#16c5c4"/><stop offset="0.7851" stop-color="#16c4c3"/><stop offset="0.811" stop-color="#16c4c3"/><stop offset="0.837" stop-color="#15c3c2"/><stop offset="0.8499" stop-color="#15c3c2"/><stop offset="0.8629" stop-color="#15c3c2"/><stop offset="0.8889" stop-color="#15c3c2"/><stop offset="0.9148" stop-color="#15c3c2"/><stop offset="0.9207" stop-color="#15c3c2"/><stop offset="0.9408" stop-color="#15c3c2"/><stop offset="0.9609" stop-color="#15c3c2"/><stop offset="0.9667" stop-color="#15c3c2"/><stop offset="0.9862" stop-color="#15c3c2"/><stop offset="1" stop-color="#15c3c2"/></linearGradient>
</defs>
<path d="M250 309.5 253 306.1 256 303.5 259 301.7 262 300.1 265 298.8 268 297.6 271 296.5 274 295.5 277 294.5 280 293.7 283 292.9 286 292 289 291.1 292 290.1 295 289.2 298 288.3 300 287.7 312 285.1 324 283 336 281.6 348 281 360 281.2 372 281.9 384 283.2 396 284.3 408 286 420 288.2 460 296.1 500 303.8 540 310.9 580 318.9 620 327.6 660 336.2 700 345.1 740 354.7 780 364.6 820 374.3 860 384.2 900 394.4 940 404.5 980 414.5 1020 424.4 1060 434.1 1100 443.3 1140 452.4 1180 462.3 1220 472.8 1260 484.4 1300 496.7 1340 509.7 1380 523.2 1420 537.4 1460 551.6 1500 565.8 1540 580.4 1580 595.5 1620 610.3 1660 624.9 1700 640.5 1740 657.1 1748 660.6 1756 664.2 1764 668 1770 671.1 1772.5 672.5 1775 674 1777.5 675.6 1780 677.3 1782.5 679.2 1785 681.5 1787.5 684.2 1790 688.8 1791.3 694 1791.3 694 1790 707.1 1787.5 721.8 1785 732.5 1782.5 740.2 1780 745.1 1777.5 747.8 1775 749.5 1772.5 750.4 1770 751.1 1764 751.1 1756 750.2 1748 749 1740 747.6 1700 739 1660 730.1 1620 721.8 1580 713.8 1540 705.9 1500 698.1 1460 690.3 1420 682.6 1380 674.8 1340 666.8 1300 658.7 1260 650.6 1220 642.3 1180 633.7 1140 624.7 1100 615.5 1060 606 1020 596.4 980 586.6 940 576.5 900 565.9 860 554.7 820 543.6 780 532.2 740 519.8 700 506.8 660 493.8 620 480.3 580 465.8 540 451.4 500 437 460 421.4 420 404.5 408 399.3 396 394.1 384 389 372 383.3 360 377.3 348 371.1 336 364.6 324 358.1 312 351.6 300 345.1 298 344 295 342.4 292 340.8 289 339.1 286 337.4 283 335.7 280 334 277 332.2 274 330.3 271 328.4 268 326.3 265 324.2 262 321.9 259 319.5 256 316.9 253 314 250 310.5Z" fill="#15c2c2"/>
<g clip-path="url(#bclip)"><g filter="url(#bblur)">
<path d="M250 309.4 253 305.7 256 302.8 259 300.8 262 299 265 297.5 268 296.2 271 294.9 274 293.7 277 292.7 280 291.7 283 290.7 286 289.7 289 288.7 292 287.6 295 286.5 298 285.5 300 284.8 312 281.7 324 279.3 336 277.5 348 276.5 360 276.4 372 276.9 384 277.9 396 278.8 408 280.3 420 282.4 460 289.9 500 297.1 540 303.9 580 311.6 620 320 660 328.3 700 337 740 346.5 780 356.2 820 365.9 860 375.7 900 385.8 940 395.9 980 405.9 1020 415.8 1060 425.5 1100 434.7 1140 443.8 1180 453.7 1220 464.3 1260 476 1300 488.6 1340 501.8 1380 515.6 1420 530.1 1460 544.7 1500 559.2 1540 574.1 1580 589.6 1620 604.8 1660 619.7 1700 635.6 1740 652.5 1748 656.2 1756 659.9 1764 663.8 1770 667.1 1772.5 668.6 1775 670.2 1777.5 672 1780 673.9 1782.5 676.1 1785 678.9 1787.5 682.3 1790 687.9 1791.3 694 1791.3 694 1790 689.3 1787.5 685.2 1785 682.8 1782.5 680.8 1780 679.1 1777.5 677.5 1775 676 1772.5 674.6 1770 673.2 1764 670.2 1756 666.5 1748 662.9 1740 659.5 1700 643.1 1660 627.7 1620 613.3 1580 598.6 1540 583.7 1500 569.3 1460 555.3 1420 541.2 1380 527.3 1340 513.9 1300 501 1260 488.8 1220 477.3 1180 466.8 1140 457 1100 447.9 1060 438.6 1020 429 980 419.1 940 409.1 900 398.9 860 388.7 820 378.8 780 369.1 740 359.1 700 349.4 660 340.4 620 331.7 580 322.8 540 314.7 500 307.3 460 299.5 420 291.3 408 289 396 287.3 384 286 372 284.6 360 283.8 348 283.4 336 283.9 324 285 312 286.8 300 289.2 298 289.8 295 290.6 292 291.5 289 292.4 286 293.2 283 294 280 294.8 277 295.5 274 296.4 271 297.4 268 298.4 265 299.5 262 300.7 259 302.1 256 303.9 253 306.3 250 309.5Z" fill="url(#g0)"/>
<path d="M250 309.5 253 306.2 256 303.7 259 301.9 262 300.4 265 299.1 268 298 271 296.9 274 295.9 277 295.1 280 294.2 283 293.4 286 292.6 289 291.7 292 290.8 295 289.9 298 289 300 288.5 312 286 324 284.1 336 282.8 348 282.2 360 282.5 372 283.3 384 284.6 396 285.8 408 287.5 420 289.8 460 297.9 500 305.6 540 312.9 580 320.9 620 329.7 660 338.4 700 347.3 740 357 780 366.9 820 376.6 860 386.5 900 396.7 940 406.8 980 416.9 1020 426.8 1060 436.4 1100 445.7 1140 454.8 1180 464.6 1220 475.1 1260 486.6 1300 498.9 1340 511.8 1380 525.3 1420 539.3 1460 553.5 1500 567.6 1540 582.1 1580 597.1 1620 611.9 1660 626.4 1700 641.9 1740 658.3 1748 661.8 1756 665.4 1764 669.1 1770 672.2 1772.5 673.6 1775 675 1777.5 676.5 1780 678.2 1782.5 680 1785 682.2 1787.5 684.7 1790 689.1 1791.3 694 1791.3 694 1790 689.6 1787.5 685.8 1785 683.7 1782.5 681.8 1780 680.2 1777.5 678.7 1775 677.3 1772.5 675.9 1770 674.6 1764 671.6 1756 668 1748 664.4 1740 661 1700 644.8 1660 629.5 1620 615.2 1580 600.6 1540 585.8 1500 571.5 1460 557.7 1420 543.7 1380 529.8 1340 516.5 1300 503.7 1260 491.6 1220 480.2 1180 469.7 1140 459.9 1100 450.8 1060 441.5 1020 431.9 980 422 940 411.9 900 401.8 860 391.6 820 381.7 780 371.9 740 361.9 700 352.1 660 343 620 334.2 580 325.3 540 317 500 309.6 460 301.6 420 293.2 408 290.9 396 289.1 384 287.8 372 286.3 360 285.4 348 284.9 336 285.2 324 286.3 312 287.9 300 290.2 298 290.7 295 291.5 292 292.3 289 293.2 286 294 283 294.7 280 295.4 277 296.2 274 297 271 297.9 268 298.9 265 299.9 262 301.1 259 302.4 256 304.1 253 306.5 250 309.5Z" fill="url(#g1)"/>
<path d="M250 309.5 253 306.4 256 303.9 259 302.2 262 300.8 265 299.6 268 298.5 271 297.5 274 296.5 277 295.7 280 294.9 283 294.2 286 293.4 289 292.5 292 291.7 295 290.8 298 290 300 289.5 312 287.1 324 285.3 336 284.2 348 283.7 360 284.1 372 285 384 286.4 396 287.7 408 289.4 420 291.7 460 299.9 500 307.8 540 315.2 580 323.4 620 332.2 660 341 700 350 740 359.7 780 369.7 820 379.5 860 389.4 900 399.6 940 409.7 980 419.8 1020 429.6 1060 439.3 1100 448.5 1140 457.6 1180 467.5 1220 478 1260 489.4 1300 501.6 1340 514.4 1380 527.8 1420 541.8 1460 555.9 1500 569.8 1540 584.2 1580 599.1 1620 613.7 1660 628.1 1700 643.5 1740 659.8 1748 663.3 1756 666.8 1764 670.5 1770 673.5 1772.5 674.9 1775 676.3 1777.5 677.8 1780 679.3 1782.5 681 1785 683 1787.5 685.3 1790 689.4 1791.3 694 1791.3 694 1790 689.9 1787.5 686.4 1785 684.5 1782.5 682.9 1780 681.3 1777.5 679.9 1775 678.5 1772.5 677.2 1770 675.9 1764 673 1756 669.4 1748 665.9 1740 662.5 1700 646.4 1660 631.2 1620 617 1580 602.6 1540 587.9 1500 573.7 1460 560 1420 546.1 1380 532.3 1340 519.1 1300 506.4 1260 494.3 1220 483 1180 472.5 1140 462.7 1100 453.7 1060 444.4 1020 434.7 980 424.9 940 414.8 900 404.6 860 394.4 820 384.5 780 374.7 740 364.6 700 354.8 660 345.7 620 336.8 580 327.7 540 319.4 500 311.8 460 303.7 420 295.2 408 292.8 396 290.9 384 289.5 372 288 360 287 348 286.4 336 286.6 324 287.5 312 289 300 291.2 298 291.6 295 292.4 292 293.2 289 294 286 294.7 283 295.4 280 296.1 277 296.8 274 297.6 271 298.4 268 299.3 265 300.3 262 301.4 259 302.7 256 304.3 253 306.6 250 309.6Z" fill="url(#g2)"/>
<path d="M250 309.5 253 306.5 256 304.1 259 302.5 262 301.1 265 300 268 299 271 298 274 297.1 277 296.3 280 295.6 283 294.9 286 294.1 289 293.3 292 292.5 295 291.7 298 290.9 300 290.4 312 288.2 324 286.6 336 285.5 348 285.2 360 285.7 372 286.7 384 288.1 396 289.5 408 291.3 420 293.7 460 302 500 310.1 540 317.5 580 325.8 620 334.8 660 343.6 700 352.7 740 362.5 780 372.5 820 382.3 860 392.2 900 402.4 940 412.6 980 422.6 1020 432.5 1060 442.1 1100 451.4 1140 460.5 1180 470.3 1220 480.8 1260 492.2 1300 504.3 1340 517.1 1380 530.3 1420 544.2 1460 558.2 1500 572 1540 586.3 1580 601 1620 615.6 1660 629.9 1700 645.1 1740 661.3 1748 664.7 1756 668.3 1764 671.9 1770 674.9 1772.5 676.2 1775 677.5 1777.5 679 1780 680.4 1782.5 682.1 1785 683.9 1787.5 686 1790 689.7 1791.3 694 1791.3 694 1790 690.2 1787.5 687.1 1785 685.4 1782.5 683.9 1780 682.5 1777.5 681.1 1775 679.8 1772.5 678.5 1770 677.2 1764 674.4 1756 670.8 1748 667.4 1740 664 1700 648.1 1660 633 1620 618.9 1580 604.6 1540 590 1500 575.9 1460 562.3 1420 548.5 1380 534.8 1340 521.7 1300 509.1 1260 497.1 1220 485.8 1180 475.4 1140 465.6 1100 456.5 1060 447.2 1020 437.6 980 427.7 940 417.7 900 407.5 860 397.3 820 387.3 780 377.5 740 367.4 700 357.5 660 348.3 620 339.3 580 330.2 540 321.7 500 314 460 305.7 420 297.1 408 294.7 396 292.7 384 291.3 372 289.7 360 288.6 348 287.9 336 288 324 288.8 312 290.2 300 292.1 298 292.5 295 293.3 292 294 289 294.8 286 295.5 283 296.1 280 296.8 277 297.4 274 298.1 271 298.9 268 299.8 265 300.7 262 301.8 259 303 256 304.5 253 306.7 250 309.6Z" fill="url(#g3)"/>
<path d="M250 309.6 253 306.6 256 304.4 259 302.8 262 301.5 265 300.4 268 299.4 271 298.5 274 297.7 277 296.9 280 296.3 283 295.6 286 294.9 289 294.1 292 293.4 295 292.6 298 291.8 300 291.4 312 289.3 324 287.8 336 286.9 348 286.7 360 287.3 372 288.4 384 289.9 396 291.3 408 293.2 420 295.6 460 304.1 500 312.3 540 319.9 580 328.3 620 337.3 660 346.2 700 355.4 740 365.3 780 375.3 820 385.1 860 395.1 900 405.3 940 415.4 980 425.5 1020 435.4 1060 445 1100 454.3 1140 463.4 1180 473.2 1220 483.6 1260 494.9 1300 507 1340 519.7 1380 532.9 1420 546.6 1460 560.5 1500 574.2 1540 588.3 1580 603 1620 617.4 1660 631.6 1700 646.8 1740 662.8 1748 666.2 1756 669.7 1764 673.3 1770 676.2 1772.5 677.5 1775 678.8 1777.5 680.2 1780 681.6 1782.5 683.1 1785 684.7 1787.5 686.6 1790 690 1791.3 694 1791.3 694 1790 690.5 1787.5 687.7 1785 686.2 1782.5 684.9 1780 683.6 1777.5 682.3 1775 681 1772.5 679.8 1770 678.6 1764 675.8 1756 672.3 1748 668.8 1740 665.5 1700 649.7 1660 634.7 1620 620.7 1580 606.5 1540 592.1 1500 578.1 1460 564.6 1420 550.9 1380 537.4 1340 524.3 1300 511.8 1260 499.9 1220 488.6 1180 478.3 1140 468.5 1100 459.4 1060 450.1 1020 440.5 980 430.6 940 420.5 900 410.4 860 400.1 820 390.1 780 380.3 740 370.1 700 360.2 660 350.9 620 341.9 580 332.6 540 324.1 500 316.2 460 307.8 420 299.1 408 296.6 396 294.6 384 293.1 372 291.4 360 290.2 348 289.4 336 289.4 324 290 312 291.3 300 293.1 298 293.5 295 294.2 292 294.9 289 295.6 286 296.2 283 296.9 280 297.4 277 298.1 274 298.7 271 299.5 268 300.3 265 301.2 262 302.1 259 303.3 256 304.8 253 306.9 250 309.6Z" fill="url(#g4)"/>
<path d="M250 309.6 253 306.8 256 304.6 259 303.1 262 301.9 265 300.8 268 299.9 271 299.1 274 298.3 277 297.6 280 296.9 283 296.3 286 295.6 289 294.9 292 294.2 295 293.5 298 292.8 300 292.3 312 290.4 324 289.1 336 288.3 348 288.2 360 288.9 372 290.1 384 291.7 396 293.1 408 295.1 420 297.5 460 306.2 500 314.5 540 322.2 580 330.7 620 339.9 660 348.9 700 358.1 740 368 780 378.1 820 387.9 860 397.9 900 408.1 940 418.3 980 428.4 1020 438.2 1060 447.9 1100 457.2 1140 466.3 1180 476 1220 486.4 1260 497.7 1300 509.7 1340 522.3 1380 535.4 1420 549 1460 562.8 1500 576.4 1540 590.4 1580 605 1620 619.3 1660 633.4 1700 648.4 1740 664.3 1748 667.7 1756 671.1 1764 674.7 1770 677.5 1772.5 678.8 1775 680.1 1777.5 681.4 1780 682.7 1782.5 684.1 1785 685.6 1787.5 687.2 1790 690.3 1791.3 694 1791.3 694 1790 690.8 1787.5 688.3 1785 687.1 1782.5 685.9 1780 684.7 1777.5 683.5 1775 682.3 1772.5 681.1 1770 679.9 1764 677.1 1756 673.7 1748 670.3 1740 667 1700 651.3 1660 636.5 1620 622.6 1580 608.5 1540 594.2 1500 580.3 1460 566.9 1420 553.3 1380 539.9 1340 527 1300 514.5 1260 502.6 1220 491.5 1180 481.1 1140 471.4 1100 462.3 1060 453 1020 443.3 980 433.5 940 423.4 900 413.2 860 403 820 392.9 780 383.1 740 372.9 700 362.9 660 353.5 620 344.4 580 335.1 540 326.4 500 318.4 460 309.9 420 301 408 298.4 396 296.4 384 294.8 372 293.1 360 291.8 348 290.9 336 290.8 324 291.3 312 292.4 300 294 298 294.4 295 295 292 295.7 289 296.4 286 297 283 297.6 280 298.1 277 298.7 274 299.3 271 300 268 300.8 265 301.6 262 302.5 259 303.6 256 305 253 307 250 309.6Z" fill="url(#g5)"/>
<path d="M250 309.6 253 306.9 256 304.8 259 303.4 262 302.2 265 301.3 268 300.4 271 299.6 274 298.9 277 298.2 280 297.6 283 297 286 296.4 289 295.7 292 295 295 294.3 298 293.7 300 293.3 312 291.5 324 290.3 336 289.7 348 289.7 360 290.5 372 291.8 384 293.4 396 295 408 297 420 299.5 460 308.3 500 316.7 540 324.6 580 333.2 620 342.4 660 351.5 700 360.8 740 370.8 780 380.9 820 390.7 860 400.7 900 411 940 421.2 980 431.2 1020 441.1 1060 450.7 1100 460 1140 469.1 1180 478.9 1220 489.3 1260 500.5 1300 512.4 1340 524.9 1380 537.9 1420 551.4 1460 565.1 1500 578.6 1540 592.5 1580 607 1620 621.1 1660 635.1 1700 650.1 1740 665.9 1748 669.2 1756 672.6 1764 676.1 1770 678.9 1772.5 680.1 1775 681.3 1777.5 682.6 1780 683.8 1782.5 685.1 1785 686.4 1787.5 687.8 1790 690.6 1791.3 694 1791.3 694 1790 691.1 1787.5 688.9 1785 687.9 1782.5 686.9 1780 685.9 1777.5 684.7 1775 683.6 1772.5 682.4 1770 681.2 1764 678.5 1756 675.1 1748 671.8 1740 668.5 1700 653 1660 638.2 1620 624.5 1580 610.5 1540 596.3 1500 582.6 1460 569.2 1420 555.8 1380 542.4 1340 529.6 1300 517.2 1260 505.4 1220 494.3 1180 484 1140 474.2 1100 465.1 1060 455.8 1020 446.2 980 436.3 940 426.3 900 416.1 860 405.8 820 395.8 780 385.8 740 375.6 700 365.6 660 356.2 620 347 580 337.5 540 328.7 500 320.7 460 312 420 302.9 408 300.3 396 298.2 384 296.6 372 294.8 360 293.4 348 292.4 336 292.2 324 292.5 312 293.5 300 295 298 295.3 295 295.9 292 296.6 289 297.2 286 297.8 283 298.3 280 298.8 277 299.3 274 299.9 271 300.5 268 301.2 265 302 262 302.9 259 303.9 256 305.2 253 307.1 250 309.6Z" fill="url(#g6)"/>
<path d="M250 309.6 253 307 256 305 259 303.7 262 302.6 265 301.7 268 300.9 271 300.1 274 299.4 277 298.8 280 298.3 283 297.7 286 297.2 289 296.5 292 295.9 295 295.2 298 294.6 300 294.2 312 292.6 324 291.6 336 291.1 348 291.2 360 292.1 372 293.5 384 295.2 396 296.8 408 298.9 420 301.4 460 310.4 500 318.9 540 326.9 580 335.6 620 345 660 354.1 700 363.5 740 373.5 780 383.7 820 393.6 860 403.6 900 413.8 940 424 980 434.1 1020 444 1060 453.6 1100 462.9 1140 472 1180 481.7 1220 492.1 1260 503.3 1300 515.1 1340 527.5 1380 540.4 1420 553.9 1460 567.4 1500 580.8 1540 594.6 1580 608.9 1620 623 1660 636.9 1700 651.7 1740 667.4 1748 670.6 1756 674 1764 677.5 1770 680.2 1772.5 681.4 1775 682.6 1777.5 683.8 1780 685 1782.5 686.1 1785 687.3 1787.5 688.5 1790 690.9 1791.3 694 1791.3 694 1790 691.5 1787.5 689.6 1785 688.8 1782.5 687.9 1780 687 1777.5 685.9 1775 684.8 1772.5 683.7 1770 682.6 1764 679.9 1756 676.6 1748 673.3 1740 670.1 1700 654.6 1660 640 1620 626.3 1580 612.4 1540 598.4 1500 584.8 1460 571.5 1420 558.2 1380 544.9 1340 532.2 1300 519.9 1260 508.2 1220 497.1 1180 486.8 1140 477.1 1100 468 1060 458.7 1020 449.1 980 439.2 940 429.1 900 418.9 860 408.6 820 398.6 780 388.6 740 378.4 700 368.3 660 358.8 620 349.5 580 340 540 331.1 500 322.9 460 314.1 420 304.9 408 302.2 396 300.1 384 298.3 372 296.5 360 295 348 293.9 336 293.5 324 293.8 312 294.6 300 295.9 298 296.3 295 296.8 292 297.4 289 298 286 298.5 283 299 280 299.5 277 299.9 274 300.5 271 301.1 268 301.7 265 302.4 262 303.2 259 304.2 256 305.4 253 307.3 250 309.6Z" fill="url(#g7)"/>
<path d="M250 309.6 253 307.2 256 305.2 259 304 262 303 265 302.1 268 301.4 271 300.7 274 300 277 299.5 280 298.9 283 298.4 286 297.9 289 297.3 292 296.7 295 296.1 298 295.5 300 295.2 312 293.7 324 292.8 336 292.5 348 292.7 360 293.7 372 295.2 384 297 396 298.6 408 300.7 420 303.4 460 312.5 500 321.2 540 329.2 580 338.1 620 347.5 660 356.8 700 366.2 740 376.3 780 386.5 820 396.4 860 406.4 900 416.7 940 426.9 980 437 1020 446.8 1060 456.5 1100 465.8 1140 474.9 1180 484.6 1220 494.9 1260 506 1300 517.8 1340 530.2 1380 543 1420 556.3 1460 569.7 1500 583 1540 596.7 1580 610.9 1620 624.9 1660 638.6 1700 653.3 1740 668.9 1748 672.1 1756 675.4 1764 678.8 1770 681.5 1772.5 682.7 1775 683.8 1777.5 685 1780 686.1 1782.5 687.1 1785 688.1 1787.5 689.1 1790 691.2 1791.3 694 1791.3 694 1790 691.8 1787.5 690.2 1785 689.6 1782.5 688.9 1780 688.1 1777.5 687.1 1775 686.1 1772.5 685 1770 683.9 1764 681.3 1756 678 1748 674.7 1740 671.6 1700 656.3 1660 641.8 1620 628.2 1580 614.4 1540 600.4 1500 587 1460 573.8 1420 560.6 1380 547.5 1340 534.8 1300 522.6 1260 511 1220 499.9 1180 489.7 1140 480 1100 470.9 1060 461.6 1020 451.9 980 442.1 940 432 900 421.8 860 411.5 820 401.4 780 391.4 740 381.2 700 371 660 361.4 620 352 580 342.4 540 333.4 500 325.1 460 316.2 420 306.8 408 304.1 396 301.9 384 300.1 372 298.2 360 296.6 348 295.4 336 294.9 324 295 312 295.7 300 296.9 298 297.2 295 297.7 292 298.2 289 298.8 286 299.3 283 299.7 280 300.1 277 300.6 274 301 271 301.6 268 302.2 265 302.9 262 303.6 259 304.5 256 305.6 253 307.4 250 309.7Z" fill="url(#g8)"/>
<path d="M250 309.6 253 307.3 256 305.5 259 304.3 262 303.3 265 302.5 268 301.8 271 301.2 274 300.6 277 300.1 280 299.6 283 299.2 286 298.7 289 298.1 292 297.6 295 297 298 296.5 300 296.1 312 294.8 324 294.1 336 293.8 348 294.2 360 295.3 372 296.8 384 298.7 396 300.5 408 302.6 420 305.3 460 314.6 500 323.4 540 331.6 580 340.5 620 350.1 660 359.4 700 368.9 740 379 780 389.3 820 399.2 860 409.3 900 419.6 940 429.8 980 439.8 1020 449.7 1060 459.3 1100 468.6 1140 477.7 1180 487.5 1220 497.7 1260 508.8 1300 520.5 1340 532.8 1380 545.5 1420 558.7 1460 572 1500 585.2 1540 598.8 1580 612.9 1620 626.7 1660 640.4 1700 655 1740 670.4 1748 673.6 1756 676.9 1764 680.2 1770 682.9 1772.5 684 1775 685.1 1777.5 686.2 1780 687.2 1782.5 688.2 1785 689 1787.5 689.7 1790 691.5 1791.3 694 1791.3 694 1790 692.1 1787.5 690.8 1785 690.5 1782.5 690 1780 689.2 1777.5 688.3 1775 687.3 1772.5 686.3 1770 685.2 1764 682.7 1756 679.4 1748 676.2 1740 673.1 1700 657.9 1660 643.5 1620 630 1580 616.4 1540 602.5 1500 589.2 1460 576.1 1420 563 1380 550 1340 537.4 1300 525.3 1260 513.7 1220 502.8 1180 492.5 1140 482.9 1100 473.7 1060 464.4 1020 454.8 980 444.9 940 434.9 900 424.7 860 414.3 820 404.2 780 394.2 740 383.9 700 373.7 660 364.1 620 354.6 580 344.9 540 335.8 500 327.3 460 318.3 420 308.7 408 306 396 303.7 384 301.9 372 299.9 360 298.2 348 296.9 336 296.3 324 296.3 312 296.8 300 297.9 298 298.1 295 298.6 292 299.1 289 299.6 286 300 283 300.4 280 300.8 277 301.2 274 301.6 271 302.1 268 302.7 265 303.3 262 304 259 304.8 256 305.9 253 307.5 250 309.7Z" fill="url(#g9)"/>
<path d="M250 309.7 253 307.4 256 305.7 259 304.6 262 303.7 265 302.9 268 302.3 271 301.7 274 301.2 277 300.7 280 300.3 283 299.9 286 299.4 289 298.9 292 298.4 295 297.9 298 297.4 300 297.1 312 295.9 324 295.3 336 295.2 348 295.7 360 296.9 372 298.5 384 300.5 396 302.3 408 304.5 420 307.2 460 316.6 500 325.6 540 333.9 580 343 620 352.6 660 362 700 371.6 740 381.8 780 392 820 402 860 412.1 900 422.4 940 432.6 980 442.7 1020 452.6 1060 462.2 1100 471.5 1140 480.6 1180 490.3 1220 500.6 1260 511.6 1300 523.2 1340 535.4 1380 548 1420 561.1 1460 574.3 1500 587.4 1540 600.9 1580 614.8 1620 628.6 1660 642.1 1700 656.6 1740 671.9 1748 675.1 1756 678.3 1764 681.6 1770 684.2 1772.5 685.3 1775 686.4 1777.5 687.4 1780 688.4 1782.5 689.2 1785 689.8 1787.5 690.3 1790 691.8 1791.3 694 1791.3 694 1790 692.4 1787.5 691.5 1785 691.3 1782.5 691 1780 690.4 1777.5 689.5 1775 688.6 1772.5 687.6 1770 686.6 1764 684.1 1756 680.9 1748 677.7 1740 674.6 1700 659.6 1660 645.3 1620 631.9 1580 618.4 1540 604.6 1500 591.4 1460 578.5 1420 565.4 1380 552.5 1340 540 1300 528 1260 516.5 1220 505.6 1180 495.4 1140 485.7 1100 476.6 1060 467.3 1020 457.7 980 447.8 940 437.7 900 427.5 860 417.2 820 407.1 780 397 740 386.7 700 376.4 660 366.7 620 357.1 580 347.3 540 338.1 500 329.5 460 320.4 420 310.7 408 307.9 396 305.6 384 303.6 372 301.5 360 299.8 348 298.4 336 297.7 324 297.5 312 297.9 300 298.8 298 299.1 295 299.5 292 299.9 289 300.4 286 300.8 283 301.1 280 301.5 277 301.8 274 302.2 271 302.7 268 303.2 265 303.7 262 304.3 259 305.1 256 306.1 253 307.7 250 309.7Z" fill="url(#g10)"/>
<path d="M250 309.7 253 307.6 256 305.9 259 304.9 262 304 265 303.4 268 302.8 271 302.3 274 301.8 277 301.3 280 301 283 300.6 286 300.2 289 299.8 292 299.3 295 298.8 298 298.3 300 298.1 312 297.1 324 296.6 336 296.6 348 297.2 360 298.5 372 300.2 384 302.3 396 304.1 408 306.4 420 309.2 460 318.7 500 327.8 540 336.3 580 345.4 620 355.1 660 364.6 700 374.3 740 384.5 780 394.8 820 404.9 860 414.9 900 425.3 940 435.5 980 445.6 1020 455.4 1060 465.1 1100 474.4 1140 483.5 1180 493.2 1220 503.4 1260 514.3 1300 525.9 1340 538 1380 550.6 1420 563.6 1460 576.7 1500 589.7 1540 603 1580 616.8 1620 630.4 1660 643.9 1700 658.3 1740 673.4 1748 676.5 1756 679.7 1764 683 1770 685.5 1772.5 686.6 1775 687.6 1777.5 688.6 1780 689.5 1782.5 690.2 1785 690.7 1787.5 691 1790 692.1 1791.3 694 1791.3 694 1790 692.7 1787.5 692.1 1785 692.2 1782.5 692 1780 691.5 1777.5 690.7 1775 689.9 1772.5 688.9 1770 687.9 1764 685.5 1756 682.3 1748 679.2 1740 676.1 1700 661.2 1660 647 1620 633.7 1580 620.3 1540 606.7 1500 593.6 1460 580.8 1420 567.9 1380 555 1340 542.7 1300 530.7 1260 519.3 1220 508.4 1180 498.3 1140 488.6 1100 479.5 1060 470.2 1020 460.5 980 450.7 940 440.6 900 430.4 860 420 820 409.9 780 399.8 740 389.4 700 379.1 660 369.3 620 359.7 580 349.8 540 340.4 500 331.8 460 322.4 420 312.6 408 309.8 396 307.4 384 305.4 372 303.2 360 301.4 348 299.9 336 299.1 324 298.8 312 299 300 299.8 298 300 295 300.4 292 300.8 289 301.2 286 301.5 283 301.9 280 302.1 277 302.5 274 302.8 271 303.2 268 303.6 265 304.1 262 304.7 259 305.4 256 306.3 253 307.8 250 309.7Z" fill="url(#g11)"/>
<path d="M250 309.7 253 307.7 256 306.1 259 305.2 262 304.4 265 303.8 268 303.3 271 302.8 274 302.3 277 302 280 301.6 283 301.3 286 300.9 289 300.6 292 300.1 295 299.7 298 299.3 300 299 312 298.2 324 297.8 336 298 348 298.7 360 300.1 372 301.9 384 304 396 306 408 308.3 420 311.1 460 320.8 500 330 540 338.6 580 347.9 620 357.7 660 367.3 700 377 740 387.3 780 397.6 820 407.7 860 417.8 900 428.1 940 438.4 980 448.4 1020 458.3 1060 467.9 1100 477.2 1140 486.4 1180 496 1220 506.2 1260 517.1 1300 528.6 1340 540.6 1380 553.1 1420 566 1460 579 1500 591.9 1540 605.1 1580 618.8 1620 632.3 1660 645.6 1700 659.9 1740 674.9 1748 678 1756 681.2 1764 684.4 1770 686.9 1772.5 687.9 1775 688.9 1777.5 689.8 1780 690.6 1782.5 691.2 1785 691.5 1787.5 691.6 1790 692.4 1791.3 694 1791.3 694 1790 693 1787.5 692.7 1785 693 1782.5 693 1780 692.6 1777.5 691.9 1775 691.1 1772.5 690.2 1770 689.2 1764 686.8 1756 683.7 1748 680.6 1740 677.6 1700 662.8 1660 648.8 1620 635.6 1580 622.3 1540 608.8 1500 595.8 1460 583.1 1420 570.3 1380 557.6 1340 545.3 1300 533.4 1260 522 1220 511.2 1180 501.1 1140 491.5 1100 482.3 1060 473 1020 463.4 980 453.5 940 443.5 900 433.2 860 422.8 820 412.7 780 402.6 740 392.2 700 381.8 660 371.9 620 362.2 580 352.2 540 342.8 500 334 460 324.5 420 314.6 408 311.7 396 309.2 384 307.2 372 304.9 360 303 348 301.4 336 300.4 324 300 312 300.1 300 300.7 298 300.9 295 301.3 292 301.6 289 302 286 302.3 283 302.6 280 302.8 277 303.1 274 303.4 271 303.7 268 304.1 265 304.5 262 305.1 259 305.7 256 306.5 253 307.9 250 309.7Z" fill="url(#g12)"/>
<path d="M250 309.7 253 307.8 256 306.4 259 305.5 262 304.8 265 304.2 268 303.7 271 303.3 274 302.9 277 302.6 280 302.3 283 302 286 301.7 289 301.4 292 301 295 300.6 298 300.2 300 300 312 299.3 324 299.1 336 299.4 348 300.2 360 301.7 372 303.6 384 305.8 396 307.8 408 310.2 420 313 460 322.9 500 332.3 540 340.9 580 350.3 620 360.2 660 369.9 700 379.6 740 390 780 400.4 820 410.5 860 420.6 900 431 940 441.2 980 451.3 1020 461.2 1060 470.8 1100 480.1 1140 489.2 1180 498.9 1220 509 1260 519.9 1300 531.3 1340 543.2 1380 555.6 1420 568.4 1460 581.3 1500 594.1 1540 607.2 1580 620.8 1620 634.2 1660 647.4 1700 661.6 1740 676.4 1748 679.5 1756 682.6 1764 685.8 1770 688.2 1772.5 689.2 1775 690.1 1777.5 691 1780 691.8 1782.5 692.2 1785 692.4 1787.5 692.2 1790 692.7 1791.3 694 1791.3 694 1790 693.3 1787.5 693.3 1785 693.9 1782.5 694 1780 693.8 1777.5 693.1 1775 692.4 1772.5 691.5 1770 690.6 1764 688.2 1756 685.2 1748 682.1 1740 679.1 1700 664.5 1660 650.5 1620 637.5 1580 624.3 1540 610.9 1500 598 1460 585.4 1420 572.7 1380 560.1 1340 547.9 1300 536.1 1260 524.8 1220 514.1 1180 504 1140 494.3 1100 485.2 1060 475.9 1020 466.3 980 456.4 940 446.3 900 436.1 860 425.7 820 415.5 780 405.4 740 394.9 700 384.4 660 374.6 620 364.8 580 354.7 540 345.1 500 336.2 460 326.6 420 316.5 408 313.5 396 311 384 308.9 372 306.6 360 304.6 348 302.9 336 301.8 324 301.3 312 301.2 300 301.7 298 301.8 295 302.1 292 302.5 289 302.8 286 303.1 283 303.3 280 303.5 277 303.7 274 304 271 304.3 268 304.6 265 305 262 305.4 259 306 256 306.8 253 308 250 309.7Z" fill="url(#g13)"/>
<path d="M250 309.7 253 307.9 256 306.6 259 305.8 262 305.1 265 304.6 268 304.2 271 303.8 274 303.5 277 303.2 280 303 283 302.7 286 302.5 289 302.2 292 301.8 295 301.4 298 301.1 300 300.9 312 300.4 324 300.3 336 300.8 348 301.8 360 303.3 372 305.3 384 307.5 396 309.6 408 312.1 420 315 460 325 500 334.5 540 343.3 580 352.8 620 362.8 660 372.5 700 382.3 740 392.8 780 403.2 820 413.3 860 423.5 900 433.9 940 444.1 980 454.2 1020 464 1060 473.7 1100 483 1140 492.1 1180 501.7 1220 511.9 1260 522.6 1300 534 1340 545.9 1380 558.1 1420 570.8 1460 583.6 1500 596.3 1540 609.3 1580 622.7 1620 636 1660 649.2 1700 663.2 1740 677.9 1748 681 1756 684 1764 687.2 1770 689.5 1772.5 690.5 1775 691.4 1777.5 692.2 1780 692.9 1782.5 693.2 1785 693.2 1787.5 692.8 1790 693 1791.3 694 1791.3 694 1790 693.6 1787.5 694 1785 694.7 1782.5 695 1780 694.9 1777.5 694.3 1775 693.6 1772.5 692.8 1770 691.9 1764 689.6 1756 686.6 1748 683.6 1740 680.6 1700 666.1 1660 652.3 1620 639.3 1580 626.2 1540 613 1500 600.2 1460 587.7 1420 575.1 1380 562.6 1340 550.5 1300 538.8 1260 527.6 1220 516.9 1180 506.8 1140 497.2 1100 488.1 1060 478.8 1020 469.1 980 459.3 940 449.2 900 438.9 860 428.5 820 418.3 780 408.2 740 397.7 700 387.1 660 377.2 620 367.3 580 357.1 540 347.5 500 338.4 460 328.7 420 318.4 408 315.4 396 312.9 384 310.7 372 308.3 360 306.2 348 304.4 336 303.2 324 302.5 312 302.4 300 302.6 298 302.8 295 303 292 303.3 289 303.6 286 303.8 283 304 280 304.2 277 304.3 274 304.5 271 304.8 268 305.1 265 305.4 262 305.8 259 306.3 256 307 253 308.2 250 309.8Z" fill="url(#g14)"/>
<path d="M250 309.7 253 308.1 256 306.8 259 306.1 262 305.5 265 305.1 268 304.7 271 304.4 274 304.1 277 303.8 280 303.6 283 303.4 286 303.2 289 303 292 302.6 295 302.3 298 302 300 301.9 312 301.5 324 301.6 336 302.1 348 303.3 360 304.9 372 307 384 309.3 396 311.4 408 314 420 316.9 460 327.1 500 336.7 540 345.6 580 355.2 620 365.3 660 375.1 700 385 740 395.5 780 406 820 416.1 860 426.3 900 436.7 940 447 980 457 1020 466.9 1060 476.5 1100 485.8 1140 495 1180 504.6 1220 514.7 1260 525.4 1300 536.7 1340 548.5 1380 560.7 1420 573.2 1460 585.9 1500 598.5 1540 611.4 1580 624.7 1620 637.9 1660 650.9 1700 664.8 1740 679.4 1748 682.4 1756 685.5 1764 688.5 1770 690.9 1772.5 691.8 1775 692.6 1777.5 693.4 1780 694 1782.5 694.3 1785 694.1 1787.5 693.5 1790 693.3 1791.3 694 1791.3 694 1790 693.9 1787.5 694.6 1785 695.6 1782.5 696.1 1780 696 1777.5 695.5 1775 694.9 1772.5 694.1 1770 693.2 1764 691 1756 688 1748 685.1 1740 682.1 1700 667.8 1660 654 1620 641.2 1580 628.2 1540 615.1 1500 602.4 1460 590 1420 577.5 1380 565.2 1340 553.1 1300 541.5 1260 530.4 1220 519.7 1180 509.7 1140 500.1 1100 491 1060 481.6 1020 472 980 462.1 940 452.1 900 441.8 860 431.4 820 421.2 780 411 740 400.4 700 389.8 660 379.8 620 369.9 580 359.6 540 349.8 500 340.6 460 330.8 420 320.4 408 317.3 396 314.7 384 312.5 372 310 360 307.8 348 305.9 336 304.6 324 303.8 312 303.5 300 303.6 298 303.7 295 303.9 292 304.1 289 304.4 286 304.6 283 304.7 280 304.8 277 305 274 305.1 271 305.3 268 305.6 265 305.8 262 306.1 259 306.6 256 307.2 253 308.3 250 309.8Z" fill="url(#g15)"/>
<path d="M250 309.8 253 308.2 256 307 259 306.4 262 305.9 265 305.5 268 305.2 271 304.9 274 304.7 277 304.5 280 304.3 283 304.2 286 304 289 303.8 292 303.5 295 303.2 298 303 300 302.8 312 302.6 324 302.8 336 303.5 348 304.8 360 306.5 372 308.7 384 311.1 396 313.3 408 315.8 420 318.9 460 329.2 500 338.9 540 348 580 357.7 620 367.9 660 377.8 700 387.7 740 398.3 780 408.8 820 419 860 429.2 900 439.6 940 449.8 980 459.9 1020 469.8 1060 479.4 1100 488.7 1140 497.8 1180 507.5 1220 517.5 1260 528.2 1300 539.4 1340 551.1 1380 563.2 1420 575.7 1460 588.2 1500 600.7 1540 613.5 1580 626.7 1620 639.7 1660 652.7 1700 666.5 1740 681 1748 683.9 1756 686.9 1764 689.9 1770 692.2 1772.5 693.1 1775 693.9 1777.5 694.6 1780 695.2 1782.5 695.3 1785 694.9 1787.5 694.1 1790 693.6 1791.3 694 1791.3 694 1790 694.2 1787.5 695.2 1785 696.4 1782.5 697.1 1780 697.2 1777.5 696.8 1775 696.1 1772.5 695.4 1770 694.6 1764 692.4 1756 689.5 1748 686.5 1740 683.6 1700 669.4 1660 655.8 1620 643 1580 630.2 1540 617.2 1500 604.6 1460 592.3 1420 580 1380 567.7 1340 555.8 1300 544.2 1260 533.1 1220 522.5 1180 512.5 1140 503 1100 493.8 1060 484.5 1020 474.9 980 465 940 454.9 900 444.7 860 434.2 820 424 780 413.8 740 403.2 700 392.5 660 382.4 620 372.4 580 362 540 352.1 500 342.9 460 332.9 420 322.3 408 319.2 396 316.5 384 314.2 372 311.7 360 309.4 348 307.4 336 306 324 305 312 304.6 300 304.6 298 304.6 295 304.8 292 305 289 305.2 286 305.3 283 305.4 280 305.5 277 305.6 274 305.7 271 305.9 268 306 265 306.2 262 306.5 259 306.9 256 307.4 253 308.4 250 309.8Z" fill="url(#g16)"/>
<path d="M250 309.8 253 308.3 256 307.3 259 306.7 262 306.2 265 305.9 268 305.7 271 305.4 274 305.2 277 305.1 280 305 283 304.9 286 304.7 289 304.6 292 304.3 295 304.1 298 303.9 300 303.8 312 303.7 324 304.1 336 304.9 348 306.3 360 308.1 372 310.4 384 312.8 396 315.1 408 317.7 420 320.8 460 331.3 500 341.1 540 350.3 580 360.1 620 370.4 660 380.4 700 390.4 740 401 780 411.6 820 421.8 860 432 900 442.4 940 452.7 980 462.8 1020 472.6 1060 482.3 1100 491.6 1140 500.7 1180 510.3 1220 520.3 1260 531 1300 542.1 1340 553.7 1380 565.7 1420 578.1 1460 590.5 1500 602.9 1540 615.6 1580 628.7 1620 641.6 1660 654.4 1700 668.1 1740 682.5 1748 685.4 1756 688.3 1764 691.3 1770 693.5 1772.5 694.4 1775 695.2 1777.5 695.8 1780 696.3 1782.5 696.3 1785 695.8 1787.5 694.7 1790 693.9 1791.3 694 1791.3 694 1790 694.5 1787.5 695.8 1785 697.3 1782.5 698.1 1780 698.3 1777.5 698 1775 697.4 1772.5 696.7 1770 695.9 1764 693.8 1756 690.9 1748 688 1740 685.1 1700 671 1660 657.5 1620 644.9 1580 632.2 1540 619.3 1500 606.8 1460 594.6 1420 582.4 1380 570.2 1340 558.4 1300 546.9 1260 535.9 1220 525.4 1180 515.4 1140 505.8 1100 496.7 1060 487.4 1020 477.7 980 467.9 940 457.8 900 447.5 860 437.1 820 426.8 780 416.6 740 405.9 700 395.2 660 385.1 620 374.9 580 364.5 540 354.5 500 345.1 460 335 420 324.3 408 321.1 396 318.4 384 316 372 313.4 360 311 348 308.9 336 307.4 324 306.3 312 305.7 300 305.5 298 305.6 295 305.7 292 305.8 289 306 286 306.1 283 306.1 280 306.2 277 306.2 274 306.3 271 306.4 268 306.5 265 306.7 262 306.9 259 307.2 256 307.7 253 308.6 250 309.8Z" fill="url(#g17)"/>
<path d="M250 309.8 253 308.5 256 307.5 259 307 262 306.6 265 306.3 268 306.1 271 306 274 305.8 277 305.7 280 305.7 283 305.6 286 305.5 289 305.4 292 305.2 295 305 298 304.8 300 304.8 312 304.8 324 305.3 336 306.3 348 307.8 360 309.7 372 312.1 384 314.6 396 316.9 408 319.6 420 322.7 460 333.3 500 343.3 540 352.6 580 362.6 620 373 660 383 700 393.1 740 403.8 780 414.4 820 424.6 860 434.8 900 445.3 940 455.6 980 465.6 1020 475.5 1060 485.1 1100 494.5 1140 503.6 1180 513.2 1220 523.2 1260 533.7 1300 544.8 1340 556.3 1380 568.2 1420 580.5 1460 592.8 1500 605.1 1540 617.7 1580 630.6 1620 643.4 1660 656.2 1700 669.8 1740 684 1748 686.8 1756 689.8 1764 692.7 1770 694.9 1772.5 695.7 1775 696.4 1777.5 697 1780 697.4 1782.5 697.3 1785 696.6 1787.5 695.3 1790 694.3 1791.3 694 1791.3 694 1790 694.8 1787.5 696.5 1785 698.1 1782.5 699.1 1780 699.4 1777.5 699.2 1775 698.7 1772.5 698 1770 697.2 1764 695.2 1756 692.3 1748 689.5 1740 686.7 1700 672.7 1660 659.3 1620 646.8 1580 634.1 1540 621.4 1500 609 1460 597 1420 584.8 1380 572.7 1340 561 1300 549.6 1260 538.7 1220 528.2 1180 518.3 1140 508.7 1100 499.6 1060 490.2 1020 480.6 980 470.7 940 460.7 900 450.4 860 439.9 820 429.6 780 419.4 740 408.7 700 397.9 660 387.7 620 377.5 580 366.9 540 356.8 500 347.3 460 337.1 420 326.2 408 323 396 320.2 384 317.7 372 315.1 360 312.6 348 310.4 336 308.7 324 307.5 312 306.8 300 306.5 298 306.5 295 306.6 292 306.7 289 306.8 286 306.8 283 306.9 280 306.8 277 306.8 274 306.9 271 306.9 268 307 265 307.1 262 307.2 259 307.5 256 307.9 253 308.7 250 309.8Z" fill="url(#g18)"/>
<path d="M250 309.8 253 308.6 256 307.7 259 307.2 262 306.9 265 306.8 268 306.6 271 306.5 274 306.4 277 306.4 280 306.3 283 306.3 286 306.2 289 306.2 292 306 295 305.9 298 305.8 300 305.7 312 305.9 324 306.6 336 307.7 348 309.3 360 311.3 372 313.7 384 316.4 396 318.8 408 321.5 420 324.7 460 335.4 500 345.6 540 355 580 365 620 375.5 660 385.6 700 395.8 740 406.5 780 417.2 820 427.4 860 437.7 900 448.1 940 458.4 980 468.5 1020 478.4 1060 488 1100 497.3 1140 506.5 1180 516 1220 526 1260 536.5 1300 547.5 1340 559 1380 570.8 1420 582.9 1460 595.1 1500 607.3 1540 619.7 1580 632.6 1620 645.3 1660 657.9 1700 671.4 1740 685.5 1748 688.3 1756 691.2 1764 694.1 1770 696.2 1772.5 697 1775 697.7 1777.5 698.2 1780 698.5 1782.5 698.3 1785 697.5 1787.5 696 1790 694.6 1791.3 694 1791.3 694 1790 695.1 1787.5 697.1 1785 699 1782.5 700.1 1780 700.6 1777.5 700.4 1775 699.9 1772.5 699.3 1770 698.6 1764 696.5 1756 693.7 1748 690.9 1740 688.2 1700 674.3 1660 661 1620 648.6 1580 636.1 1540 623.5 1500 611.2 1460 599.3 1420 587.2 1380 575.3 1340 563.6 1300 552.3 1260 541.4 1220 531 1180 521.1 1140 511.6 1100 502.4 1060 493.1 1020 483.5 980 473.6 940 463.5 900 453.2 860 442.7 820 432.4 780 422.2 740 411.4 700 400.6 660 390.3 620 380 580 369.4 540 359.2 500 349.5 460 339.1 420 328.1 408 324.9 396 322 384 319.5 372 316.8 360 314.2 348 311.9 336 310.1 324 308.8 312 307.9 300 307.4 298 307.4 295 307.5 292 307.5 289 307.6 286 307.6 283 307.6 280 307.5 277 307.5 274 307.4 271 307.5 268 307.5 265 307.5 262 307.6 259 307.8 256 308.1 253 308.8 250 309.8Z" fill="url(#g19)"/>
<path d="M250 309.8 253 308.7 256 307.9 259 307.5 262 307.3 265 307.2 268 307.1 271 307 274 307 277 307 280 307 283 307 286 307 289 307 292 306.9 295 306.8 298 306.7 300 306.7 312 307 324 307.8 336 309 348 310.8 360 312.9 372 315.4 384 318.1 396 320.6 408 323.4 420 326.6 460 337.5 500 347.8 540 357.3 580 367.4 620 378 660 388.3 700 398.5 740 409.3 780 420 820 430.2 860 440.5 900 451 940 461.3 980 471.4 1020 481.2 1060 490.9 1100 500.2 1140 509.3 1180 518.9 1220 528.8 1260 539.3 1300 550.2 1340 561.6 1380 573.3 1420 585.3 1460 597.5 1500 609.5 1540 621.8 1580 634.6 1620 647.2 1660 659.7 1700 673 1740 687 1748 689.8 1756 692.6 1764 695.5 1770 697.5 1772.5 698.3 1775 698.9 1777.5 699.4 1780 699.7 1782.5 699.3 1785 698.3 1787.5 696.6 1790 694.9 1791.3 694 1791.3 694 1790 695.4 1787.5 697.7 1785 699.8 1782.5 701.1 1780 701.7 1777.5 701.6 1775 701.2 1772.5 700.6 1770 699.9 1764 697.9 1756 695.2 1748 692.4 1740 689.7 1700 676 1660 662.8 1620 650.5 1580 638.1 1540 625.6 1500 613.4 1460 601.6 1420 589.6 1380 577.8 1340 566.2 1300 555 1260 544.2 1220 533.8 1180 524 1140 514.4 1100 505.3 1060 496 1020 486.3 980 476.5 940 466.4 900 456.1 860 445.6 820 435.3 780 424.9 740 414.2 700 403.3 660 392.9 620 382.6 580 371.8 540 361.5 500 351.7 460 341.2 420 330.1 408 326.8 396 323.8 384 321.3 372 318.4 360 315.8 348 313.4 336 311.5 324 310 312 309 300 308.4 298 308.3 295 308.3 292 308.4 289 308.4 286 308.4 283 308.3 280 308.2 277 308.1 274 308 271 308 268 308 265 307.9 262 308 259 308.1 256 308.3 253 309 250 309.9Z" fill="url(#g20)"/>
<path d="M250 309.8 253 308.9 256 308.2 259 307.8 262 307.7 265 307.6 268 307.6 271 307.6 274 307.6 277 307.6 280 307.7 283 307.7 286 307.8 289 307.8 292 307.7 295 307.7 298 307.6 300 307.6 312 308.1 324 309.1 336 310.4 348 312.3 360 314.5 372 317.1 384 319.9 396 322.4 408 325.3 420 328.6 460 339.6 500 350 540 359.7 580 369.9 620 380.6 660 390.9 700 401.2 740 412 780 422.8 820 433.1 860 443.4 900 453.9 940 464.2 980 474.2 1020 484.1 1060 493.7 1100 503.1 1140 512.2 1180 521.7 1220 531.6 1260 542 1300 552.9 1340 564.2 1380 575.8 1420 587.8 1460 599.8 1500 611.7 1540 623.9 1580 636.5 1620 649 1660 661.4 1700 674.7 1740 688.5 1748 691.3 1756 694.1 1764 696.9 1770 698.9 1772.5 699.5 1775 700.2 1777.5 700.6 1780 700.8 1782.5 700.3 1785 699.2 1787.5 697.2 1790 695.2 1791.3 694 1791.3 694 1790 695.7 1787.5 698.3 1785 700.7 1782.5 702.2 1780 702.8 1777.5 702.8 1775 702.4 1772.5 701.9 1770 701.2 1764 699.3 1756 696.6 1748 693.9 1740 691.2 1700 677.6 1660 664.5 1620 652.3 1580 640.1 1540 627.7 1500 615.6 1460 603.9 1420 592.1 1380 580.3 1340 568.9 1300 557.7 1260 547 1220 536.7 1180 526.8 1140 517.3 1100 508.2 1060 498.8 1020 489.2 980 479.3 940 469.3 900 459 860 448.4 820 438.1 780 427.7 740 416.9 700 406 660 395.6 620 385.1 580 374.3 540 363.8 500 354 460 343.3 420 332 408 328.6 396 325.7 384 323 372 320.1 360 317.4 348 314.9 336 312.9 324 311.3 312 310.1 300 309.3 298 309.3 295 309.2 292 309.2 289 309.2 286 309.1 283 309 280 308.9 277 308.7 274 308.6 271 308.5 268 308.4 265 308.4 262 308.3 259 308.4 256 308.5 253 309.1 250 309.9Z" fill="url(#g21)"/>
<path d="M250 309.9 253 309 256 308.4 259 308.1 262 308 265 308 268 308.1 271 308.1 274 308.2 277 308.2 280 308.3 283 308.4 286 308.5 289 308.6 292 308.6 295 308.5 298 308.6 300 308.6 312 309.2 324 310.3 336 311.8 348 313.8 360 316.1 372 318.8 384 321.7 396 324.2 408 327.2 420 330.5 460 341.7 500 352.2 540 362 580 372.3 620 383.1 660 393.5 700 403.9 740 414.8 780 425.6 820 435.9 860 446.2 900 456.7 940 467 980 477.1 1020 487 1060 496.6 1100 505.9 1140 515.1 1180 524.6 1220 534.5 1260 544.8 1300 555.6 1340 566.8 1380 578.3 1420 590.2 1460 602.1 1500 613.9 1540 626 1580 638.5 1620 650.9 1660 663.2 1700 676.3 1740 690 1748 692.7 1756 695.5 1764 698.2 1770 700.2 1772.5 700.8 1775 701.5 1777.5 701.8 1780 701.9 1782.5 701.4 1785 700 1787.5 697.9 1790 695.5 1791.3 694 1791.3 694 1790 696 1787.5 699 1785 701.5 1782.5 703.2 1780 704 1777.5 704 1775 703.7 1772.5 703.2 1770 702.6 1764 700.7 1756 698 1748 695.4 1740 692.7 1700 679.2 1660 666.3 1620 654.2 1580 642 1540 629.7 1500 617.8 1460 606.2 1420 594.5 1380 582.8 1340 571.5 1300 560.4 1260 549.8 1220 539.5 1180 529.7 1140 520.2 1100 511 1060 501.7 1020 492.1 980 482.2 940 472.1 900 461.8 860 451.3 820 440.9 780 430.5 740 419.7 700 408.7 660 398.2 620 387.7 580 376.7 540 366.2 500 356.2 460 345.4 420 333.9 408 330.5 396 327.5 384 324.8 372 321.8 360 319 348 316.4 336 314.3 324 312.5 312 311.2 300 310.3 298 310.2 295 310.1 292 310.1 289 310 286 309.9 283 309.7 280 309.5 277 309.4 274 309.2 271 309 268 308.9 265 308.8 262 308.7 259 308.7 256 308.8 253 309.2 250 309.9Z" fill="url(#g22)"/>
<path d="M250 309.9 253 309.1 256 308.6 259 308.4 262 308.4 265 308.4 268 308.5 271 308.6 274 308.7 277 308.9 280 309 283 309.2 286 309.3 289 309.4 292 309.4 295 309.4 298 309.5 300 309.5 312 310.4 324 311.6 336 313.2 348 315.3 360 317.7 372 320.5 384 323.4 396 326.1 408 329.1 420 332.4 460 343.8 500 354.4 540 364.3 580 374.8 620 385.7 660 396.1 700 406.6 740 417.5 780 428.4 820 438.7 860 449 900 459.6 940 469.9 980 480 1020 489.8 1060 499.5 1100 508.8 1140 518 1180 527.5 1220 537.3 1260 547.6 1300 558.3 1340 569.4 1380 580.9 1420 592.6 1460 604.4 1500 616.1 1540 628.1 1580 640.5 1620 652.7 1660 664.9 1700 678 1740 691.5 1748 694.2 1756 696.9 1764 699.6 1770 701.5 1772.5 702.1 1775 702.7 1777.5 703 1780 703.1 1782.5 702.4 1785 700.9 1787.5 698.5 1790 695.8 1791.3 694 1791.3 694 1790 696.3 1787.5 699.6 1785 702.4 1782.5 704.2 1780 705.1 1777.5 705.2 1775 704.9 1772.5 704.5 1770 703.9 1764 702.1 1756 699.5 1748 696.8 1740 694.2 1700 680.9 1660 668.1 1620 656 1580 644 1540 631.8 1500 620 1460 608.5 1420 596.9 1380 585.4 1340 574.1 1300 563.1 1260 552.5 1220 542.3 1180 532.5 1140 523.1 1100 513.9 1060 504.6 1020 494.9 980 485.1 940 475 900 464.7 860 454.1 820 443.7 780 433.3 740 422.4 700 411.4 660 400.8 620 390.2 580 379.2 540 368.5 500 358.4 460 347.5 420 335.9 408 332.4 396 329.3 384 326.6 372 323.5 360 320.6 348 317.9 336 315.7 324 313.8 312 312.3 300 311.2 298 311.1 295 311 292 310.9 289 310.8 286 310.6 283 310.4 280 310.2 277 310 274 309.8 271 309.6 268 309.4 265 309.2 262 309 259 309 256 309 253 309.3 250 309.9Z" fill="url(#g23)"/>
<path d="M250 309.9 253 309.2 256 308.8 259 308.7 262 308.8 265 308.9 268 309 271 309.2 274 309.3 277 309.5 280 309.7 283 309.9 286 310 289 310.2 292 310.2 295 310.3 298 310.4 300 310.5 312 311.5 324 312.8 336 314.6 348 316.8 360 319.4 372 322.2 384 325.2 396 327.9 408 331 420 334.4 460 345.9 500 356.7 540 366.7 580 377.2 620 388.2 660 398.8 700 409.3 740 420.3 780 431.1 820 441.5 860 451.9 900 462.4 940 472.8 980 482.8 1020 492.7 1060 502.3 1100 511.7 1140 520.8 1180 530.3 1220 540.1 1260 550.4 1300 561 1340 572.1 1380 583.4 1420 595 1460 606.7 1500 618.3 1540 630.2 1580 642.5 1620 654.6 1660 666.7 1700 679.6 1740 693 1748 695.7 1756 698.4 1764 701 1770 702.9 1772.5 703.4 1775 704 1777.5 704.2 1780 704.2 1782.5 703.4 1785 701.7 1787.5 699.1 1790 696.1 1791.3 694 1791.3 694 1790 696.6 1787.5 700.2 1785 703.2 1782.5 705.2 1780 706.2 1777.5 706.4 1775 706.2 1772.5 705.8 1770 705.2 1764 703.5 1756 700.9 1748 698.3 1740 695.7 1700 682.5 1660 669.8 1620 657.9 1580 646 1540 633.9 1500 622.2 1460 610.8 1420 599.3 1380 587.9 1340 576.7 1300 565.8 1260 555.3 1220 545.1 1180 535.4 1140 525.9 1100 516.8 1060 507.4 1020 497.8 980 487.9 940 477.9 900 467.5 860 456.9 820 446.5 780 436.1 740 425.2 700 414.1 660 403.4 620 392.7 580 381.6 540 370.9 500 360.6 460 349.6 420 337.8 408 334.3 396 331.2 384 328.3 372 325.2 360 322.2 348 319.4 336 317 324 315 312 313.4 300 312.2 298 312.1 295 311.9 292 311.7 289 311.6 286 311.4 283 311.1 280 310.9 277 310.6 274 310.3 271 310.1 268 309.9 265 309.6 262 309.4 259 309.3 256 309.2 253 309.5 250 309.9Z" fill="url(#g24)"/>
<path d="M250 309.9 253 309.4 256 309 259 309 262 309.1 265 309.3 268 309.5 271 309.7 274 309.9 277 310.1 280 310.4 283 310.6 286 310.8 289 311 292 311.1 295 311.2 298 311.3 300 311.5 312 312.6 324 314.1 336 316 348 318.3 360 321 372 323.9 384 327 396 329.7 408 332.8 420 336.3 460 347.9 500 358.9 540 369 580 379.7 620 390.8 660 401.4 700 412 740 423 780 433.9 820 444.3 860 454.7 900 465.3 940 475.6 980 485.7 1020 495.6 1060 505.2 1100 514.5 1140 523.7 1180 533.2 1220 542.9 1260 553.1 1300 563.7 1340 574.7 1380 585.9 1420 597.4 1460 609 1500 620.5 1540 632.3 1580 644.4 1620 656.5 1660 668.4 1700 681.3 1740 694.5 1748 697.2 1756 699.8 1764 702.4 1770 704.2 1772.5 704.7 1775 705.2 1777.5 705.4 1780 705.3 1782.5 704.4 1785 702.6 1787.5 699.7 1790 696.4 1791.3 694 1791.3 694 1790 696.9 1787.5 700.8 1785 704.1 1782.5 706.2 1780 707.3 1777.5 707.6 1775 707.5 1772.5 707.1 1770 706.6 1764 704.9 1756 702.3 1748 699.8 1740 697.2 1700 684.2 1660 671.6 1620 659.8 1580 647.9 1540 636 1500 624.5 1460 613.1 1420 601.7 1380 590.4 1340 579.3 1300 568.5 1260 558.1 1220 548 1180 538.3 1140 528.8 1100 519.6 1060 510.3 1020 500.7 980 490.8 940 480.7 900 470.4 860 459.8 820 449.4 780 438.9 740 427.9 700 416.8 660 406.1 620 395.3 580 384 540 373.2 500 362.8 460 351.7 420 339.8 408 336.2 396 333 384 330.1 372 326.9 360 323.8 348 320.9 336 318.4 324 316.3 312 314.5 300 313.2 298 313 295 312.8 292 312.6 289 312.4 286 312.1 283 311.9 280 311.5 277 311.2 274 310.9 271 310.6 268 310.3 265 310 262 309.8 259 309.6 256 309.4 253 309.6 250 309.9Z" fill="url(#g25)"/>
<path d="M250 309.9 253 309.5 256 309.3 259 309.3 262 309.5 265 309.7 268 310 271 310.2 274 310.5 277 310.7 280 311 283 311.3 286 311.5 289 311.8 292 311.9 295 312.1 298 312.3 300 312.4 312 313.7 324 315.3 336 317.3 348 319.8 360 322.6 372 325.6 384 328.7 396 331.6 408 334.7 420 338.2 460 350 500 361.1 540 371.4 580 382.1 620 393.3 660 404 700 414.7 740 425.8 780 436.7 820 447.2 860 457.6 900 468.2 940 478.5 980 488.6 1020 498.4 1060 508.1 1100 517.4 1140 526.6 1180 536 1220 545.8 1260 555.9 1300 566.4 1340 577.3 1380 588.4 1420 599.9 1460 611.3 1500 622.7 1540 634.4 1580 646.4 1620 658.3 1660 670.2 1700 682.9 1740 696 1748 698.6 1756 701.2 1764 703.8 1770 705.5 1772.5 706 1775 706.5 1777.5 706.7 1780 706.5 1782.5 705.4 1785 703.4 1787.5 700.4 1790 696.7 1791.3 694 1791.3 694 1790 697.2 1787.5 701.5 1785 704.9 1782.5 707.2 1780 708.5 1777.5 708.8 1775 708.7 1772.5 708.4 1770 707.9 1764 706.2 1756 703.8 1748 701.3 1740 698.7 1700 685.8 1660 673.3 1620 661.6 1580 649.9 1540 638.1 1500 626.7 1460 615.4 1420 604.2 1380 592.9 1340 581.9 1300 571.2 1260 560.8 1220 550.8 1180 541.1 1140 531.7 1100 522.5 1060 513.2 1020 503.5 980 493.7 940 483.6 900 473.2 860 462.6 820 452.2 780 441.7 740 430.7 700 419.5 660 408.7 620 397.8 580 386.5 540 375.5 500 365.1 460 353.7 420 341.7 408 338.1 396 334.8 384 331.9 372 328.6 360 325.4 348 322.4 336 319.8 324 317.5 312 315.7 300 314.1 298 313.9 295 313.7 292 313.4 289 313.2 286 312.9 283 312.6 280 312.2 277 311.9 274 311.5 271 311.2 268 310.8 265 310.5 262 310.1 259 309.9 256 309.7 253 309.7 250 310Z" fill="url(#g26)"/>
<path d="M250 309.9 253 309.6 256 309.5 259 309.6 262 309.8 265 310.1 268 310.5 271 310.8 274 311.1 277 311.4 280 311.7 283 312 286 312.3 289 312.6 292 312.8 295 313 298 313.2 300 313.4 312 314.8 324 316.6 336 318.7 348 321.3 360 324.2 372 327.3 384 330.5 396 333.4 408 336.6 420 340.2 460 352.1 500 363.3 540 373.7 580 384.6 620 395.9 660 406.6 700 417.4 740 428.5 780 439.5 820 450 860 460.4 900 471 940 481.4 980 491.4 1020 501.3 1060 510.9 1100 520.3 1140 529.4 1180 538.9 1220 548.6 1260 558.7 1300 569.1 1340 579.9 1380 591 1420 602.3 1460 613.6 1500 624.9 1540 636.5 1580 648.4 1620 660.2 1660 672 1700 684.5 1740 697.6 1748 700.1 1756 702.7 1764 705.2 1770 706.9 1772.5 707.3 1775 707.7 1777.5 707.9 1780 707.6 1782.5 706.4 1785 704.3 1787.5 701 1790 697 1791.3 694 1791.3 694 1790 697.5 1787.5 702.1 1785 705.8 1782.5 708.3 1780 709.6 1777.5 710 1775 710 1772.5 709.7 1770 709.2 1764 707.6 1756 705.2 1748 702.7 1740 700.2 1700 687.5 1660 675.1 1620 663.5 1580 651.9 1540 640.2 1500 628.9 1460 617.8 1420 606.6 1380 595.5 1340 584.6 1300 573.9 1260 563.6 1220 553.6 1180 544 1140 534.6 1100 525.4 1060 516 1020 506.4 980 496.5 940 486.5 900 476.1 860 465.5 820 455 780 444.5 740 433.4 700 422.2 660 411.3 620 400.4 580 388.9 540 377.9 500 367.3 460 355.8 420 343.6 408 340 396 336.7 384 333.6 372 330.3 360 327 348 323.9 336 321.2 324 318.8 312 316.8 300 315.1 298 314.9 295 314.6 292 314.3 289 314 286 313.7 283 313.3 280 312.9 277 312.5 274 312.1 271 311.7 268 311.3 265 310.9 262 310.5 259 310.2 256 309.9 253 309.9 250 310Z" fill="url(#g27)"/>
<path d="M250 310 253 309.8 256 309.7 259 309.9 262 310.2 265 310.6 268 310.9 271 311.3 274 311.6 277 312 280 312.4 283 312.7 286 313.1 289 313.4 292 313.6 295 313.9 298 314.1 300 314.3 312 315.9 324 317.8 336 320.1 348 322.8 360 325.8 372 329 384 332.2 396 335.2 408 338.5 420 342.1 460 354.2 500 365.5 540 376 580 387 620 398.4 660 409.3 700 420.1 740 431.3 780 442.3 820 452.8 860 463.3 900 473.9 940 484.2 980 494.3 1020 504.2 1060 513.8 1100 523.1 1140 532.3 1180 541.7 1220 551.4 1260 561.4 1300 571.8 1340 582.5 1380 593.5 1420 604.7 1460 616 1500 627.1 1540 638.6 1580 650.3 1620 662 1660 673.7 1700 686.2 1740 699.1 1748 701.6 1756 704.1 1764 706.6 1770 708.2 1772.5 708.6 1775 709 1777.5 709.1 1780 708.7 1782.5 707.5 1785 705.1 1787.5 701.6 1790 697.3 1791.3 694 1791.3 694 1790 697.8 1787.5 702.7 1785 706.6 1782.5 709.3 1780 710.7 1777.5 711.2 1775 711.2 1772.5 711 1770 710.6 1764 709 1756 706.6 1748 704.2 1740 701.8 1700 689.1 1660 676.8 1620 665.3 1580 653.9 1540 642.3 1500 631.1 1460 620.1 1420 609 1380 598 1340 587.2 1300 576.6 1260 566.4 1220 556.4 1180 546.8 1140 537.4 1100 528.3 1060 518.9 1020 509.3 980 499.4 940 489.3 900 479 860 468.3 820 457.8 780 447.3 740 436.2 700 424.9 660 413.9 620 402.9 580 391.4 540 380.2 500 369.5 460 357.9 420 345.6 408 341.9 396 338.5 384 335.4 372 332 360 328.6 348 325.4 336 322.6 324 320 312 317.9 300 316 298 315.8 295 315.4 292 315.1 289 314.8 286 314.4 283 314 280 313.6 277 313.1 274 312.7 271 312.2 268 311.8 265 311.3 262 310.9 259 310.5 256 310.1 253 310 250 310Z" fill="url(#g28)"/>
<path d="M250 310 253 309.9 256 309.9 259 310.2 262 310.6 265 311 268 311.4 271 311.8 274 312.2 277 312.6 280 313 283 313.4 286 313.8 289 314.2 292 314.5 295 314.8 298 315.1 300 315.3 312 317 324 319.1 336 321.5 348 324.3 360 327.4 372 330.6 384 334 396 337.1 408 340.4 420 344.1 460 356.3 500 367.8 540 378.4 580 389.5 620 400.9 660 411.9 700 422.8 740 434 780 445.1 820 455.6 860 466.1 900 476.7 940 487.1 980 497.2 1020 507 1060 516.7 1100 526 1140 535.2 1180 544.6 1220 554.2 1260 564.2 1300 574.5 1340 585.1 1380 596 1420 607.1 1460 618.3 1500 629.4 1540 640.7 1580 652.3 1620 663.9 1660 675.5 1700 687.8 1740 700.6 1748 703.1 1756 705.5 1764 707.9 1770 709.5 1772.5 709.9 1775 710.3 1777.5 710.3 1780 709.9 1782.5 708.5 1785 706 1787.5 702.2 1790 697.6 1791.3 694 1791.3 694 1790 698.1 1787.5 703.4 1785 707.5 1782.5 710.3 1780 711.9 1777.5 712.4 1775 712.5 1772.5 712.2 1770 711.9 1764 710.4 1756 708.1 1748 705.7 1740 703.3 1700 690.7 1660 678.6 1620 667.2 1580 655.8 1540 644.4 1500 633.3 1460 622.4 1420 611.4 1380 600.5 1340 589.8 1300 579.3 1260 569.1 1220 559.3 1180 549.7 1140 540.3 1100 531.1 1060 521.8 1020 512.1 980 502.3 940 492.2 900 481.8 860 471.2 820 460.6 780 450.1 740 438.9 700 427.6 660 416.6 620 405.5 580 393.8 540 382.6 500 371.7 460 360 420 347.5 408 343.8 396 340.3 384 337.1 372 333.6 360 330.2 348 326.9 336 323.9 324 321.3 312 319 300 317 298 316.7 295 316.3 292 316 289 315.6 286 315.2 283 314.7 280 314.2 277 313.7 274 313.3 271 312.8 268 312.3 265 311.7 262 311.2 259 310.7 256 310.3 253 310.1 250 310Z" fill="url(#g29)"/>
<path d="M250 310 253 310 256 310.2 259 310.5 262 310.9 265 311.4 268 311.9 271 312.4 274 312.8 277 313.3 280 313.7 283 314.2 286 314.6 289 315 292 315.3 295 315.6 298 316 300 316.2 312 318.1 324 320.3 336 322.9 348 325.8 360 329 372 332.3 384 335.8 396 338.9 408 342.3 420 346 460 358.4 500 370 540 380.7 580 391.9 620 403.5 660 414.5 700 425.5 740 436.8 780 447.9 820 458.4 860 468.9 900 479.6 940 490 980 500 1020 509.9 1060 519.5 1100 528.9 1140 538.1 1180 547.5 1220 557.1 1260 567 1300 577.2 1340 587.8 1380 598.5 1420 609.5 1460 620.6 1500 631.6 1540 642.8 1580 654.3 1620 665.7 1660 677.2 1700 689.5 1740 702.1 1748 704.5 1756 707 1764 709.3 1770 710.9 1772.5 711.2 1775 711.5 1777.5 711.5 1780 711 1782.5 709.5 1785 706.8 1787.5 702.9 1790 697.9 1791.3 694 1791.3 694 1790 698.4 1787.5 704 1785 708.3 1782.5 711.3 1780 713 1777.5 713.6 1775 713.8 1772.5 713.5 1770 713.2 1764 711.8 1756 709.5 1748 707.2 1740 704.8 1700 692.4 1660 680.3 1620 669 1580 657.8 1540 646.5 1500 635.5 1460 624.7 1420 613.8 1380 603 1340 592.4 1300 582 1260 571.9 1220 562.1 1180 552.5 1140 543.2 1100 534 1060 524.6 1020 515 980 505.1 940 495.1 900 484.7 860 474 820 463.5 780 452.9 740 441.7 700 430.3 660 419.2 620 408 580 396.3 540 384.9 500 373.9 460 362.1 420 349.4 408 345.6 396 342.1 384 338.9 372 335.3 360 331.8 348 328.4 336 325.3 324 322.5 312 320.1 300 317.9 298 317.6 295 317.2 292 316.8 289 316.4 286 315.9 283 315.4 280 314.9 277 314.4 274 313.8 271 313.3 268 312.7 265 312.2 262 311.6 259 311 256 310.6 253 310.3 250 310Z" fill="url(#g30)"/>
<path d="M250 310 253 310.2 256 310.4 259 310.8 262 311.3 265 311.8 268 312.4 271 312.9 274 313.4 277 313.9 280 314.4 283 314.9 286 315.3 289 315.8 292 316.2 295 316.5 298 316.9 300 317.2 312 319.2 324 321.6 336 324.2 348 327.3 360 330.6 372 334 384 337.5 396 340.7 408 344.2 420 347.9 460 360.5 500 372.2 540 383.1 580 394.4 620 406 660 417.1 700 428.2 740 439.5 780 450.7 820 461.3 860 471.8 900 482.5 940 492.8 980 502.9 1020 512.8 1060 522.4 1100 531.8 1140 540.9 1180 550.3 1220 559.9 1260 569.8 1300 579.9 1340 590.4 1380 601.1 1420 612 1460 622.9 1500 633.8 1540 644.9 1580 656.3 1620 667.6 1660 679 1700 691.1 1740 703.6 1748 706 1756 708.4 1764 710.7 1770 712.2 1772.5 712.5 1775 712.8 1777.5 712.7 1780 712.1 1782.5 710.5 1785 707.7 1787.5 703.5 1790 698.2 1791.3 694 1791.3 694 1790 698.7 1787.5 704.6 1785 709.2 1782.5 712.3 1780 714.1 1777.5 714.8 1775 715 1772.5 714.8 1770 714.6 1764 713.2 1756 710.9 1748 708.6 1740 706.3 1700 694 1660 682.1 1620 670.9 1580 659.8 1540 648.6 1500 637.7 1460 627 1420 616.3 1380 605.6 1340 595 1300 584.7 1260 574.7 1220 564.9 1180 555.4 1140 546 1100 536.9 1060 527.5 1020 517.9 980 508 940 497.9 900 487.5 860 476.8 820 466.3 780 455.7 740 444.4 700 433 660 421.8 620 410.6 580 398.7 540 387.2 500 376.2 460 364.2 420 351.4 408 347.5 396 344 384 340.7 372 337 360 333.4 348 329.9 336 326.7 324 323.8 312 321.2 300 318.9 298 318.6 295 318.1 292 317.7 289 317.2 286 316.7 283 316.1 280 315.6 277 315 274 314.4 271 313.8 268 313.2 265 312.6 262 311.9 259 311.3 256 310.8 253 310.4 250 310Z" fill="url(#g31)"/>
<path d="M250 310 253 310.3 256 310.6 259 311.1 262 311.7 265 312.3 268 312.8 271 313.4 274 314 277 314.5 280 315.1 283 315.6 286 316.1 289 316.6 292 317 295 317.4 298 317.8 300 318.2 312 320.3 324 322.8 336 325.6 348 328.8 360 332.2 372 335.7 384 339.3 396 342.5 408 346.1 420 349.9 460 362.6 500 374.4 540 385.4 580 396.8 620 408.6 660 419.8 700 430.9 740 442.3 780 453.5 820 464.1 860 474.6 900 485.3 940 495.7 980 505.8 1020 515.6 1060 525.3 1100 534.6 1140 543.8 1180 553.2 1220 562.7 1260 572.5 1300 582.6 1340 593 1380 603.6 1420 614.4 1460 625.2 1500 636 1540 647 1580 658.2 1620 669.5 1660 680.7 1700 692.7 1740 705.1 1748 707.5 1756 709.8 1764 712.1 1770 713.5 1772.5 713.8 1775 714 1777.5 713.9 1780 713.2 1782.5 711.5 1785 708.5 1787.5 704.1 1790 698.5 1791.3 694 1791.3 694 1790 699 1787.5 705.2 1785 710 1782.5 713.3 1780 715.3 1777.5 716 1775 716.3 1772.5 716.1 1770 715.9 1764 714.6 1756 712.4 1748 710.1 1740 707.8 1700 695.7 1660 683.8 1620 672.8 1580 661.7 1540 650.7 1500 639.9 1460 629.3 1420 618.7 1380 608.1 1340 597.7 1300 587.4 1260 577.5 1220 567.8 1180 558.3 1140 548.9 1100 539.7 1060 530.4 1020 520.7 980 510.9 940 500.8 900 490.4 860 479.7 820 469.1 780 458.5 740 447.2 700 435.7 660 424.4 620 413.1 580 401.2 540 389.6 500 378.4 460 366.3 420 353.3 408 349.4 396 345.8 384 342.4 372 338.7 360 335 348 331.4 336 328.1 324 325 312 322.3 300 319.9 298 319.5 295 319 292 318.5 289 318 286 317.4 283 316.9 280 316.2 277 315.6 274 315 271 314.4 268 313.7 265 313 262 312.3 259 311.6 256 311 253 310.5 250 310.1Z" fill="url(#g32)"/>
<path d="M250 310 253 310.4 256 310.8 259 311.4 262 312 265 312.7 268 313.3 271 313.9 274 314.5 277 315.1 280 315.7 283 316.3 286 316.8 289 317.4 292 317.8 295 318.3 298 318.8 300 319.1 312 321.4 324 324.1 336 327 348 330.3 360 333.8 372 337.4 384 341.1 396 344.4 408 347.9 420 351.8 460 364.6 500 376.6 540 387.7 580 399.3 620 411.1 660 422.4 700 433.5 740 445 780 456.3 820 466.9 860 477.5 900 488.2 940 498.6 980 508.6 1020 518.5 1060 528.1 1100 537.5 1140 546.7 1180 556 1220 565.5 1260 575.3 1300 585.3 1340 595.6 1380 606.1 1420 616.8 1460 627.5 1500 638.2 1540 649 1580 660.2 1620 671.3 1660 682.5 1700 694.4 1740 706.6 1748 709 1756 711.3 1764 713.5 1770 714.9 1772.5 715.1 1775 715.3 1777.5 715.1 1780 714.4 1782.5 712.5 1785 709.4 1787.5 704.7 1790 698.8 1791.3 694 1791.3 694 1790 699.3 1787.5 705.9 1785 710.9 1782.5 714.3 1780 716.4 1777.5 717.2 1775 717.5 1772.5 717.4 1770 717.2 1764 715.9 1756 713.8 1748 711.6 1740 709.3 1700 697.3 1660 685.6 1620 674.6 1580 663.7 1540 652.8 1500 642.1 1460 631.6 1420 621.1 1380 610.6 1340 600.3 1300 590.1 1260 580.2 1220 570.6 1180 561.1 1140 551.8 1100 542.6 1060 533.2 1020 523.6 980 513.7 940 503.7 900 493.3 860 482.5 820 471.9 780 461.3 740 449.9 700 438.3 660 427.1 620 415.6 580 403.6 540 391.9 500 380.6 460 368.4 420 355.3 408 351.3 396 347.6 384 344.2 372 340.4 360 336.6 348 332.9 336 329.5 324 326.3 312 323.4 300 320.8 298 320.4 295 319.9 292 319.3 289 318.8 286 318.2 283 317.6 280 316.9 277 316.3 274 315.6 271 314.9 268 314.2 265 313.4 262 312.7 259 311.9 256 311.2 253 310.7 250 310.1Z" fill="url(#g33)"/>
<path d="M250 310.1 253 310.6 256 311.1 259 311.7 262 312.4 265 313.1 268 313.8 271 314.5 274 315.1 277 315.8 280 316.4 283 317 286 317.6 289 318.2 292 318.7 295 319.2 298 319.7 300 320.1 312 322.6 324 325.3 336 328.4 348 331.8 360 335.4 372 339.1 384 342.8 396 346.2 408 349.8 420 353.8 460 366.7 500 378.9 540 390.1 580 401.7 620 413.7 660 425 700 436.2 740 447.8 780 459.1 820 469.7 860 480.3 900 491 940 501.4 980 511.5 1020 521.4 1060 531 1100 540.4 1140 549.5 1180 558.9 1220 568.4 1260 578.1 1300 588 1340 598.2 1380 608.7 1420 619.2 1460 629.8 1500 640.4 1540 651.1 1580 662.2 1620 673.2 1660 684.2 1700 696 1740 708.1 1748 710.4 1756 712.7 1764 714.9 1770 716.2 1772.5 716.4 1775 716.5 1777.5 716.3 1780 715.5 1782.5 713.6 1785 710.2 1787.5 705.4 1790 699.1 1791.3 694 1791.3 694 1790 699.6 1787.5 706.5 1785 711.7 1782.5 715.4 1780 717.5 1777.5 718.4 1775 718.8 1772.5 718.7 1770 718.6 1764 717.3 1756 715.2 1748 713.1 1740 710.8 1700 698.9 1660 687.3 1620 676.5 1580 665.7 1540 654.9 1500 644.3 1460 633.9 1420 623.5 1380 613.1 1340 602.9 1300 592.8 1260 583 1220 573.4 1180 564 1140 554.7 1100 545.5 1060 536.1 1020 526.5 980 516.6 940 506.5 900 496.1 860 485.4 820 474.8 780 464 740 452.7 700 441 660 429.7 620 418.2 580 406.1 540 394.3 500 382.8 460 370.4 420 357.2 408 353.2 396 349.5 384 346 372 342.1 360 338.2 348 334.4 336 330.9 324 327.5 312 324.5 300 321.8 298 321.4 295 320.8 292 320.2 289 319.6 286 319 283 318.3 280 317.6 277 316.9 274 316.2 271 315.4 268 314.7 265 313.9 262 313 259 312.2 256 311.5 253 310.8 250 310.1Z" fill="url(#g34)"/>
<path d="M250 310.1 253 310.7 256 311.3 259 312 262 312.8 265 313.5 268 314.3 271 315 274 315.7 277 316.4 280 317.1 283 317.7 286 318.4 289 319 292 319.5 295 320.1 298 320.6 300 321 312 323.7 324 326.6 336 329.8 348 333.3 360 337 372 340.8 384 344.6 396 348 408 351.7 420 355.7 460 368.8 500 381.1 540 392.4 580 404.2 620 416.2 660 427.7 700 438.9 740 450.5 780 461.9 820 472.6 860 483.1 900 493.9 940 504.3 980 514.4 1020 524.2 1060 533.9 1100 543.2 1140 552.4 1180 561.7 1220 571.2 1260 580.8 1300 590.7 1340 600.9 1380 611.2 1420 621.6 1460 632.1 1500 642.6 1540 653.2 1580 664.2 1620 675 1660 686 1700 697.7 1740 709.6 1748 711.9 1756 714.1 1764 716.3 1770 717.5 1772.5 717.7 1775 717.8 1777.5 717.5 1780 716.6 1782.5 714.6 1785 711.1 1787.5 706 1790 699.4 1791.3 694 1791.3 694 1790 700 1787.5 707.1 1785 712.6 1782.5 716.4 1780 718.7 1777.5 719.6 1775 720 1772.5 720 1770 719.9 1764 718.7 1756 716.7 1748 714.5 1740 712.3 1700 700.6 1660 689.1 1620 678.3 1580 667.7 1540 657 1500 646.5 1460 636.3 1420 625.9 1380 615.7 1340 605.5 1300 595.5 1260 585.8 1220 576.2 1180 566.8 1140 557.5 1100 548.3 1060 539 1020 529.3 980 519.5 940 509.4 900 499 860 488.2 820 477.6 780 466.8 740 455.4 700 443.7 660 432.3 620 420.7 580 408.5 540 396.6 500 385 460 372.5 420 359.1 408 355.1 396 351.3 384 347.7 372 343.8 360 339.8 348 335.9 336 332.2 324 328.8 312 325.6 300 322.7 298 322.3 295 321.7 292 321 289 320.4 286 319.7 283 319 280 318.3 277 317.5 274 316.7 271 316 268 315.1 265 314.3 262 313.4 259 312.5 256 311.7 253 310.9 250 310.1Z" fill="url(#g35)"/>
<path d="M250 310.1 253 310.8 256 311.5 259 312.3 262 313.1 265 313.9 268 314.8 271 315.5 274 316.3 277 317 280 317.7 283 318.4 286 319.1 289 319.8 292 320.4 295 321 298 321.6 300 322 312 324.8 324 327.8 336 331.2 348 334.8 360 338.6 372 342.5 384 346.4 396 349.9 408 353.6 420 357.6 460 370.9 500 383.3 540 394.8 580 406.6 620 418.7 660 430.3 700 441.6 740 453.3 780 464.7 820 475.4 860 486 900 496.7 940 507.2 980 517.2 1020 527.1 1060 536.7 1100 546.1 1140 555.3 1180 564.6 1220 574 1260 583.6 1300 593.4 1340 603.5 1380 613.7 1420 624.1 1460 634.4 1500 644.8 1540 655.3 1580 666.1 1620 676.9 1660 687.7 1700 699.3 1740 711.1 1748 713.4 1756 715.6 1764 717.6 1770 718.9 1772.5 719 1775 719.1 1777.5 718.7 1780 717.8 1782.5 715.6 1785 711.9 1787.5 706.6 1790 699.7 1791.3 694 1791.3 694 1790 700.3 1787.5 707.7 1785 713.4 1782.5 717.4 1780 719.8 1777.5 720.8 1775 721.3 1772.5 721.3 1770 721.2 1764 720.1 1756 718.1 1748 716 1740 713.8 1700 702.2 1660 690.9 1620 680.2 1580 669.6 1540 659.1 1500 648.7 1460 638.6 1420 628.4 1380 618.2 1340 608.1 1300 598.2 1260 588.5 1220 579.1 1180 569.7 1140 560.4 1100 551.2 1060 541.8 1020 532.2 980 522.3 940 512.3 900 501.8 860 491 820 480.4 780 469.6 740 458.2 700 446.4 660 435 620 423.3 580 411 540 398.9 500 387.2 460 374.6 420 361.1 408 357 396 353.1 384 349.5 372 345.5 360 341.4 348 337.4 336 333.6 324 330 312 326.7 300 323.7 298 323.2 295 322.5 292 321.9 289 321.2 286 320.5 283 319.7 280 318.9 277 318.1 274 317.3 271 316.5 268 315.6 265 314.7 262 313.8 259 312.8 256 311.9 253 311 250 310.1Z" fill="url(#g36)"/>
<path d="M250 310.1 253 310.9 256 311.7 259 312.6 262 313.5 265 314.4 268 315.2 271 316.1 274 316.9 277 317.6 280 318.4 283 319.2 286 319.9 289 320.6 292 321.2 295 321.9 298 322.5 300 322.9 312 325.9 324 329.1 336 332.5 348 336.3 360 340.2 372 344.2 384 348.1 396 351.7 408 355.5 420 359.6 460 373 500 385.5 540 397.1 580 409.1 620 421.3 660 432.9 700 444.3 740 456 780 467.5 820 478.2 860 488.8 900 499.6 940 510 980 520.1 1020 530 1060 539.6 1100 549 1140 558.2 1180 567.5 1220 576.8 1260 586.4 1300 596.1 1340 606.1 1380 616.2 1420 626.5 1460 636.8 1500 647 1540 657.4 1580 668.1 1620 678.7 1660 689.5 1700 700.9 1740 712.7 1748 714.8 1756 717 1764 719 1770 720.2 1772.5 720.3 1775 720.3 1777.5 719.9 1780 718.9 1782.5 716.6 1785 712.8 1787.5 707.2 1790 700 1791.3 694 1791.3 694 1790 700.6 1787.5 708.4 1785 714.3 1782.5 718.4 1780 720.9 1777.5 722 1775 722.6 1772.5 722.6 1770 722.6 1764 721.5 1756 719.5 1748 717.5 1740 715.3 1700 703.9 1660 692.6 1620 682.1 1580 671.6 1540 661.1 1500 650.9 1460 640.9 1420 630.8 1380 620.7 1340 610.8 1300 600.9 1260 591.3 1220 581.9 1180 572.5 1140 563.3 1100 554.1 1060 544.7 1020 535.1 980 525.2 940 515.1 900 504.7 860 493.9 820 483.2 780 472.4 740 460.9 700 449.1 660 437.6 620 425.8 580 413.4 540 401.3 500 389.5 460 376.7 420 363 408 358.9 396 354.9 384 351.3 372 347.2 360 343 348 338.9 336 335 324 331.3 312 327.8 300 324.6 298 324.2 295 323.4 292 322.7 289 322 286 321.2 283 320.4 280 319.6 277 318.8 274 317.9 271 317 268 316.1 265 315.1 262 314.1 259 313.1 256 312.1 253 311.2 250 310.1Z" fill="url(#g37)"/>
<path d="M250 310.1 253 311.1 256 311.9 259 312.9 262 313.8 265 314.8 268 315.7 271 316.6 274 317.5 277 318.3 280 319.1 283 319.9 286 320.6 289 321.4 292 322.1 295 322.7 298 323.4 300 323.9 312 327 324 330.3 336 333.9 348 337.8 360 341.8 372 345.8 384 349.9 396 353.5 408 357.4 420 361.5 460 375.1 500 387.7 540 399.4 580 411.5 620 423.8 660 435.5 700 447 740 458.8 780 470.2 820 481 860 491.7 900 502.5 940 512.9 980 523 1020 532.8 1060 542.5 1100 551.8 1140 561 1180 570.3 1220 579.7 1260 589.2 1300 598.8 1340 608.7 1380 618.8 1420 628.9 1460 639.1 1500 649.2 1540 659.5 1580 670.1 1620 680.6 1660 691.2 1700 702.6 1740 714.2 1748 716.3 1756 718.4 1764 720.4 1770 721.5 1772.5 721.6 1775 721.6 1777.5 721.1 1780 720 1782.5 717.6 1785 713.6 1787.5 707.9 1790 700.3 1791.3 694 1791.3 694 1790 700.9 1787.5 709 1785 715.1 1782.5 719.4 1780 722 1777.5 723.2 1775 723.8 1772.5 723.9 1770 723.9 1764 722.9 1756 721 1748 718.9 1740 716.8 1700 705.5 1660 694.4 1620 683.9 1580 673.6 1540 663.2 1500 653.1 1460 643.2 1420 633.2 1380 623.3 1340 613.4 1300 603.6 1260 594.1 1220 584.7 1180 575.4 1140 566.1 1100 557 1060 547.6 1020 537.9 980 528.1 940 518 900 507.5 860 496.7 820 486 780 475.2 740 463.7 700 451.8 660 440.2 620 428.4 580 415.9 540 403.6 500 391.7 460 378.8 420 365 408 360.7 396 356.8 384 353 372 348.9 360 344.6 348 340.4 336 336.4 324 332.5 312 329 300 325.6 298 325.1 295 324.3 292 323.6 289 322.8 286 322 283 321.1 280 320.3 277 319.4 274 318.5 271 317.6 268 316.6 265 315.5 262 314.5 259 313.4 256 312.3 253 311.3 250 310.2Z" fill="url(#g38)"/>
<path d="M250 310.1 253 311.2 256 312.2 259 313.2 262 314.2 265 315.2 268 316.2 271 317.1 274 318 277 318.9 280 319.8 283 320.6 286 321.4 289 322.2 292 322.9 295 323.6 298 324.4 300 324.9 312 328.1 324 331.6 336 335.3 348 339.3 360 343.4 372 347.5 384 351.6 396 355.3 408 359.3 420 363.4 460 377.2 500 390 540 401.8 580 414 620 426.4 660 438.2 700 449.7 740 461.5 780 473 820 483.8 860 494.5 900 505.3 940 515.8 980 525.8 1020 535.7 1060 545.3 1100 554.7 1140 563.9 1180 573.2 1220 582.5 1260 591.9 1300 601.5 1340 611.3 1380 621.3 1420 631.3 1460 641.4 1500 651.4 1540 661.6 1580 672 1620 682.5 1660 693 1700 704.2 1740 715.7 1748 717.8 1756 719.8 1764 721.8 1770 722.9 1772.5 722.9 1775 722.8 1777.5 722.3 1780 721.2 1782.5 718.6 1785 714.5 1787.5 708.5 1790 700.6 1791.3 694 1791.3 694 1790 701.2 1787.5 709.6 1785 716 1782.5 720.4 1780 723.2 1777.5 724.4 1775 725.1 1772.5 725.2 1770 725.2 1764 724.3 1756 722.4 1748 720.4 1740 718.4 1700 707.2 1660 696.1 1620 685.8 1580 675.6 1540 665.3 1500 655.3 1460 645.5 1420 635.6 1380 625.8 1340 616 1300 606.3 1260 596.9 1220 587.5 1180 578.3 1140 569 1100 559.8 1060 550.4 1020 540.8 980 530.9 940 520.9 900 510.4 860 499.6 820 488.9 780 478 740 466.4 700 454.5 660 442.8 620 430.9 580 418.3 540 406 500 393.9 460 380.9 420 366.9 408 362.6 396 358.6 384 354.8 372 350.5 360 346.2 348 342 336 337.8 324 333.8 312 330.1 300 326.6 298 326 295 325.2 292 324.4 289 323.6 286 322.7 283 321.9 280 320.9 277 320 274 319.1 271 318.1 268 317.1 265 316 262 314.9 259 313.7 256 312.6 253 311.4 250 310.2Z" fill="url(#g39)"/>
<path d="M250 310.2 253 311.3 256 312.4 259 313.5 262 314.6 265 315.6 268 316.7 271 317.7 274 318.6 277 319.5 280 320.4 283 321.3 286 322.1 289 323 292 323.8 295 324.5 298 325.3 300 325.8 312 329.2 324 332.8 336 336.7 348 340.8 360 345 372 349.2 384 353.4 396 357.2 408 361.2 420 365.4 460 379.3 500 392.2 540 404.1 580 416.4 620 428.9 660 440.8 700 452.4 740 464.3 780 475.8 820 486.7 860 497.4 900 508.2 940 518.6 980 528.7 1020 538.6 1060 548.2 1100 557.6 1140 566.8 1180 576 1220 585.3 1260 594.7 1300 604.2 1340 614 1380 623.8 1420 633.7 1460 643.7 1500 653.6 1540 663.7 1580 674 1620 684.3 1660 694.8 1700 705.9 1740 717.2 1748 719.3 1756 721.3 1764 723.2 1770 724.2 1772.5 724.2 1775 724.1 1777.5 723.5 1780 722.3 1782.5 719.7 1785 715.3 1787.5 709.1 1790 700.9 1791.3 694 1791.3 694 1790 701.5 1787.5 710.2 1785 716.8 1782.5 721.5 1780 724.3 1777.5 725.7 1775 726.3 1772.5 726.5 1770 726.6 1764 725.6 1756 723.8 1748 721.9 1740 719.9 1700 708.8 1660 697.9 1620 687.6 1580 677.5 1540 667.4 1500 657.5 1460 647.8 1420 638 1380 628.3 1340 618.6 1300 609 1260 599.6 1220 590.4 1180 581.1 1140 571.9 1100 562.7 1060 553.3 1020 543.7 980 533.8 940 523.8 900 513.3 860 502.4 820 491.7 780 480.8 740 469.2 700 457.2 660 445.5 620 433.5 580 420.8 540 408.3 500 396.1 460 383 420 368.8 408 364.5 396 360.4 384 356.5 372 352.2 360 347.8 348 343.5 336 339.2 324 335 312 331.2 300 327.5 298 326.9 295 326.1 292 325.3 289 324.4 286 323.5 283 322.6 280 321.6 277 320.6 274 319.6 271 318.6 268 317.5 265 316.4 262 315.2 259 314 256 312.8 253 311.6 250 310.2Z" fill="url(#g40)"/>
<path d="M250 310.2 253 311.5 256 312.6 259 313.8 262 314.9 265 316.1 268 317.2 271 318.2 274 319.2 277 320.2 280 321.1 283 322 286 322.9 289 323.8 292 324.6 295 325.4 298 326.2 300 326.8 312 330.3 324 334.1 336 338.1 348 342.3 360 346.6 372 350.9 384 355.2 396 359 408 363.1 420 367.3 460 381.3 500 394.4 540 406.5 580 418.9 620 431.5 660 443.4 700 455.1 740 467 780 478.6 820 489.5 860 500.2 900 511 940 521.5 980 531.6 1020 541.4 1060 551.1 1100 560.5 1140 569.6 1180 578.9 1220 588.2 1260 597.5 1300 606.9 1340 616.6 1380 626.3 1420 636.2 1460 646 1500 655.8 1540 665.8 1580 676 1620 686.2 1660 696.5 1700 707.5 1740 718.7 1748 720.7 1756 722.7 1764 724.6 1770 725.5 1772.5 725.5 1775 725.4 1777.5 724.7 1780 723.4 1782.5 720.7 1785 716.2 1787.5 709.7 1790 701.2 1791.3 694 1791.3 694 1790 701.8 1787.5 710.9 1785 717.7 1782.5 722.5 1780 725.4 1777.5 726.9 1775 727.6 1772.5 727.8 1770 727.9 1764 727 1756 725.3 1748 723.4 1740 721.4 1700 710.4 1660 699.6 1620 689.5 1580 679.5 1540 669.5 1500 659.7 1460 650.1 1420 640.5 1380 630.8 1340 621.2 1300 611.7 1260 602.4 1220 593.2 1180 584 1140 574.8 1100 565.6 1060 556.2 1020 546.5 980 536.7 940 526.6 900 516.1 860 505.3 820 494.5 780 483.6 740 471.9 700 459.9 660 448.1 620 436 580 423.2 540 410.6 500 398.3 460 385.1 420 370.8 408 366.4 396 362.3 384 358.3 372 353.9 360 349.4 348 345 336 340.5 324 336.3 312 332.3 300 328.5 298 327.9 295 327 292 326.1 289 325.2 286 324.3 283 323.3 280 322.3 277 321.3 274 320.2 271 319.1 268 318 265 316.8 262 315.6 259 314.3 256 313 253 311.7 250 310.2Z" fill="url(#g41)"/>
<path d="M250 310.2 253 311.6 256 312.8 259 314.1 262 315.3 265 316.5 268 317.6 271 318.7 274 319.8 277 320.8 280 321.8 283 322.7 286 323.7 289 324.6 292 325.4 295 326.3 298 327.1 300 327.7 312 331.4 324 335.3 336 339.5 348 343.8 360 348.2 372 352.6 384 356.9 396 360.8 408 364.9 420 369.3 460 383.4 500 396.6 540 408.8 580 421.3 620 434 660 446 700 457.8 740 469.8 780 481.4 820 492.3 860 503 900 513.9 940 524.4 980 534.4 1020 544.3 1060 553.9 1100 563.3 1140 572.5 1180 581.7 1220 591 1260 600.2 1300 609.6 1340 619.2 1380 628.9 1420 638.6 1460 648.3 1500 658 1540 667.9 1580 678 1620 688 1660 698.3 1700 709.2 1740 720.2 1748 722.2 1756 724.1 1764 726 1770 726.9 1772.5 726.8 1775 726.6 1777.5 725.9 1780 724.6 1782.5 721.7 1785 717 1787.5 710.4 1790 701.5 1791.3 694 1791.3 694 1790 702.1 1787.5 711.5 1785 718.5 1782.5 723.5 1780 726.6 1777.5 728.1 1775 728.9 1772.5 729.1 1770 729.2 1764 728.4 1756 726.7 1748 724.8 1740 722.9 1700 712.1 1660 701.4 1620 691.3 1580 681.5 1540 671.6 1500 661.9 1460 652.4 1420 642.9 1380 633.4 1340 623.9 1300 614.4 1260 605.2 1220 596 1180 586.8 1140 577.6 1100 568.4 1060 559 1020 549.4 980 539.5 940 529.5 900 519 860 508.1 820 497.3 780 486.4 740 474.7 700 462.6 660 450.7 620 438.5 580 425.7 540 413 500 400.6 460 387.1 420 372.7 408 368.3 396 364.1 384 360.1 372 355.6 360 351 348 346.5 336 341.9 324 337.6 312 333.4 300 329.4 298 328.8 295 327.9 292 326.9 289 326 286 325 283 324 280 323 277 321.9 274 320.8 271 319.7 268 318.5 265 317.2 262 315.9 259 314.6 256 313.2 253 311.8 250 310.2Z" fill="url(#g42)"/>
<path d="M250 310.2 253 311.7 256 313.1 259 314.4 262 315.7 265 316.9 268 318.1 271 319.3 274 320.4 277 321.4 280 322.4 283 323.4 286 324.4 289 325.4 292 326.3 295 327.2 298 328.1 300 328.7 312 332.5 324 336.6 336 340.8 348 345.3 360 349.8 372 354.3 384 358.7 396 362.7 408 366.8 420 371.2 460 385.5 500 398.8 540 411.2 580 423.8 620 436.6 660 448.7 700 460.5 740 472.5 780 484.2 820 495.1 860 505.9 900 516.8 940 527.2 980 537.3 1020 547.2 1060 556.8 1100 566.2 1140 575.4 1180 584.6 1220 593.8 1260 603 1300 612.3 1340 621.8 1380 631.4 1420 641 1460 650.6 1500 660.2 1540 670 1580 679.9 1620 689.9 1660 700 1700 710.8 1740 721.7 1748 723.7 1756 725.6 1764 727.3 1770 728.2 1772.5 728.1 1775 727.9 1777.5 727.1 1780 725.7 1782.5 722.7 1785 717.9 1787.5 711 1790 701.8 1791.3 694 1791.3 694 1790 702.4 1787.5 712.1 1785 719.4 1782.5 724.5 1780 727.7 1777.5 729.3 1775 730.1 1772.5 730.4 1770 730.6 1764 729.8 1756 728.1 1748 726.3 1740 724.4 1700 713.7 1660 703.1 1620 693.2 1580 683.4 1540 673.7 1500 664.2 1460 654.7 1420 645.3 1380 635.9 1340 626.5 1300 617.1 1260 607.9 1220 598.8 1180 589.7 1140 580.5 1100 571.3 1060 561.9 1020 552.3 980 542.4 940 532.4 900 521.8 860 510.9 820 500.1 780 489.2 740 477.4 700 465.3 660 453.3 620 441.1 580 428.1 540 415.3 500 402.8 460 389.2 420 374.6 408 370.2 396 365.9 384 361.8 372 357.3 360 352.6 348 348 336 343.3 324 338.8 312 334.5 300 330.4 298 329.7 295 328.8 292 327.8 289 326.8 286 325.8 283 324.7 280 323.6 277 322.5 274 321.4 271 320.2 268 319 265 317.7 262 316.3 259 314.9 256 313.5 253 312 250 310.2Z" fill="url(#g43)"/>
<path d="M250 310.2 253 311.9 256 313.3 259 314.7 262 316 265 317.3 268 318.6 271 319.8 274 320.9 277 322 280 323.1 283 324.2 286 325.2 289 326.2 292 327.1 295 328.1 298 329 300 329.6 312 333.6 324 337.8 336 342.2 348 346.8 360 351.4 372 356 384 360.5 396 364.5 408 368.7 420 373.1 460 387.6 500 401.1 540 413.5 580 426.2 620 439.1 660 451.3 700 463.2 740 475.3 780 487 820 497.9 860 508.7 900 519.6 940 530.1 980 540.2 1020 550 1060 559.7 1100 569.1 1140 578.3 1180 587.5 1220 596.6 1260 605.8 1300 615 1340 624.4 1380 633.9 1420 643.4 1460 652.9 1500 662.4 1540 672.1 1580 681.9 1620 691.8 1660 701.8 1700 712.4 1740 723.2 1748 725.2 1756 727 1764 728.7 1770 729.5 1772.5 729.4 1775 729.1 1777.5 728.3 1780 726.8 1782.5 723.7 1785 718.7 1787.5 711.6 1790 702.1 1791.3 694 1791.3 694 1790 702.7 1787.5 712.7 1785 720.2 1782.5 725.5 1780 728.8 1777.5 730.5 1775 731.4 1772.5 731.7 1770 731.9 1764 731.2 1756 729.6 1748 727.8 1740 725.9 1700 715.4 1660 704.9 1620 695.1 1580 685.4 1540 675.8 1500 666.4 1460 657.1 1420 647.7 1380 638.4 1340 629.1 1300 619.8 1260 610.7 1220 601.7 1180 592.5 1140 583.4 1100 574.2 1060 564.8 1020 555.1 980 545.3 940 535.2 900 524.7 860 513.8 820 503 780 492 740 480.2 700 468 660 456 620 443.6 580 430.6 540 417.7 500 405 460 391.3 420 376.6 408 372.1 396 367.8 384 363.6 372 359 360 354.2 348 349.5 336 344.7 324 340.1 312 335.6 300 331.3 298 330.7 295 329.6 292 328.6 289 327.6 286 326.5 283 325.4 280 324.3 277 323.2 274 322 271 320.7 268 319.5 265 318.1 262 316.7 259 315.2 256 313.7 253 312.1 250 310.3Z" fill="url(#g44)"/>
<path d="M250 310.2 253 312 256 313.5 259 315 262 316.4 265 317.8 268 319.1 271 320.3 274 321.5 277 322.7 280 323.8 283 324.9 286 325.9 289 327 292 328 295 329 298 329.9 300 330.6 312 334.7 324 339.1 336 343.6 348 348.3 360 353 372 357.7 384 362.2 396 366.3 408 370.6 420 375.1 460 389.7 500 403.3 540 415.8 580 428.7 620 441.6 660 453.9 700 465.9 740 478 780 489.8 820 500.8 860 511.6 900 522.5 940 533 980 543 1020 552.9 1060 562.5 1100 571.9 1140 581.1 1180 590.3 1220 599.5 1260 608.6 1300 617.7 1340 627 1380 636.4 1420 645.8 1460 655.3 1500 664.6 1540 674.2 1580 683.9 1620 693.6 1660 703.5 1700 714.1 1740 724.7 1748 726.6 1756 728.4 1764 730.1 1770 730.9 1772.5 730.7 1775 730.4 1777.5 729.5 1780 728 1782.5 724.7 1785 719.6 1787.5 712.3 1790 702.4 1791.3 694 1791.3 694 1790 703 1787.5 713.4 1785 721.1 1782.5 726.5 1780 730 1777.5 731.7 1775 732.6 1772.5 733 1770 733.2 1764 732.6 1756 731 1748 729.3 1740 727.4 1700 717 1660 706.6 1620 696.9 1580 687.4 1540 677.9 1500 668.6 1460 659.4 1420 650.2 1380 640.9 1340 631.7 1300 622.5 1260 613.5 1220 604.5 1180 595.4 1140 586.3 1100 577 1060 567.6 1020 558 980 548.1 940 538.1 900 527.6 860 516.6 820 505.8 780 494.8 740 482.9 700 470.7 660 458.6 620 446.2 580 433 540 420 500 407.2 460 393.4 420 378.5 408 374 396 369.6 384 365.4 372 360.7 360 355.8 348 351 336 346.1 324 341.3 312 336.7 300 332.3 298 331.6 295 330.5 292 329.5 289 328.4 286 327.3 283 326.1 280 325 277 323.8 274 322.6 271 321.3 268 319.9 265 318.5 262 317 259 315.5 256 313.9 253 312.2 250 310.3Z" fill="url(#g45)"/>
<path d="M250 310.3 253 312.1 256 313.7 259 315.3 262 316.7 265 318.2 268 319.6 271 320.9 274 322.1 277 323.3 280 324.5 283 325.6 286 326.7 289 327.8 292 328.8 295 329.8 298 330.9 300 331.6 312 335.9 324 340.3 336 345 348 349.8 360 354.6 372 359.4 384 364 396 368.2 408 372.5 420 377 460 391.8 500 405.5 540 418.2 580 431.1 620 444.2 660 456.5 700 468.6 740 480.8 780 492.6 820 503.6 860 514.4 900 525.3 940 535.8 980 545.9 1020 555.8 1060 565.4 1100 574.8 1140 584 1180 593.2 1220 602.3 1260 611.3 1300 620.4 1340 629.7 1380 639 1420 648.3 1460 657.6 1500 666.8 1540 676.3 1580 685.8 1620 695.5 1660 705.3 1700 715.7 1740 726.2 1748 728.1 1756 729.9 1764 731.5 1770 732.2 1772.5 732 1775 731.6 1777.5 730.7 1780 729.1 1782.5 725.7 1785 720.4 1787.5 712.9 1790 702.8 1791.3 694 1791.3 694 1790 703.3 1787.5 714 1785 721.9 1782.5 727.6 1780 731.1 1777.5 732.9 1775 733.9 1772.5 734.3 1770 734.6 1764 734 1756 732.4 1748 730.7 1740 728.9 1700 718.6 1660 708.4 1620 698.8 1580 689.4 1540 680 1500 670.8 1460 661.7 1420 652.6 1380 643.5 1340 634.3 1300 625.2 1260 616.3 1220 607.3 1180 598.3 1140 589.1 1100 579.9 1060 570.5 1020 560.9 980 551 940 541 900 530.4 860 519.5 820 508.6 780 497.6 740 485.7 700 473.4 660 461.2 620 448.7 580 435.5 540 422.3 500 409.4 460 395.5 420 380.5 408 375.9 396 371.4 384 367.1 372 362.4 360 357.4 348 352.5 336 347.4 324 342.6 312 337.8 300 333.3 298 332.5 295 331.4 292 330.3 289 329.2 286 328 283 326.9 280 325.6 277 324.4 274 323.1 271 321.8 268 320.4 265 318.9 262 317.4 259 315.8 256 314.1 253 312.3 250 310.3Z" fill="url(#g46)"/>
<path d="M250 310.3 253 312.2 256 314 259 315.6 262 317.1 265 318.6 268 320 271 321.4 274 322.7 277 323.9 280 325.1 283 326.3 286 327.4 289 328.6 292 329.7 295 330.7 298 331.8 300 332.5 312 337 324 341.6 336 346.4 348 351.3 360 356.2 372 361.1 384 365.8 396 370 408 374.4 420 379 460 393.9 500 407.7 540 420.5 580 433.6 620 446.7 660 459.2 700 471.3 740 483.5 780 495.4 820 506.4 860 517.2 900 528.2 940 538.7 980 548.8 1020 558.6 1060 568.3 1100 577.7 1140 586.9 1180 596 1220 605.1 1260 614.1 1300 623.1 1340 632.3 1380 641.5 1420 650.7 1460 659.9 1500 669.1 1540 678.4 1580 687.8 1620 697.3 1660 707 1700 717.4 1740 727.7 1748 729.6 1756 731.3 1764 732.9 1770 733.5 1772.5 733.3 1775 732.9 1777.5 731.9 1780 730.2 1782.5 726.8 1785 721.3 1787.5 713.5 1790 703.1 1791.3 694 1791.3 694 1790 703.6 1787.5 714.6 1785 722.8 1782.5 728.6 1780 732.2 1777.5 734.1 1775 735.1 1772.5 735.6 1770 735.9 1764 735.3 1756 733.9 1748 732.2 1740 730.4 1700 720.3 1660 710.1 1620 700.6 1580 691.3 1540 682.1 1500 673 1460 664 1420 655 1380 646 1340 636.9 1300 627.9 1260 619 1220 610.1 1180 601.1 1140 592 1100 582.8 1060 573.4 1020 563.7 980 553.9 940 543.8 900 533.3 860 522.3 820 511.4 780 500.3 740 488.4 700 476.1 660 463.8 620 451.3 580 437.9 540 424.7 500 411.7 460 397.6 420 382.4 408 377.7 396 373.2 384 368.9 372 364.1 360 359 348 354 336 348.8 324 343.8 312 338.9 300 334.2 298 333.4 295 332.3 292 331.2 289 330 286 328.8 283 327.6 280 326.3 277 325 274 323.7 271 322.3 268 320.9 265 319.4 262 317.8 259 316.1 256 314.4 253 312.5 250 310.3Z" fill="url(#g47)"/>
<path d="M250 310.3 253 312.4 256 314.2 259 315.9 262 317.5 265 319 268 320.5 271 321.9 274 323.3 277 324.6 280 325.8 283 327 286 328.2 289 329.4 292 330.5 295 331.6 298 332.7 300 333.5 312 338.1 324 342.8 336 347.7 348 352.8 360 357.8 372 362.7 384 367.5 396 371.8 408 376.3 420 380.9 460 396 500 409.9 540 422.9 580 436 620 449.3 660 461.8 700 474 740 486.3 780 498.2 820 509.2 860 520.1 900 531 940 541.6 980 551.6 1020 561.5 1060 571.1 1100 580.5 1140 589.8 1180 598.9 1220 607.9 1260 616.9 1300 625.8 1340 634.9 1380 644 1420 653.1 1460 662.2 1500 671.3 1540 680.4 1580 689.8 1620 699.2 1660 708.8 1700 719 1740 729.3 1748 731.1 1756 732.7 1764 734.3 1770 734.9 1772.5 734.6 1775 734.2 1777.5 733.1 1780 731.3 1782.5 727.8 1785 722.1 1787.5 714.1 1790 703.4 1791.3 694 1791.3 694 1790 703.9 1787.5 715.2 1785 723.6 1782.5 729.6 1780 733.4 1777.5 735.3 1775 736.4 1772.5 736.9 1770 737.2 1764 736.7 1756 735.3 1748 733.7 1740 731.9 1700 721.9 1660 711.9 1620 702.5 1580 693.3 1540 684.2 1500 675.2 1460 666.3 1420 657.4 1380 648.5 1340 639.6 1300 630.6 1260 621.8 1220 613 1180 604 1140 594.9 1100 585.6 1060 576.2 1020 566.6 980 556.7 940 546.7 900 536.1 860 525.1 820 514.2 780 503.1 740 491.2 700 478.8 660 466.5 620 453.8 580 440.4 540 427 500 413.9 460 399.7 420 384.3 408 379.6 396 375.1 384 370.7 372 365.8 360 360.6 348 355.5 336 350.2 324 345.1 312 340 300 335.2 298 334.4 295 333.2 292 332 289 330.8 286 329.6 283 328.3 280 327 277 325.7 274 324.3 271 322.9 268 321.4 265 319.8 262 318.1 259 316.4 256 314.6 253 312.6 250 310.3Z" fill="url(#g48)"/>
<path d="M250 310.3 253 312.5 256 314.4 259 316.2 262 317.8 265 319.4 268 321 271 322.5 274 323.8 277 325.2 280 326.5 283 327.7 286 329 289 330.2 292 331.4 295 332.5 298 333.7 300 334.4 312 339.2 324 344.1 336 349.1 348 354.3 360 359.4 372 364.4 384 369.3 396 373.6 408 378.2 420 382.8 460 398 500 412.2 540 425.2 580 438.4 620 451.8 660 464.4 700 476.7 740 489 780 501 820 512 860 522.9 900 533.9 940 544.5 980 554.5 1020 564.4 1060 574 1100 583.4 1140 592.6 1180 601.7 1220 610.8 1260 619.6 1300 628.5 1340 637.5 1380 646.5 1420 655.5 1460 664.5 1500 673.5 1540 682.5 1580 691.8 1620 701 1660 710.5 1700 720.6 1740 730.8 1748 732.5 1756 734.2 1764 735.7 1770 736.2 1772.5 735.9 1775 735.4 1777.5 734.3 1780 732.5 1782.5 728.8 1785 723 1787.5 714.8 1790 703.7 1791.3 694 1791.3 694 1790 704.2 1787.5 715.9 1785 724.5 1782.5 730.6 1780 734.5 1777.5 736.5 1775 737.7 1772.5 738.2 1770 738.6 1764 738.1 1756 736.7 1748 735.2 1740 733.5 1700 723.6 1660 713.7 1620 704.4 1580 695.3 1540 686.3 1500 677.4 1460 668.6 1420 659.8 1380 651 1340 642.2 1300 633.3 1260 624.6 1220 615.8 1180 606.8 1140 597.7 1100 588.5 1060 579.1 1020 569.5 980 559.6 940 549.6 900 539 860 528 820 517.1 780 505.9 740 493.9 700 481.5 660 469.1 620 456.3 580 442.8 540 429.4 500 416.1 460 401.8 420 386.3 408 381.5 396 376.9 384 372.4 372 367.4 360 362.2 348 357 336 351.6 324 346.3 312 341.2 300 336.1 298 335.3 295 334.1 292 332.9 289 331.6 286 330.3 283 329 280 327.7 277 326.3 274 324.9 271 323.4 268 321.8 265 320.2 262 318.5 259 316.7 256 314.8 253 312.7 250 310.3Z" fill="url(#g49)"/>
<path d="M250 310.3 253 312.6 256 314.6 259 316.5 262 318.2 265 319.9 268 321.5 271 323 274 324.4 277 325.8 280 327.1 283 328.4 286 329.7 289 331 292 332.2 295 333.4 298 334.6 300 335.4 312 340.3 324 345.3 336 350.5 348 355.8 360 361 372 366.1 384 371 396 375.5 408 380 420 384.8 460 400.1 500 414.4 540 427.5 580 440.9 620 454.4 660 467 700 479.4 740 491.8 780 503.8 820 514.9 860 525.8 900 536.8 940 547.3 980 557.4 1020 567.2 1060 576.9 1100 586.3 1140 595.5 1180 604.6 1220 613.6 1260 622.4 1300 631.2 1340 640.1 1380 649.1 1420 657.9 1460 666.8 1500 675.7 1540 684.6 1580 693.7 1620 702.9 1660 712.3 1700 722.3 1740 732.3 1748 734 1756 735.6 1764 737 1770 737.5 1772.5 737.2 1775 736.7 1777.5 735.5 1780 733.6 1782.5 729.8 1785 723.8 1787.5 715.4 1790 704 1791.3 694 1791.3 694 1790 704.5 1787.5 716.5 1785 725.3 1782.5 731.6 1780 735.6 1777.5 737.7 1775 738.9 1772.5 739.5 1770 739.9 1764 739.5 1756 738.2 1748 736.6 1740 735 1700 725.2 1660 715.4 1620 706.2 1580 697.2 1540 688.4 1500 679.6 1460 670.9 1420 662.3 1380 653.6 1340 644.8 1300 636 1260 627.3 1220 618.6 1180 609.7 1140 600.6 1100 591.4 1060 582 1020 572.3 980 562.5 940 552.4 900 541.8 860 530.8 820 519.9 780 508.7 740 496.7 700 484.2 660 471.7 620 458.9 580 445.3 540 431.7 500 418.3 460 403.8 420 388.2 408 383.4 396 378.7 384 374.2 372 369.1 360 363.8 348 358.5 336 353 324 347.6 312 342.3 300 337.1 298 336.2 295 335 292 333.7 289 332.4 286 331.1 283 329.7 280 328.3 277 326.9 274 325.5 271 323.9 268 322.3 265 320.6 262 318.8 259 317 256 315 253 312.9 250 310.4Z" fill="url(#g50)"/>
<path d="M250 310.3 253 312.8 256 314.9 259 316.8 262 318.6 265 320.3 268 322 271 323.5 274 325 277 326.4 280 327.8 283 329.2 286 330.5 289 331.8 292 333 295 334.3 298 335.5 300 336.3 312 341.4 324 346.6 336 351.9 348 357.3 360 362.6 372 367.8 384 372.8 396 377.3 408 381.9 420 386.7 460 402.2 500 416.6 540 429.9 580 443.3 620 456.9 660 469.7 700 482.1 740 494.5 780 506.5 820 517.7 860 528.6 900 539.6 940 550.2 980 560.2 1020 570.1 1060 579.7 1100 589.1 1140 598.4 1180 607.5 1220 616.4 1260 625.2 1300 633.9 1340 642.8 1380 651.6 1420 660.4 1460 669.1 1500 677.9 1540 686.7 1580 695.7 1620 704.8 1660 714 1700 723.9 1740 733.8 1748 735.5 1756 737 1764 738.4 1770 738.9 1772.5 738.5 1775 737.9 1777.5 736.8 1780 734.7 1782.5 730.8 1785 724.7 1787.5 716 1790 704.3 1791.3 694 1791.3 694 1790 704.8 1787.5 717.1 1785 726.2 1782.5 732.6 1780 736.8 1777.5 738.9 1775 740.2 1772.5 740.8 1770 741.2 1764 740.9 1756 739.6 1748 738.1 1740 736.5 1700 726.9 1660 717.2 1620 708.1 1580 699.2 1540 690.4 1500 681.8 1460 673.2 1420 664.7 1380 656.1 1340 647.4 1300 638.7 1260 630.1 1220 621.4 1180 612.5 1140 603.5 1100 594.3 1060 584.8 1020 575.2 980 565.3 940 555.3 900 544.7 860 533.7 820 522.7 780 511.5 740 499.4 700 486.9 660 474.3 620 461.4 580 447.7 540 434 500 420.5 460 405.9 420 390.2 408 385.3 396 380.6 384 375.9 372 370.8 360 365.4 348 360 336 354.4 324 348.8 312 343.4 300 338 298 337.2 295 335.9 292 334.5 289 333.2 286 331.8 283 330.4 280 329 277 327.5 274 326 271 324.5 268 322.8 265 321 262 319.2 259 317.3 256 315.2 253 313 250 310.4Z" fill="url(#g51)"/>
<path d="M250 310.4 253 312.9 256 315.1 259 317.1 262 318.9 265 320.7 268 322.4 271 324.1 274 325.6 277 327.1 280 328.5 283 329.9 286 331.2 289 332.6 292 333.9 295 335.2 298 336.4 300 337.3 312 342.5 324 347.8 336 353.3 348 358.8 360 364.2 372 369.5 384 374.6 396 379.1 408 383.8 420 388.6 460 404.3 500 418.8 540 432.2 580 445.8 620 459.5 660 472.3 700 484.8 740 497.3 780 509.3 820 520.5 860 531.5 900 542.5 940 553.1 980 563.1 1020 573 1060 582.6 1100 592 1140 601.2 1180 610.3 1220 619.2 1260 628 1300 636.6 1340 645.4 1380 654.1 1420 662.8 1460 671.4 1500 680.1 1540 688.8 1580 697.7 1620 706.6 1660 715.8 1700 725.6 1740 735.3 1748 737 1756 738.5 1764 739.8 1770 740.2 1772.5 739.8 1775 739.2 1777.5 738 1780 735.9 1782.5 731.8 1785 725.5 1787.5 716.6 1790 704.6 1791.3 694 1791.3 694 1790 705.1 1787.5 717.8 1785 727 1782.5 733.6 1780 737.9 1777.5 740.1 1775 741.4 1772.5 742.1 1770 742.6 1764 742.3 1756 741 1748 739.6 1740 738 1700 728.5 1660 718.9 1620 709.9 1580 701.2 1540 692.5 1500 684 1460 675.6 1420 667.1 1380 658.6 1340 650 1300 641.4 1260 632.9 1220 624.3 1180 615.4 1140 606.4 1100 597.1 1060 587.7 1020 578.1 980 568.2 940 558.2 900 547.6 860 536.5 820 525.5 780 514.3 740 502.2 700 489.6 660 477 620 464 580 450.1 540 436.4 500 422.8 460 408 420 392.1 408 387.2 396 382.4 384 377.7 372 372.5 360 367 348 361.5 336 355.7 324 350.1 312 344.5 300 339 298 338.1 295 336.7 292 335.4 289 334 286 332.6 283 331.1 280 329.7 277 328.2 274 326.6 271 325 268 323.3 265 321.5 262 319.6 259 317.6 256 315.5 253 313.1 250 310.4Z" fill="url(#g52)"/>
<path d="M250 310.4 253 313 256 315.3 259 317.4 262 319.3 265 321.1 268 322.9 271 324.6 274 326.2 277 327.7 280 329.2 283 330.6 286 332 289 333.4 292 334.7 295 336.1 298 337.4 300 338.2 312 343.6 324 349.1 336 354.7 348 360.3 360 365.8 372 371.2 384 376.3 396 381 408 385.7 420 390.6 460 406.4 500 421 540 434.6 580 448.2 620 462 660 474.9 700 487.4 740 500 780 512.1 820 523.3 860 534.3 900 545.3 940 555.9 980 566 1020 575.8 1060 585.5 1100 594.9 1140 604.1 1180 613.2 1220 622.1 1260 630.7 1300 639.3 1340 648 1380 656.6 1420 665.2 1460 673.7 1500 682.3 1540 690.9 1580 699.7 1620 708.5 1660 717.6 1700 727.2 1740 736.8 1748 738.4 1756 739.9 1764 741.2 1770 741.5 1772.5 741.1 1775 740.5 1777.5 739.2 1780 737 1782.5 732.9 1785 726.4 1787.5 717.3 1790 704.9 1791.3 694 1791.3 694 1790 705.4 1787.5 718.4 1785 727.9 1782.5 734.7 1780 739 1777.5 741.3 1775 742.7 1772.5 743.4 1770 743.9 1764 743.7 1756 742.5 1748 741.1 1740 739.5 1700 730.1 1660 720.7 1620 711.8 1580 703.2 1540 694.6 1500 686.2 1460 677.9 1420 669.5 1380 661.1 1340 652.7 1300 644.1 1260 635.7 1220 627.1 1180 618.3 1140 609.2 1100 600 1060 590.6 1020 580.9 980 571.1 940 561 900 550.4 860 539.4 820 528.3 780 517.1 740 504.9 700 492.2 660 479.6 620 466.5 580 452.6 540 438.7 500 425 460 410.1 420 394 408 389.1 396 384.2 384 379.5 372 374.2 360 368.6 348 363 336 357.1 324 351.3 312 345.6 300 340 298 339 295 337.6 292 336.2 289 334.8 286 333.3 283 331.9 280 330.3 277 328.8 274 327.2 271 325.5 268 323.8 265 321.9 262 319.9 259 317.9 256 315.7 253 313.3 250 310.4Z" fill="url(#g53)"/>
<path d="M250 310.4 253 313.2 256 315.5 259 317.6 262 319.6 265 321.6 268 323.4 271 325.1 274 326.8 277 328.3 280 329.8 283 331.3 286 332.7 289 334.2 292 335.6 295 336.9 298 338.3 300 339.2 312 344.7 324 350.3 336 356 348 361.8 360 367.4 372 372.9 384 378.1 396 382.8 408 387.6 420 392.5 460 408.5 500 423.2 540 436.9 580 450.7 620 464.5 660 477.5 700 490.1 740 502.8 780 514.9 820 526.1 860 537.1 900 548.2 940 558.8 980 568.8 1020 578.7 1060 588.3 1100 597.8 1140 607 1180 616 1220 624.9 1260 633.5 1300 642 1340 650.6 1380 659.2 1420 667.6 1460 676.1 1500 684.5 1540 693 1580 701.6 1620 710.3 1660 719.3 1700 728.9 1740 738.3 1748 739.9 1756 741.3 1764 742.6 1770 742.9 1772.5 742.4 1775 741.7 1777.5 740.4 1780 738.1 1782.5 733.9 1785 727.2 1787.5 717.9 1790 705.2 1791.3 694 1791.3 694 1790 705.7 1787.5 719 1785 728.7 1782.5 735.7 1780 740.1 1777.5 742.5 1775 744 1772.5 744.7 1770 745.2 1764 745 1756 743.9 1748 742.5 1740 741 1700 731.8 1660 722.4 1620 713.6 1580 705.1 1540 696.7 1500 688.4 1460 680.2 1420 671.9 1380 663.7 1340 655.3 1300 646.8 1260 638.4 1220 629.9 1180 621.1 1140 612.1 1100 602.9 1060 593.4 1020 583.8 980 573.9 940 563.9 900 553.3 860 542.2 820 531.2 780 519.9 740 507.7 700 494.9 660 482.2 620 469.1 580 455 540 441.1 500 427.2 460 412.2 420 396 408 391 396 386 384 381.2 372 375.9 360 370.2 348 364.5 336 358.5 324 352.6 312 346.7 300 340.9 298 340 295 338.5 292 337.1 289 335.6 286 334.1 283 332.6 280 331 277 329.4 274 327.8 271 326.1 268 324.2 265 322.3 262 320.3 259 318.2 256 315.9 253 313.4 250 310.4Z" fill="url(#g54)"/>
<path d="M250 310.4 253 313.3 256 315.7 259 317.9 262 320 265 322 268 323.9 271 325.6 274 327.3 277 328.9 280 330.5 283 332 286 333.5 289 335 292 336.4 295 337.8 298 339.2 300 340.2 312 345.8 324 351.6 336 357.4 348 363.3 360 369 372 374.6 384 379.9 396 384.6 408 389.5 420 394.5 460 410.6 500 425.5 540 439.2 580 453.1 620 467.1 660 480.2 700 492.8 740 505.5 780 517.7 820 529 860 540 900 551.1 940 561.7 980 571.7 1020 581.6 1060 591.2 1100 600.6 1140 609.9 1180 618.9 1220 627.7 1260 636.3 1300 644.7 1340 653.2 1380 661.7 1420 670 1460 678.4 1500 686.7 1540 695.1 1580 703.6 1620 712.2 1660 721.1 1700 730.5 1740 739.8 1748 741.4 1756 742.8 1764 744 1770 744.2 1772.5 743.7 1775 743 1777.5 741.6 1780 739.3 1782.5 734.9 1785 728.1 1787.5 718.5 1790 705.5 1791.3 694 1791.3 694 1790 706 1787.5 719.6 1785 729.6 1782.5 736.7 1780 741.3 1777.5 743.7 1775 745.2 1772.5 746 1770 746.6 1764 746.4 1756 745.3 1748 744 1740 742.5 1700 733.4 1660 724.2 1620 715.5 1580 707.1 1540 698.8 1500 690.6 1460 682.5 1420 674.4 1380 666.2 1340 657.9 1300 649.5 1260 641.2 1220 632.7 1180 624 1140 615 1100 605.7 1060 596.3 1020 586.7 980 576.8 940 566.8 900 556.1 860 545 820 534 780 522.7 740 510.4 700 497.6 660 484.8 620 471.6 580 457.5 540 443.4 500 429.4 460 414.3 420 397.9 408 392.8 396 387.9 384 383 372 377.6 360 371.8 348 366 336 359.9 324 353.8 312 347.8 300 341.9 298 340.9 295 339.4 292 337.9 289 336.4 286 334.9 283 333.3 280 331.7 277 330.1 274 328.4 271 326.6 268 324.7 265 322.7 262 320.7 259 318.5 256 316.1 253 313.5 250 310.4Z" fill="url(#g55)"/>
<path d="M250 310.4 253 313.4 256 316 259 318.2 262 320.4 265 322.4 268 324.3 271 326.2 274 327.9 277 329.6 280 331.2 283 332.7 286 334.3 289 335.8 292 337.3 295 338.7 298 340.2 300 341.1 312 346.9 324 352.8 336 358.8 348 364.8 360 370.6 372 376.3 384 381.6 396 386.5 408 391.4 420 396.4 460 412.6 500 427.7 540 441.6 580 455.6 620 469.6 660 482.8 700 495.5 740 508.3 780 520.5 820 531.8 860 542.8 900 553.9 940 564.5 980 574.6 1020 584.4 1060 594.1 1100 603.5 1140 612.7 1180 621.7 1220 630.5 1260 639 1300 647.4 1340 655.9 1380 664.2 1420 672.5 1460 680.7 1500 688.9 1540 697.2 1580 705.6 1620 714.1 1660 722.8 1700 732.1 1740 741.3 1748 742.9 1756 744.2 1764 745.4 1770 745.5 1772.5 745 1775 744.2 1777.5 742.8 1780 740.4 1782.5 735.9 1785 728.9 1787.5 719.1 1790 705.8 1791.3 694 1791.3 694 1790 706.3 1787.5 720.3 1785 730.4 1782.5 737.7 1780 742.4 1777.5 744.9 1775 746.5 1772.5 747.3 1770 747.9 1764 747.8 1756 746.7 1748 745.5 1740 744 1700 735.1 1660 725.9 1620 717.4 1580 709.1 1540 700.9 1500 692.8 1460 684.8 1420 676.8 1380 668.7 1340 660.5 1300 652.2 1260 644 1220 635.6 1180 626.8 1140 617.8 1100 608.6 1060 599.2 1020 589.5 980 579.7 940 569.6 900 559 860 547.9 820 536.8 780 525.5 740 513.2 700 500.3 660 487.5 620 474.2 580 459.9 540 445.7 500 431.6 460 416.4 420 399.8 408 394.7 396 389.7 384 384.8 372 379.3 360 373.4 348 367.5 336 361.3 324 355.1 312 348.9 300 342.8 298 341.8 295 340.3 292 338.8 289 337.2 286 335.6 283 334 280 332.4 277 330.7 274 328.9 271 327.1 268 325.2 265 323.2 262 321 259 318.8 256 316.4 253 313.7 250 310.5Z" fill="url(#g56)"/>
<path d="M250 310.4 253 313.6 256 316.2 259 318.5 262 320.7 265 322.8 268 324.8 271 326.7 274 328.5 277 330.2 280 331.8 283 333.4 286 335 289 336.6 292 338.1 295 339.6 298 341.1 300 342.1 312 348 324 354.1 336 360.2 348 366.3 360 372.2 372 378 384 383.4 396 388.3 408 393.3 420 398.3 460 414.7 500 429.9 540 443.9 580 458 620 472.2 660 485.4 700 498.2 740 511 780 523.3 820 534.6 860 545.7 900 556.8 940 567.4 980 577.4 1020 587.3 1060 596.9 1100 606.4 1140 615.6 1180 624.6 1220 633.4 1260 641.8 1300 650.1 1340 658.5 1380 666.8 1420 674.9 1460 683 1500 691.1 1540 699.3 1580 707.5 1620 715.9 1660 724.6 1700 733.8 1740 742.8 1748 744.3 1756 745.6 1764 746.7 1770 746.9 1772.5 746.3 1775 745.5 1777.5 744 1780 741.5 1782.5 736.9 1785 729.8 1787.5 719.8 1790 706.1 1791.3 694 1791.3 694 1790 706.6 1787.5 720.9 1785 731.3 1782.5 738.7 1780 743.5 1777.5 746.1 1775 747.7 1772.5 748.6 1770 749.2 1764 749.2 1756 748.2 1748 746.9 1740 745.5 1700 736.7 1660 727.7 1620 719.2 1580 711 1540 703 1500 695 1460 687.1 1420 679.2 1380 671.3 1340 663.1 1300 654.9 1260 646.7 1220 638.4 1180 629.7 1140 620.7 1100 611.5 1060 602 1020 592.4 980 582.5 940 572.5 900 561.9 860 550.7 820 539.6 780 528.3 740 515.9 700 503 660 490.1 620 476.7 580 462.4 540 448.1 500 433.9 460 418.5 420 401.8 408 396.6 396 391.5 384 386.5 372 381 360 375 348 369 336 362.7 324 356.3 312 350 300 343.8 298 342.7 295 341.2 292 339.6 289 338 286 336.4 283 334.7 280 333 277 331.3 274 329.5 271 327.7 268 325.7 265 323.6 262 321.4 259 319.1 256 316.6 253 313.8 250 310.5Z" fill="url(#g57)"/>
<path d="M250 310.5 253 313.7 256 316.4 259 318.8 262 321.1 265 323.3 268 325.3 271 327.2 274 329.1 277 330.8 280 332.5 283 334.2 286 335.8 289 337.4 292 339 295 340.5 298 342 300 343 312 349.2 324 355.3 336 361.6 348 367.8 360 373.8 372 379.6 384 385.2 396 390.1 408 395.2 420 400.3 460 416.8 500 432.1 540 446.3 580 460.5 620 474.7 660 488 700 500.9 740 513.8 780 526.1 820 537.4 860 548.5 900 559.6 940 570.3 980 580.3 1020 590.2 1060 599.8 1100 609.2 1140 618.5 1180 627.5 1220 636.2 1260 644.6 1300 652.8 1340 661.1 1380 669.3 1420 677.3 1460 685.3 1500 693.3 1540 701.4 1580 709.5 1620 717.8 1660 726.3 1700 735.4 1740 744.3 1748 745.8 1756 747.1 1764 748.1 1770 748.2 1772.5 747.6 1775 746.7 1777.5 745.2 1780 742.7 1782.5 737.9 1785 730.6 1787.5 720.4 1790 706.4 1791.3 694 1791.3 694 1790 706.9 1787.5 721.5 1785 732.1 1782.5 739.7 1780 744.7 1777.5 747.3 1775 749 1772.5 749.9 1770 750.6 1764 750.6 1756 749.6 1748 748.4 1740 747 1700 738.3 1660 729.4 1620 721.1 1580 713 1540 705.1 1500 697.2 1460 689.4 1420 681.6 1380 673.8 1340 665.8 1300 657.6 1260 649.5 1220 641.2 1180 632.5 1140 623.6 1100 614.3 1060 604.9 1020 595.3 980 585.4 940 575.4 900 564.7 860 553.6 820 542.4 780 531.1 740 518.7 700 505.7 660 492.7 620 479.2 580 464.8 540 450.4 500 436.1 460 420.5 420 403.7 408 398.5 396 393.4 384 388.3 372 382.7 360 376.6 348 370.5 336 364 324 357.6 312 351.1 300 344.7 298 343.7 295 342.1 292 340.5 289 338.8 286 337.1 283 335.4 280 333.7 277 331.9 274 330.1 271 328.2 268 326.2 265 324 262 321.7 259 319.4 256 316.8 253 313.9 250 310.5Z" fill="url(#g58)"/>
<path d="M250 310.5 253 313.8 256 316.6 259 319.1 262 321.5 265 323.7 268 325.8 271 327.8 274 329.7 277 331.5 280 333.2 283 334.9 286 336.5 289 338.2 292 339.8 295 341.4 298 342.9 300 344 312 350.3 324 356.6 336 363 348 369.3 360 375.4 372 381.3 384 386.9 396 391.9 408 397 420 402.2 460 418.9 500 434.3 540 448.6 580 462.9 620 477.3 660 490.7 700 503.6 740 516.5 780 528.9 820 540.2 860 551.3 900 562.5 940 573.1 980 583.2 1020 593 1060 602.7 1100 612.1 1140 621.3 1180 630.3 1220 639 1260 647.4 1300 655.5 1340 663.7 1380 671.8 1420 679.7 1460 687.6 1500 695.5 1540 703.5 1580 711.5 1620 719.6 1660 728.1 1700 737.1 1740 745.9 1748 747.3 1756 748.5 1764 749.5 1770 749.5 1772.5 748.9 1775 748 1777.5 746.4 1780 743.8 1782.5 739 1785 731.5 1787.5 721 1790 706.7 1791.3 694 1791.3 694 1790 708 1787.5 723.6 1785 735 1782.5 743.2 1780 748.5 1777.5 751.4 1775 753.3 1772.5 754.3 1770 755.1 1764 755.3 1756 754.5 1748 753.4 1740 752.2 1700 743.9 1660 735.4 1620 727.4 1580 719.7 1540 712.2 1500 704.7 1460 697.3 1420 689.8 1380 682.4 1340 674.7 1300 666.8 1260 658.9 1220 650.8 1180 642.3 1140 633.4 1100 624.1 1060 614.6 1020 605 980 595.2 940 585.1 900 574.4 860 563.2 820 552 780 540.6 740 528 700 514.9 660 501.7 620 487.9 580 473.2 540 458.4 500 443.6 460 427.6 420 410.3 408 404.9 396 399.6 384 394.3 372 388.4 360 382.1 348 375.6 336 368.7 324 361.8 312 354.9 300 348 298 346.8 295 345.1 292 343.3 289 341.5 286 339.7 283 337.9 280 336 277 334.1 274 332.1 271 330 268 327.8 265 325.4 262 323 259 320.4 256 317.6 253 314.4 250 310.6Z" fill="url(#g59)"/>
</g>
<defs>
<clipPath id="cclip"><path d="M472.0 373.0 L500.0 383.0 L550.0 400.9 L625.0 428.0 L700.0 452.8 L760.0 472.1 L816.0 488.5 L845.0 493.0 L872.0 497.7 L909.5 498.8 L947.0 492.5 L984.0 484.6 L1021.7 475.2 L1049.7 465.9 L1063.0 458.0 L1069.5 450.0 L1071.2 445.3 L1069.5 441.0 L1064.0 436.5 L1052.0 432.2 L1040.0 429.3 L1010.0 422.0 L980.0 414.5 L950.0 407.0 L920.0 399.4 L890.0 391.8 L860.0 384.2 L830.0 376.8 L800.0 369.5 L770.0 362.2 L740.0 354.7 L710.0 347.4 L680.0 340.6 L650.0 334.1 L635.0 330.8 Z"/></clipPath>
<filter id="bl2" color-interpolation-filters="sRGB" x="-10%" y="-30%" width="120%" height="160%"><feGaussianBlur stdDeviation="2.5"/></filter>
<filter id="bl4" color-interpolation-filters="sRGB" x="-10%" y="-30%" width="120%" height="160%"><feGaussianBlur stdDeviation="5"/></filter>
<filter id="bl5" color-interpolation-filters="sRGB" x="-30%" y="-60%" width="160%" height="220%"><feGaussianBlur stdDeviation="7"/></filter>
<filter id="bl9" color-interpolation-filters="sRGB" x="-40%" y="-80%" width="180%" height="260%"><feGaussianBlur stdDeviation="14"/></filter>
<filter id="bl1" color-interpolation-filters="sRGB" x="-10%" y="-30%" width="120%" height="160%"><feGaussianBlur stdDeviation="0.9"/></filter>
<linearGradient id="cfl" gradientUnits="userSpaceOnUse" x1="470" y1="0" x2="1075" y2="0"><stop offset="0" stop-color="#0ba29f" stop-opacity="0.2"/><stop offset="0.3" stop-color="#0ca4a1" stop-opacity="0.7"/><stop offset="0.7" stop-color="#0ea9a6" stop-opacity="0.85"/><stop offset="1" stop-color="#11b1ae" stop-opacity="1"/></linearGradient>
<linearGradient id="bkg" gradientUnits="userSpaceOnUse" x1="850" y1="0" x2="1010" y2="0"><stop offset="0" stop-color="#12bcbb" stop-opacity="0"/><stop offset="1" stop-color="#12bcbb" stop-opacity="0.75"/></linearGradient>
<linearGradient id="bkg2" gradientUnits="userSpaceOnUse" x1="930" y1="0" x2="1075" y2="0"><stop offset="0" stop-color="#1ad2cf" stop-opacity="0"/><stop offset="0.6" stop-color="#1ad2cf" stop-opacity="0.7"/><stop offset="1" stop-color="#1dd8d5" stop-opacity="1"/></linearGradient>
<linearGradient id="shg" gradientUnits="userSpaceOnUse" x1="470" y1="0" x2="1025" y2="0"><stop offset="0" stop-color="#069290" stop-opacity="0"/><stop offset="0.15" stop-color="#069290" stop-opacity="0.7"/><stop offset="0.75" stop-color="#069290" stop-opacity="0.75"/><stop offset="1" stop-color="#069290" stop-opacity="0"/></linearGradient>
<linearGradient id="stg" gradientUnits="userSpaceOnUse" x1="1060" y1="0" x2="1790" y2="0"><stop offset="0" stop-color="#0a9e9b" stop-opacity="0.5"/><stop offset="0.38" stop-color="#089a97" stop-opacity="0.6"/><stop offset="0.5" stop-color="#079693" stop-opacity="0.85"/><stop offset="1" stop-color="#079693" stop-opacity="0.85"/></linearGradient>
</defs>
<path d="M1060.0 432.1 L1080.0 436.8 L1100.0 441.3 L1120.0 445.8 L1140.0 450.4 L1160.0 455.2 L1180.0 460.3 L1200.0 465.4 L1220.0 470.8 L1240.0 476.5 L1260.0 482.4 L1280.0 488.5 L1300.0 494.7 L1320.0 501.1 L1340.0 507.7 L1360.0 514.4 L1380.0 521.2 L1400.0 528.2 L1420.0 535.4 L1440.0 542.5 L1460.0 549.6 L1480.0 556.7 L1500.0 563.8 L1520.0 571.0 L1540.0 578.4 L1560.0 585.9 L1580.0 593.5 L1600.0 601.0 L1620.0 608.3 L1640.0 615.6 L1660.0 622.9 L1680.0 630.5 L1700.0 638.5 L1720.0 646.7 L1740.0 655.1 L1760.0 664.1 L1780.0 675.3 L1780.0 677.3 L1760.0 667.1 L1740.0 659.1 L1720.0 651.6 L1700.0 644.2 L1680.0 637.0 L1660.0 630.4 L1640.0 624.1 L1620.0 617.8 L1600.0 611.5 L1580.0 606.0 L1560.0 600.4 L1540.0 594.9 L1520.0 589.3 L1500.0 583.5 L1480.0 577.7 L1460.0 572.0 L1440.0 566.2 L1420.0 560.4 L1400.0 554.6 L1380.0 548.9 L1360.0 543.6 L1340.0 538.5 L1320.0 533.5 L1300.0 528.7 L1280.0 520.9 L1260.0 513.2 L1240.0 505.7 L1220.0 498.4 L1200.0 491.4 L1180.0 483.5 L1160.0 475.6 L1140.0 468.0 L1120.0 460.6 L1100.0 453.3 L1080.0 443.8 L1060.0 434.1 Z" fill="url(#stg)" filter="url(#bl1)"/>
<path d="M1080.0 436.8 L1100.0 441.3 L1120.0 445.8 L1140.0 450.4 L1160.0 455.2 L1180.0 460.3 L1200.0 465.4 L1220.0 470.8 L1240.0 476.5 L1260.0 482.4 L1280.0 488.5 L1300.0 494.7 L1320.0 501.1 L1340.0 507.7 L1360.0 514.4 L1380.0 521.2 L1400.0 528.2 L1400.0 552.2 L1380.0 542.7 L1360.0 533.4 L1340.0 526.7 L1320.0 520.1 L1300.0 513.7 L1280.0 506.9 L1260.0 500.2 L1240.0 493.7 L1220.0 487.4 L1200.0 481.4 L1180.0 474.3 L1160.0 467.2 L1140.0 460.4 L1120.0 453.8 L1100.0 446.3 L1080.0 438.8 Z" fill="#079491" opacity="0.7" filter="url(#bl1)"/>
<g clip-path="url(#cclip)">
<path d="M472.0 373.0 L500.0 383.0 L550.0 400.9 L625.0 428.0 L700.0 452.8 L760.0 472.1 L816.0 488.5 L845.0 493.0 L872.0 497.7 L909.5 498.8 L947.0 492.5 L984.0 484.6 L1021.7 475.2 L1049.7 465.9 L1063.0 458.0 L1069.5 450.0 L1071.2 445.3 L1069.5 441.0 L1064.0 436.5 L1052.0 432.2 L1040.0 429.3 L1010.0 422.0 L980.0 414.5 L950.0 407.0 L920.0 399.4 L890.0 391.8 L860.0 384.2 L830.0 376.8 L800.0 369.5 L770.0 362.2 L740.0 354.7 L710.0 347.4 L680.0 340.6 L650.0 334.1 L635.0 330.8 Z" fill="url(#cfl)"/>
<path d="M690.0 392.0 L760.0 409.0 L850.0 433.0 L930.0 455.0 L985.0 466.0 L1000.0 474.0 L960.0 480.0 L900.0 474.0 L830.0 458.0 L760.0 440.0 L700.0 422.0 L660.0 404.0 Z" fill="#16b8b6" opacity="0.28" filter="url(#bl4)"/>
<path d="M480.0 375.4 L500.0 383.0 L550.0 400.9 L625.0 428.0 L700.0 452.8 L760.0 472.1 L816.0 488.5 L845.0 493.0 L872.0 497.7 L909.5 498.8 L947.0 492.5 L984.0 484.6 L1021.0 475.2" fill="none" stroke="url(#shg)" stroke-width="11" filter="url(#bl2)"/>
<path d="M630.0 327.8 L645.0 331.0 L660.0 334.2 L675.0 337.5 L690.0 340.8 L705.0 344.3 L720.0 347.8 L735.0 351.5 L750.0 355.2 L765.0 358.9 L780.0 362.6 L795.0 366.3 L810.0 369.9 L825.0 373.5 L840.0 377.2 L855.0 380.9 L870.0 384.7 L885.0 388.5 L900.0 392.4 L915.0 396.2 L930.0 400.0 L945.0 403.7 L960.0 407.5 L975.0 411.3 L990.0 415.0 L1005.0 418.7 L1020.0 422.4 L1035.0 426.0 L1050.0 429.7 L1050.0 484.9 L1035.0 479.1 L1020.0 473.3 L1005.0 467.5 L990.0 461.7 L975.0 456.0 L960.0 450.2 L945.0 444.4 L930.0 438.6 L915.0 433.1 L900.0 427.7 L885.0 422.3 L870.0 416.9 L855.0 411.5 L840.0 406.3 L825.0 401.3 L810.0 396.3 L795.0 391.4 L780.0 386.4 L765.0 381.4 L750.0 375.6 L735.0 369.3 L720.0 363.2 L705.0 357.1 L690.0 351.4 L675.0 345.9 L660.0 340.5 L645.0 335.1 L630.0 329.8 Z" fill="#18c0be" filter="url(#bl5)" opacity="0.32"/>
<path d="M630.0 327.8 L645.0 331.0 L660.0 334.2 L675.0 337.5 L690.0 340.8 L705.0 344.3 L720.0 347.8 L735.0 351.5 L750.0 355.2 L765.0 358.9 L780.0 362.6 L795.0 366.3 L810.0 369.9 L825.0 373.5 L840.0 377.2 L855.0 380.9 L870.0 384.7 L885.0 388.5 L900.0 392.4 L915.0 396.2 L930.0 400.0 L945.0 403.7 L960.0 407.5 L975.0 411.3 L990.0 415.0 L1005.0 418.7 L1020.0 422.4 L1035.0 426.0 L1050.0 429.7 L1050.0 461.3 L1035.0 456.6 L1020.0 451.9 L1005.0 447.1 L990.0 442.2 L975.0 437.3 L960.0 432.3 L945.0 427.3 L930.0 422.4 L915.0 417.5 L900.0 412.7 L885.0 407.9 L870.0 403.1 L855.0 398.3 L840.0 393.8 L825.0 389.4 L810.0 385.1 L795.0 380.8 L780.0 376.5 L765.0 372.2 L750.0 367.4 L735.0 362.4 L720.0 357.5 L705.0 352.7 L690.0 348.0 L675.0 343.3 L660.0 338.8 L645.0 334.3 L630.0 329.8 Z" fill="#16c6c4" filter="url(#bl2)" opacity="0.9"/>
<path d="M845.0 493.0 L872.0 497.7 L909.5 498.8 L947.0 492.5 L984.0 484.6 L1021.7 475.2 L1049.7 465.9 L1063.0 458.0 L1069.5 450.0 L1071.2 445.3 L1069.5 441.0 L1064.0 436.5 L1052.0 432.2 L1030.0 427.0" fill="none" stroke="url(#bkg)" stroke-width="96" filter="url(#bl9)"/>
<path d="M845.0 493.0 L872.0 497.7 L909.5 498.8 L947.0 492.5 L984.0 484.6 L1021.7 475.2 L1049.7 465.9 L1063.0 458.0 L1069.5 450.0 L1071.2 445.3 L1069.5 441.0 L1064.0 436.5 L1052.0 432.2 L1030.0 427.0" fill="none" stroke="url(#bkg2)" stroke-width="34" filter="url(#bl5)"/>
<path d="M1063.0 458.0 L1069.5 450.0 L1071.2 445.3 L1069.5 441.0 L1064.0 436.5 L1052.0 432.2 L1030.0 427.0" fill="none" stroke="#26e6e2" stroke-width="3" filter="url(#bl1)" opacity="0.9"/>
</g>
<path d="M250.0 309.8 L254.0 305.4 L258.0 302.5 L262.0 300.4 L266.0 298.7 L270.0 297.2 L274.0 295.8 L278.0 294.6 L282.0 293.4 L286.0 292.3 L290.0 291.1 L294.0 289.8 L298.0 288.6 L300.0 288.0 L330.0 282.5 L360.0 281.5 L390.0 284.0 L420.0 288.5 L450.0 294.4 L480.0 300.4 L510.0 305.9 L540.0 311.2 L570.0 317.1 L600.0 323.6 L630.0 330.1 L660.0 336.5 L690.0 343.1 L720.0 350.1 L750.0 357.5 L780.0 364.9 L810.0 372.2 L840.0 379.5 L870.0 387.0 L900.0 394.7 L930.0 402.3 L960.0 409.8 L990.0 417.3 L1020.0 424.7 L1050.0 432.0 L1080.0 439.1 L1110.0 445.9 L1140.0 452.7 L1170.0 460.0 L1200.0 467.7 L1230.0 475.9 L1260.0 484.7 L1290.0 493.9 L1320.0 503.4 L1350.0 513.3 L1380.0 523.5 L1410.0 534.1 L1440.0 544.8 L1470.0 555.5 L1500.0 566.1 L1530.0 576.9 L1560.0 588.2 L1590.0 599.6 L1620.0 610.6 L1650.0 621.5 L1680.0 632.8 L1710.0 644.9 L1740.0 657.4 L1760.0 666.4 L1763.0 667.8 L1766.0 669.3 L1769.0 670.9 L1772.0 672.5 L1775.0 674.3 L1778.0 676.2 L1781.0 678.3 L1784.0 680.8 L1787.0 683.9 L1790.0 689.1 L1791.3 694.3" fill="none" stroke="#0a7e86" stroke-width="1.3" opacity="0.55"/>
<path d="M420.0 404.0 L450.0 416.7 L480.0 428.9 L510.0 440.2 L540.0 450.9 L570.0 461.7 L600.0 472.6 L630.0 483.2 L660.0 493.3 L690.0 503.1 L720.0 512.8 L750.0 522.5 L780.0 531.7 L810.0 540.3 L840.0 548.6 L870.0 557.0 L900.0 565.4 L930.0 573.4 L960.0 581.1 L990.0 588.5 L1020.0 595.9 L1050.0 603.1 L1080.0 610.3 L1110.0 617.3 L1140.0 624.2 L1170.0 631.0 L1200.0 637.6 L1230.0 644.0 L1260.0 650.1 L1290.0 656.2 L1320.0 662.3 L1350.0 668.3 L1380.0 674.3 L1410.0 680.1 L1440.0 686.0 L1470.0 691.8 L1500.0 697.6 L1530.0 703.5 L1560.0 709.4 L1590.0 715.3 L1620.0 721.3 L1650.0 727.5 L1680.0 734.0 L1710.0 740.8 L1740.0 747.1 L1760.0 750.2 L1763.0 750.6 L1766.0 750.8 L1769.0 750.7" fill="none" stroke="#12a4b6" stroke-width="1.6" opacity="0.55"/>
<path d="M1768.0 751.0 L1770.0 750.8 L1772.0 750.3 L1774.0 749.6 L1776.0 748.6 L1778.0 747.1 L1780.0 744.8 L1782.0 741.0 L1784.0 735.8 L1786.0 728.2 L1788.0 718.9 L1790.0 706.8 L1791.3 693.7" fill="none" stroke="#0c8890" stroke-width="1.6" opacity="0.7"/>
</g>
</svg>
<!--BOARD_END-->
</body>
</html>
